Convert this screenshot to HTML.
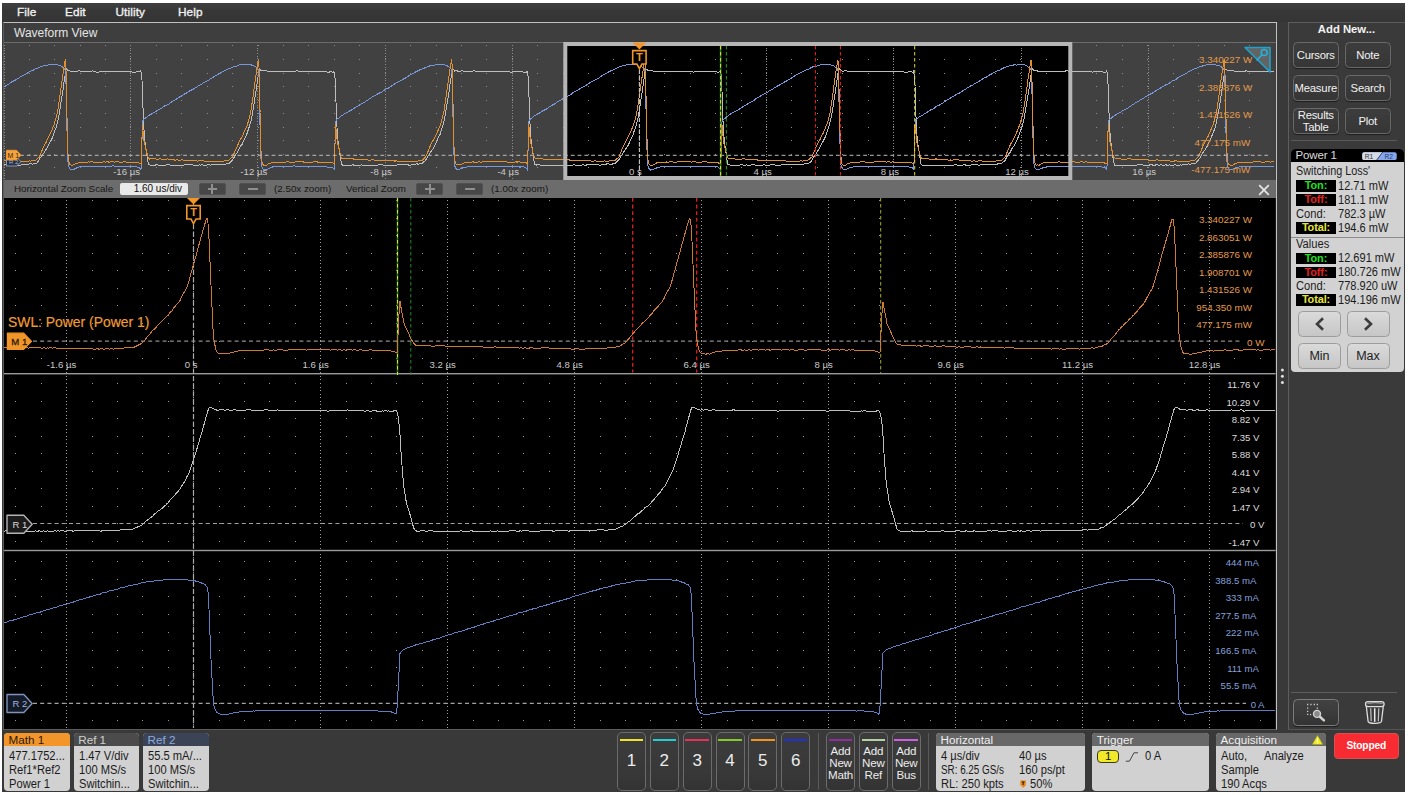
<!DOCTYPE html>
<html lang="en">
<head>
<meta charset="utf-8">
<title>Oscilloscope - Waveform View</title>
<style>
*{box-sizing:border-box;margin:0;padding:0}
html,body{width:1408px;height:795px;overflow:hidden;background:#fff}
body{font-family:"Liberation Sans",sans-serif;position:relative;color:#eee}
.abs{position:absolute}
#app{position:absolute;left:2px;top:3px;width:1403px;height:789px;background:#393939}
#menubar{position:absolute;left:2px;top:3px;width:1403px;height:19px;background:linear-gradient(#404040 0%,#373737 40%,#353535 100%)}
#menubar span{position:absolute;top:2.2px;font-size:11.8px;color:#f0f0f0;-webkit-text-stroke:0.35px #f0f0f0;letter-spacing:0.1px}
#wvframe{position:absolute;left:3px;top:22px;width:1274px;height:708px;border:1px solid #8a8a8a;border-left-color:#5c5c5c;border-top-color:#c0c0c0;border-right:1.5px solid #c2c2c2;border-bottom-color:#5c5c5c;background:#3e3e3e}
#wvtitle{position:absolute;left:14px;top:26.3px;font-size:12px;color:#e4e4e4}
#rpanel{position:absolute;left:1288px;top:22px;width:117px;height:708px;border-left:1px solid #5e5e5e;border-top:1px solid #5e5e5e;border-bottom:1px solid #555;background:#3a3a3a}
#zoombar{position:absolute;left:4px;top:180px;width:1271.5px;height:18px;background:#6c6c6c;font-size:9.8px;color:#161616}
#zoombar span{position:absolute;top:3.2px;white-space:nowrap}
.zin{position:absolute;left:116px;top:2.5px;width:67.5px;height:12.5px;background:#e9e9e9;border-radius:2px;font-size:10px;color:#111;text-align:right;padding-right:5.5px;line-height:12.5px}
.zb{position:absolute;top:2.5px;width:27px;height:12.5px;background:#474747;border-radius:2px;border:1px solid #515151}
.zb i{position:absolute;left:8px;top:4.6px;width:9.5px;height:1.8px;background:#8f8f8f}
.zb b{position:absolute;left:11.9px;top:0.8px;width:1.8px;height:9.4px;background:#8f8f8f}
svg text.tl{font-size:9.6px;fill:#c9c9c9;font-family:"Liberation Sans",sans-serif}
svg text.ml{font-size:9.85px;fill:#e39a4a;font-family:"Liberation Sans",sans-serif}
svg text.rl{font-size:9.6px;fill:#dcdcdc;font-family:"Liberation Sans",sans-serif}
svg text.bl{font-size:9.6px;fill:#86a0dc;font-family:"Liberation Sans",sans-serif}
/* right panel */
.rbtn{position:absolute;width:45.5px;height:26px;border:1px solid #696969;border-radius:4.5px;background:linear-gradient(#3d3d3d,#363636);color:#f2f2f2;font-size:11.3px;letter-spacing:-0.25px;text-align:center;line-height:24px;box-shadow:0 1px 1px rgba(0,0,0,.5)}
.rbtn.two{line-height:11.5px;padding-top:1px}
#addnew{position:absolute;left:1290px;top:22px;width:113px;text-align:center;font-size:11.3px;font-weight:bold;color:#f4f4f4;line-height:15px}
/* power badge */
#pbadge{position:absolute;left:1291px;top:149px;width:112.5px;height:222.5px;background:#d2d2d2;border-radius:4px;overflow:hidden;color:#1c1c1c;font-size:12px}
#pbadge .hd{position:absolute;left:0;top:0;width:100%;height:13px;background:#000}
#pbadge .hd span{position:absolute;left:4.5px;top:-0.4px;font-size:11.5px;letter-spacing:-0.15px;color:#dcdcdc}
#pbadge .ln{position:absolute;left:5px;white-space:nowrap;line-height:14px;transform:scaleX(.93);transform-origin:0 0}
#pbadge .bk{position:absolute;left:5px;width:40px;height:11.6px;background:#000;text-align:center;line-height:11.9px;font-size:10.9px;font-weight:bold;overflow:hidden;letter-spacing:-0.1px}
#pbadge .v{position:absolute;left:46.5px;white-space:nowrap;line-height:14px;transform:scaleX(.92);transform-origin:0 0}
.pbtn{position:absolute;width:43px;height:26.2px;border:1px solid #9d9d9d;border-radius:4.5px;background:linear-gradient(#dadada,#c6c6c6);color:#1c1c1c;font-size:12.5px;text-align:center;line-height:24px}
/* bottom bar */
.badge{position:absolute;top:732.5px;height:58px;background:#d1d1d1;border-radius:4px;overflow:hidden;color:#1b1b1b;font-size:12px}
.badge .hd{position:absolute;left:0;top:0;width:100%;height:13.5px;font-size:11.7px;line-height:14px;padding-left:4.5px;white-space:nowrap}
.badge .ln{position:absolute;left:5px;white-space:nowrap;line-height:14px;transform:scaleX(.93);transform-origin:0 0}
.chb{position:absolute;top:732px;width:29px;height:59px;border:1px solid #6b6b6b;border-radius:5px;background:linear-gradient(#3c3c3c,#383838 70%,#333);color:#ececec;text-align:center}
.chb u{position:absolute;left:1.8px;right:1.8px;top:5.6px;height:2.2px;text-decoration:none}
.chb span{position:absolute;left:0;width:100%;top:17.5px;font-size:17px;line-height:20px}
.chb.add span{top:11.7px;font-size:11.6px;line-height:12px;letter-spacing:-0.2px}
.vsep{position:absolute;top:733px;width:1.3px;height:57px;background:#595959}
</style>
</head>
<body>
<div id="app"></div>
<div id="menubar"><span style="left:15px">File</span><span style="left:63px">Edit</span><span style="left:113.5px">Utility</span><span style="left:176px">Help</span></div>
<div id="wvframe"></div>
<div id="wvtitle">Waveform View</div>
<div id="rpanel"></div>

<svg class="abs" style="left:0;top:0" width="1408" height="795" viewBox="0 0 1408 795">
<rect x="4" y="42" width="1271.6" height="138" fill="#414141"/>
<rect x="565" y="44" width="505" height="134" fill="#000"/>
<rect x="4" y="42" width="1271.6" height="1" fill="#6c6c6c"/>
<path d="M29 45.5h1M54 45.5h1M80 45.5h1M105 45.5h1M130 45.5h1M156 45.5h1M181 45.5h1M207 45.5h1M232 45.5h1M258 45.5h1M283 45.5h1M308 45.5h1M334 45.5h1M359 45.5h1M385 45.5h1M410 45.5h1M436 45.5h1M461 45.5h1M486 45.5h1M512 45.5h1M537 45.5h1M1096 45.5h1M1122 45.5h1M1147 45.5h1M1173 45.5h1M1198 45.5h1M1224 45.5h1M1249 45.5h1M29 59.5h1M54 59.5h1M80 59.5h1M105 59.5h1M130 59.5h1M156 59.5h1M181 59.5h1M207 59.5h1M232 59.5h1M258 59.5h1M283 59.5h1M308 59.5h1M334 59.5h1M359 59.5h1M385 59.5h1M410 59.5h1M436 59.5h1M461 59.5h1M486 59.5h1M512 59.5h1M537 59.5h1M563 59.5h1M588 59.5h1M613 59.5h1M639 59.5h1M664 59.5h1M690 59.5h1M715 59.5h1M741 59.5h1M766 59.5h1M791 59.5h1M817 59.5h1M842 59.5h1M868 59.5h1M893 59.5h1M919 59.5h1M944 59.5h1M969 59.5h1M995 59.5h1M1020 59.5h1M1046 59.5h1M1071 59.5h1M1096 59.5h1M1122 59.5h1M1147 59.5h1M1173 59.5h1M1198 59.5h1M1224 59.5h1M1249 59.5h1M29 73.5h1M54 73.5h1M80 73.5h1M105 73.5h1M130 73.5h1M156 73.5h1M181 73.5h1M207 73.5h1M232 73.5h1M258 73.5h1M283 73.5h1M308 73.5h1M334 73.5h1M359 73.5h1M385 73.5h1M410 73.5h1M436 73.5h1M461 73.5h1M486 73.5h1M512 73.5h1M537 73.5h1M563 73.5h1M588 73.5h1M613 73.5h1M639 73.5h1M664 73.5h1M690 73.5h1M715 73.5h1M741 73.5h1M766 73.5h1M791 73.5h1M817 73.5h1M842 73.5h1M868 73.5h1M893 73.5h1M919 73.5h1M944 73.5h1M969 73.5h1M995 73.5h1M1020 73.5h1M1046 73.5h1M1071 73.5h1M1096 73.5h1M1122 73.5h1M1147 73.5h1M1173 73.5h1M1198 73.5h1M1224 73.5h1M1249 73.5h1M29 86.5h1M54 86.5h1M80 86.5h1M105 86.5h1M130 86.5h1M156 86.5h1M181 86.5h1M207 86.5h1M232 86.5h1M258 86.5h1M283 86.5h1M308 86.5h1M334 86.5h1M359 86.5h1M385 86.5h1M410 86.5h1M436 86.5h1M461 86.5h1M486 86.5h1M512 86.5h1M537 86.5h1M563 86.5h1M588 86.5h1M613 86.5h1M639 86.5h1M664 86.5h1M690 86.5h1M715 86.5h1M741 86.5h1M766 86.5h1M791 86.5h1M817 86.5h1M842 86.5h1M868 86.5h1M893 86.5h1M919 86.5h1M944 86.5h1M969 86.5h1M995 86.5h1M1020 86.5h1M1046 86.5h1M1071 86.5h1M1096 86.5h1M1122 86.5h1M1147 86.5h1M1173 86.5h1M1198 86.5h1M1224 86.5h1M1249 86.5h1M29 100.5h1M54 100.5h1M80 100.5h1M105 100.5h1M130 100.5h1M156 100.5h1M181 100.5h1M207 100.5h1M232 100.5h1M258 100.5h1M283 100.5h1M308 100.5h1M334 100.5h1M359 100.5h1M385 100.5h1M410 100.5h1M436 100.5h1M461 100.5h1M486 100.5h1M512 100.5h1M537 100.5h1M563 100.5h1M588 100.5h1M613 100.5h1M639 100.5h1M664 100.5h1M690 100.5h1M715 100.5h1M741 100.5h1M766 100.5h1M791 100.5h1M817 100.5h1M842 100.5h1M868 100.5h1M893 100.5h1M919 100.5h1M944 100.5h1M969 100.5h1M995 100.5h1M1020 100.5h1M1046 100.5h1M1071 100.5h1M1096 100.5h1M1122 100.5h1M1147 100.5h1M1173 100.5h1M1198 100.5h1M1224 100.5h1M1249 100.5h1M29 113.5h1M54 113.5h1M80 113.5h1M105 113.5h1M130 113.5h1M156 113.5h1M181 113.5h1M207 113.5h1M232 113.5h1M258 113.5h1M283 113.5h1M308 113.5h1M334 113.5h1M359 113.5h1M385 113.5h1M410 113.5h1M436 113.5h1M461 113.5h1M486 113.5h1M512 113.5h1M537 113.5h1M563 113.5h1M588 113.5h1M613 113.5h1M639 113.5h1M664 113.5h1M690 113.5h1M715 113.5h1M741 113.5h1M766 113.5h1M791 113.5h1M817 113.5h1M842 113.5h1M868 113.5h1M893 113.5h1M919 113.5h1M944 113.5h1M969 113.5h1M995 113.5h1M1020 113.5h1M1046 113.5h1M1071 113.5h1M1096 113.5h1M1122 113.5h1M1147 113.5h1M1173 113.5h1M1198 113.5h1M1224 113.5h1M1249 113.5h1M29 127.5h1M54 127.5h1M80 127.5h1M105 127.5h1M130 127.5h1M156 127.5h1M181 127.5h1M207 127.5h1M232 127.5h1M258 127.5h1M283 127.5h1M308 127.5h1M334 127.5h1M359 127.5h1M385 127.5h1M410 127.5h1M436 127.5h1M461 127.5h1M486 127.5h1M512 127.5h1M537 127.5h1M563 127.5h1M588 127.5h1M613 127.5h1M639 127.5h1M664 127.5h1M690 127.5h1M715 127.5h1M741 127.5h1M766 127.5h1M791 127.5h1M817 127.5h1M842 127.5h1M868 127.5h1M893 127.5h1M919 127.5h1M944 127.5h1M969 127.5h1M995 127.5h1M1020 127.5h1M1046 127.5h1M1071 127.5h1M1096 127.5h1M1122 127.5h1M1147 127.5h1M1173 127.5h1M1198 127.5h1M1224 127.5h1M1249 127.5h1M29 140.5h1M54 140.5h1M80 140.5h1M105 140.5h1M130 140.5h1M156 140.5h1M181 140.5h1M207 140.5h1M232 140.5h1M258 140.5h1M283 140.5h1M308 140.5h1M334 140.5h1M359 140.5h1M385 140.5h1M410 140.5h1M436 140.5h1M461 140.5h1M486 140.5h1M512 140.5h1M537 140.5h1M563 140.5h1M588 140.5h1M613 140.5h1M639 140.5h1M664 140.5h1M690 140.5h1M715 140.5h1M741 140.5h1M766 140.5h1M791 140.5h1M817 140.5h1M842 140.5h1M868 140.5h1M893 140.5h1M919 140.5h1M944 140.5h1M969 140.5h1M995 140.5h1M1020 140.5h1M1046 140.5h1M1071 140.5h1M1096 140.5h1M1122 140.5h1M1147 140.5h1M1173 140.5h1M1198 140.5h1M1224 140.5h1M1249 140.5h1M29 154.5h1M54 154.5h1M80 154.5h1M105 154.5h1M130 154.5h1M156 154.5h1M181 154.5h1M207 154.5h1M232 154.5h1M258 154.5h1M283 154.5h1M308 154.5h1M334 154.5h1M359 154.5h1M385 154.5h1M410 154.5h1M436 154.5h1M461 154.5h1M486 154.5h1M512 154.5h1M537 154.5h1M563 154.5h1M588 154.5h1M613 154.5h1M639 154.5h1M664 154.5h1M690 154.5h1M715 154.5h1M741 154.5h1M766 154.5h1M791 154.5h1M817 154.5h1M842 154.5h1M868 154.5h1M893 154.5h1M919 154.5h1M944 154.5h1M969 154.5h1M995 154.5h1M1020 154.5h1M1046 154.5h1M1071 154.5h1M1096 154.5h1M1122 154.5h1M1147 154.5h1M1173 154.5h1M1198 154.5h1M1224 154.5h1M1249 154.5h1M29 167.5h1M54 167.5h1M80 167.5h1M105 167.5h1M130 167.5h1M156 167.5h1M181 167.5h1M207 167.5h1M232 167.5h1M258 167.5h1M283 167.5h1M308 167.5h1M334 167.5h1M359 167.5h1M385 167.5h1M410 167.5h1M436 167.5h1M461 167.5h1M486 167.5h1M512 167.5h1M537 167.5h1M563 167.5h1M588 167.5h1M613 167.5h1M639 167.5h1M664 167.5h1M690 167.5h1M715 167.5h1M741 167.5h1M766 167.5h1M791 167.5h1M817 167.5h1M842 167.5h1M868 167.5h1M893 167.5h1M919 167.5h1M944 167.5h1M969 167.5h1M995 167.5h1M1020 167.5h1M1046 167.5h1M1071 167.5h1M1096 167.5h1M1122 167.5h1M1147 167.5h1M1173 167.5h1M1198 167.5h1M1224 167.5h1M1249 167.5h1" stroke="#8e8e8e" stroke-width="1" fill="none" opacity="1" shape-rendering="crispEdges"/>
<path d="M4 45.5h1M4 48.5h1M4 50.5h1M4 53.5h1M4 56.5h1M4 58.5h1M4 61.5h1M4 64.5h1M4 67.5h1M4 69.5h1M4 72.5h1M4 75.5h1M4 78.5h1M4 80.5h1M4 83.5h1M4 86.5h1M4 88.5h1M4 91.5h1M4 94.5h1M4 97.5h1M4 99.5h1M4 102.5h1M4 105.5h1M4 107.5h1M4 110.5h1M4 113.5h1M4 116.5h1M4 118.5h1M4 121.5h1M4 124.5h1M4 126.5h1M4 129.5h1M4 132.5h1M4 135.5h1M4 137.5h1M4 140.5h1M4 143.5h1M4 146.5h1M4 148.5h1M4 151.5h1M4 154.5h1M4 156.5h1M4 159.5h1M4 162.5h1M4 165.5h1M4 167.5h1M4 170.5h1M4 173.5h1M4 175.5h1M4 178.5h1M130 45.5h1M130 48.5h1M130 50.5h1M130 53.5h1M130 56.5h1M130 58.5h1M130 61.5h1M130 64.5h1M130 67.5h1M130 69.5h1M130 72.5h1M130 75.5h1M130 78.5h1M130 80.5h1M130 83.5h1M130 86.5h1M130 88.5h1M130 91.5h1M130 94.5h1M130 97.5h1M130 99.5h1M130 102.5h1M130 105.5h1M130 107.5h1M130 110.5h1M130 113.5h1M130 116.5h1M130 118.5h1M130 121.5h1M130 124.5h1M130 126.5h1M130 129.5h1M130 132.5h1M130 135.5h1M130 137.5h1M130 140.5h1M130 143.5h1M130 146.5h1M130 148.5h1M130 151.5h1M130 154.5h1M130 156.5h1M130 159.5h1M130 162.5h1M130 165.5h1M130 167.5h1M130 170.5h1M130 173.5h1M130 175.5h1M130 178.5h1M257 45.5h1M257 48.5h1M257 50.5h1M257 53.5h1M257 56.5h1M257 58.5h1M257 61.5h1M257 64.5h1M257 67.5h1M257 69.5h1M257 72.5h1M257 75.5h1M257 78.5h1M257 80.5h1M257 83.5h1M257 86.5h1M257 88.5h1M257 91.5h1M257 94.5h1M257 97.5h1M257 99.5h1M257 102.5h1M257 105.5h1M257 107.5h1M257 110.5h1M257 113.5h1M257 116.5h1M257 118.5h1M257 121.5h1M257 124.5h1M257 126.5h1M257 129.5h1M257 132.5h1M257 135.5h1M257 137.5h1M257 140.5h1M257 143.5h1M257 146.5h1M257 148.5h1M257 151.5h1M257 154.5h1M257 156.5h1M257 159.5h1M257 162.5h1M257 165.5h1M257 167.5h1M257 170.5h1M257 173.5h1M257 175.5h1M257 178.5h1M385 45.5h1M385 48.5h1M385 50.5h1M385 53.5h1M385 56.5h1M385 58.5h1M385 61.5h1M385 64.5h1M385 67.5h1M385 69.5h1M385 72.5h1M385 75.5h1M385 78.5h1M385 80.5h1M385 83.5h1M385 86.5h1M385 88.5h1M385 91.5h1M385 94.5h1M385 97.5h1M385 99.5h1M385 102.5h1M385 105.5h1M385 107.5h1M385 110.5h1M385 113.5h1M385 116.5h1M385 118.5h1M385 121.5h1M385 124.5h1M385 126.5h1M385 129.5h1M385 132.5h1M385 135.5h1M385 137.5h1M385 140.5h1M385 143.5h1M385 146.5h1M385 148.5h1M385 151.5h1M385 154.5h1M385 156.5h1M385 159.5h1M385 162.5h1M385 165.5h1M385 167.5h1M385 170.5h1M385 173.5h1M385 175.5h1M385 178.5h1M512 45.5h1M512 48.5h1M512 50.5h1M512 53.5h1M512 56.5h1M512 58.5h1M512 61.5h1M512 64.5h1M512 67.5h1M512 69.5h1M512 72.5h1M512 75.5h1M512 78.5h1M512 80.5h1M512 83.5h1M512 86.5h1M512 88.5h1M512 91.5h1M512 94.5h1M512 97.5h1M512 99.5h1M512 102.5h1M512 105.5h1M512 107.5h1M512 110.5h1M512 113.5h1M512 116.5h1M512 118.5h1M512 121.5h1M512 124.5h1M512 126.5h1M512 129.5h1M512 132.5h1M512 135.5h1M512 137.5h1M512 140.5h1M512 143.5h1M512 146.5h1M512 148.5h1M512 151.5h1M512 154.5h1M512 156.5h1M512 159.5h1M512 162.5h1M512 165.5h1M512 167.5h1M512 170.5h1M512 173.5h1M512 175.5h1M512 178.5h1M639 45.5h1M639 48.5h1M639 50.5h1M639 53.5h1M639 56.5h1M639 58.5h1M639 61.5h1M639 64.5h1M639 67.5h1M639 69.5h1M639 72.5h1M639 75.5h1M639 78.5h1M639 80.5h1M639 83.5h1M639 86.5h1M639 88.5h1M639 91.5h1M639 94.5h1M639 97.5h1M639 99.5h1M639 102.5h1M639 105.5h1M639 107.5h1M639 110.5h1M639 113.5h1M639 116.5h1M639 118.5h1M639 121.5h1M639 124.5h1M639 126.5h1M639 129.5h1M639 132.5h1M639 135.5h1M639 137.5h1M639 140.5h1M639 143.5h1M639 146.5h1M639 148.5h1M639 151.5h1M639 154.5h1M639 156.5h1M639 159.5h1M639 162.5h1M639 165.5h1M639 167.5h1M639 170.5h1M639 173.5h1M639 175.5h1M639 178.5h1M766 45.5h1M766 48.5h1M766 50.5h1M766 53.5h1M766 56.5h1M766 58.5h1M766 61.5h1M766 64.5h1M766 67.5h1M766 69.5h1M766 72.5h1M766 75.5h1M766 78.5h1M766 80.5h1M766 83.5h1M766 86.5h1M766 88.5h1M766 91.5h1M766 94.5h1M766 97.5h1M766 99.5h1M766 102.5h1M766 105.5h1M766 107.5h1M766 110.5h1M766 113.5h1M766 116.5h1M766 118.5h1M766 121.5h1M766 124.5h1M766 126.5h1M766 129.5h1M766 132.5h1M766 135.5h1M766 137.5h1M766 140.5h1M766 143.5h1M766 146.5h1M766 148.5h1M766 151.5h1M766 154.5h1M766 156.5h1M766 159.5h1M766 162.5h1M766 165.5h1M766 167.5h1M766 170.5h1M766 173.5h1M766 175.5h1M766 178.5h1M893 45.5h1M893 48.5h1M893 50.5h1M893 53.5h1M893 56.5h1M893 58.5h1M893 61.5h1M893 64.5h1M893 67.5h1M893 69.5h1M893 72.5h1M893 75.5h1M893 78.5h1M893 80.5h1M893 83.5h1M893 86.5h1M893 88.5h1M893 91.5h1M893 94.5h1M893 97.5h1M893 99.5h1M893 102.5h1M893 105.5h1M893 107.5h1M893 110.5h1M893 113.5h1M893 116.5h1M893 118.5h1M893 121.5h1M893 124.5h1M893 126.5h1M893 129.5h1M893 132.5h1M893 135.5h1M893 137.5h1M893 140.5h1M893 143.5h1M893 146.5h1M893 148.5h1M893 151.5h1M893 154.5h1M893 156.5h1M893 159.5h1M893 162.5h1M893 165.5h1M893 167.5h1M893 170.5h1M893 173.5h1M893 175.5h1M893 178.5h1M1021 45.5h1M1021 48.5h1M1021 50.5h1M1021 53.5h1M1021 56.5h1M1021 58.5h1M1021 61.5h1M1021 64.5h1M1021 67.5h1M1021 69.5h1M1021 72.5h1M1021 75.5h1M1021 78.5h1M1021 80.5h1M1021 83.5h1M1021 86.5h1M1021 88.5h1M1021 91.5h1M1021 94.5h1M1021 97.5h1M1021 99.5h1M1021 102.5h1M1021 105.5h1M1021 107.5h1M1021 110.5h1M1021 113.5h1M1021 116.5h1M1021 118.5h1M1021 121.5h1M1021 124.5h1M1021 126.5h1M1021 129.5h1M1021 132.5h1M1021 135.5h1M1021 137.5h1M1021 140.5h1M1021 143.5h1M1021 146.5h1M1021 148.5h1M1021 151.5h1M1021 154.5h1M1021 156.5h1M1021 159.5h1M1021 162.5h1M1021 165.5h1M1021 167.5h1M1021 170.5h1M1021 173.5h1M1021 175.5h1M1021 178.5h1M1148 45.5h1M1148 48.5h1M1148 50.5h1M1148 53.5h1M1148 56.5h1M1148 58.5h1M1148 61.5h1M1148 64.5h1M1148 67.5h1M1148 69.5h1M1148 72.5h1M1148 75.5h1M1148 78.5h1M1148 80.5h1M1148 83.5h1M1148 86.5h1M1148 88.5h1M1148 91.5h1M1148 94.5h1M1148 97.5h1M1148 99.5h1M1148 102.5h1M1148 105.5h1M1148 107.5h1M1148 110.5h1M1148 113.5h1M1148 116.5h1M1148 118.5h1M1148 121.5h1M1148 124.5h1M1148 126.5h1M1148 129.5h1M1148 132.5h1M1148 135.5h1M1148 137.5h1M1148 140.5h1M1148 143.5h1M1148 146.5h1M1148 148.5h1M1148 151.5h1M1148 154.5h1M1148 156.5h1M1148 159.5h1M1148 162.5h1M1148 165.5h1M1148 167.5h1M1148 170.5h1M1148 173.5h1M1148 175.5h1M1148 178.5h1" stroke="#8e8e8e" stroke-width="1" fill="none" opacity="1" shape-rendering="crispEdges"/>
<polyline points="4.0,164.6 5.0,164.6 5.3,164.8 6.0,165.0 7.0,165.1 8.0,164.9 9.0,164.9 10.0,164.8 11.0,165.2 12.0,165.3 13.0,165.2 14.0,164.8 15.0,164.8 16.0,164.9 17.0,165.1 18.0,165.1 19.0,165.3 20.0,165.2 21.0,165.0 22.0,164.5 22.5,164.1 23.0,164.1 24.0,164.5 25.0,164.9 26.0,164.8 27.0,164.5 28.0,164.2 29.0,164.1 30.0,163.7 31.0,163.8 32.0,163.8 32.5,164.1 33.0,163.9 34.0,163.9 35.0,163.5 35.7,163.4 36.0,163.4 37.0,162.8 38.0,161.6 38.8,160.6 39.0,159.8 40.0,158.3 41.0,157.0 42.0,155.6 43.0,154.3 43.6,153.5 44.0,153.0 45.0,151.3 46.0,149.5 47.0,147.7 48.0,146.2 48.9,144.7 49.0,144.3 50.0,142.4 51.0,140.6 52.0,138.5 53.0,136.0 53.3,135.1 54.0,132.9 55.0,130.3 56.0,127.7 56.4,126.9 57.0,124.3 58.0,119.9 58.6,117.4 59.0,115.1 60.0,109.4 60.3,107.2 61.0,102.3 62.0,95.8 63.0,89.6 63.0,89.4 64.0,82.3 65.0,75.6 65.2,74.7 65.8,70.7 66.0,69.6 66.0,69.3 66.8,68.7 67.0,69.0 67.5,69.7 68.0,70.4 68.2,70.5 69.0,70.5 70.0,71.0 71.0,71.6 72.0,71.7 73.0,71.8 74.0,71.6 75.0,71.8 75.3,71.9 76.0,71.9 77.0,71.6 78.0,71.1 79.0,70.9 80.0,71.0 81.0,71.1 82.0,71.2 83.0,71.2 84.0,71.5 85.0,71.6 86.0,71.9 87.0,71.9 88.0,71.9 89.0,71.8 90.0,71.8 91.0,71.4 92.0,70.9 93.0,70.9 94.0,71.3 95.0,71.8 96.0,72.0 97.0,72.2 98.0,72.2 99.0,71.9 100.0,71.5 101.0,71.4 102.0,71.5 102.5,71.7 103.0,71.6 104.0,71.4 105.0,71.5 106.0,71.4 107.0,71.3 108.0,71.2 109.0,71.6 110.0,71.8 111.0,71.8 112.0,71.5 113.0,71.2 114.0,71.4 115.0,71.7 116.0,71.9 117.0,71.6 118.0,71.3 119.0,71.4 120.0,71.6 121.0,71.8 122.0,71.9 123.0,71.8 124.0,71.4 125.0,71.2 126.0,71.6 126.5,71.6 127.0,71.4 128.0,71.3 129.0,71.4 130.0,71.5 131.0,71.8 132.0,72.1 133.0,72.2 134.0,72.4 135.0,72.2 136.0,72.1 137.0,71.7 138.0,71.5 139.0,71.3 139.7,71.7 140.0,71.8 140.4,71.4 140.8,70.8 141.0,71.8 141.2,72.6 141.6,75.6 142.0,80.4 142.3,84.7 143.0,107.6 143.0,109.1 143.9,129.5 144.0,130.1 145.0,142.0 145.0,142.1 146.0,148.6 146.3,150.4 147.0,155.5 147.6,159.6 148.0,162.2 148.1,162.8 148.5,164.1 149.0,164.5 149.3,164.8 150.0,164.9 150.2,165.1 151.0,165.4 152.0,165.4 153.0,165.5 154.0,165.4 155.0,165.2 156.0,164.7 157.0,164.8 158.0,165.0 159.0,165.2 160.0,165.4 161.0,165.6 162.0,165.8 163.0,165.3 164.0,165.1 165.0,165.1 166.0,165.0 167.0,164.8 168.0,164.8 169.0,164.9 170.0,164.9 171.0,165.3 172.0,165.8 173.0,165.5 174.0,165.1 174.5,165.2 175.0,165.2 176.0,165.2 177.0,165.1 178.0,165.2 179.0,165.4 180.0,165.3 181.0,165.2 182.0,165.2 183.0,165.3 184.0,164.9 185.0,164.8 186.0,164.8 187.0,164.6 188.0,164.2 189.0,164.2 190.0,164.4 191.0,164.6 192.0,164.6 193.0,165.0 194.0,165.4 195.0,165.4 196.0,165.3 197.0,165.6 198.0,165.7 198.5,165.2 199.0,164.8 200.0,165.0 201.0,165.1 202.0,164.9 203.0,164.9 204.0,165.2 205.0,165.4 206.0,165.2 207.0,165.0 208.0,164.7 209.0,164.8 210.0,165.0 211.0,165.0 212.0,164.7 213.0,164.7 214.0,165.0 215.0,164.9 215.6,164.4 216.0,164.2 217.0,164.5 218.0,164.8 219.0,164.9 220.0,164.5 221.0,164.2 222.0,164.0 223.0,164.1 224.0,164.4 225.0,164.6 225.6,164.5 226.0,164.0 227.0,163.9 228.0,163.9 228.8,163.7 229.0,163.4 230.0,162.3 231.0,161.4 231.9,160.5 232.0,160.6 233.0,159.2 234.0,157.6 235.0,155.6 236.0,154.0 236.8,153.0 237.0,153.1 238.0,151.4 239.0,149.4 240.0,147.3 241.0,145.6 242.0,144.3 242.0,144.5 243.0,142.4 244.0,140.1 245.0,138.1 246.0,136.3 246.4,135.3 247.0,133.6 248.0,130.5 249.0,127.6 249.5,126.1 250.0,124.5 251.0,120.7 251.7,117.7 252.0,115.9 253.0,110.0 253.5,107.4 254.0,103.9 255.0,97.3 256.0,90.9 256.1,90.0 257.0,83.7 258.0,76.7 258.3,74.7 259.0,70.6 259.0,70.5 259.2,69.9 259.9,69.5 260.0,69.5 260.6,70.4 261.0,70.6 261.4,70.9 262.0,70.7 263.0,70.7 264.0,70.6 265.0,70.3 266.0,70.7 267.0,71.0 268.0,71.0 268.4,71.1 269.0,71.5 270.0,71.6 271.0,71.2 272.0,71.1 273.0,71.1 274.0,71.3 275.0,71.3 276.0,71.3 277.0,71.3 278.0,71.2 279.0,71.1 280.0,71.0 281.0,71.2 282.0,71.4 283.0,71.7 284.0,71.4 285.0,71.4 286.0,71.4 287.0,71.6 288.0,71.4 289.0,71.4 290.0,71.6 291.0,71.7 292.0,71.7 293.0,71.7 294.0,71.9 295.0,71.8 295.6,71.3 296.0,70.8 297.0,70.7 298.0,70.9 299.0,71.3 300.0,71.6 301.0,71.6 302.0,71.6 303.0,71.8 304.0,72.1 305.0,71.9 306.0,71.9 307.0,71.9 308.0,71.9 309.0,71.6 310.0,71.4 311.0,71.2 312.0,71.1 313.0,71.1 314.0,71.2 315.0,71.2 316.0,71.3 317.0,71.4 318.0,71.7 319.0,71.6 319.6,71.4 320.0,71.6 321.0,71.9 322.0,71.8 323.0,71.8 324.0,71.8 325.0,71.8 326.0,71.8 327.0,72.1 328.0,72.3 329.0,72.2 330.0,71.8 331.0,71.7 332.0,72.0 332.8,72.3 333.0,72.3 333.6,71.9 333.9,71.5 334.0,71.7 334.4,72.6 334.8,75.4 335.0,78.0 335.5,84.7 336.0,102.3 336.2,108.9 337.0,127.3 337.1,129.3 338.0,141.0 338.1,142.5 339.0,148.2 339.4,151.1 340.0,154.6 340.8,159.7 341.0,161.2 341.2,163.0 341.6,164.2 342.0,164.5 342.4,165.0 343.0,165.6 343.4,165.8 344.0,165.8 345.0,165.6 346.0,165.4 347.0,165.1 348.0,165.2 349.0,165.5 350.0,165.8 351.0,165.5 352.0,164.9 353.0,164.7 354.0,165.2 355.0,165.5 356.0,165.4 357.0,165.0 358.0,165.1 359.0,165.2 360.0,165.2 361.0,165.0 362.0,164.9 363.0,165.3 364.0,165.4 365.0,165.4 366.0,165.3 367.0,165.5 367.6,165.3 368.0,165.1 369.0,165.1 370.0,165.2 371.0,165.1 372.0,165.0 373.0,165.1 374.0,165.4 375.0,165.5 376.0,165.5 377.0,165.2 378.0,165.1 379.0,164.7 380.0,164.8 381.0,164.8 382.0,165.0 383.0,164.9 384.0,165.3 385.0,165.2 386.0,165.3 387.0,165.3 388.0,165.6 389.0,165.3 390.0,165.1 391.0,165.0 391.6,165.1 392.0,165.1 393.0,165.1 394.0,165.1 395.0,165.1 396.0,165.2 397.0,165.0 398.0,164.8 399.0,164.8 400.0,164.4 401.0,164.2 402.0,164.4 403.0,164.5 404.0,164.2 405.0,164.3 406.0,164.5 407.0,164.8 408.0,164.8 408.8,165.1 409.0,165.1 410.0,165.1 411.0,165.0 412.0,164.9 413.0,164.8 414.0,164.8 415.0,164.5 416.0,164.0 417.0,163.8 418.0,164.3 418.8,164.5 419.0,164.1 420.0,163.3 421.0,163.2 422.0,163.3 423.0,162.6 424.0,161.7 425.0,160.9 425.1,161.0 426.0,159.4 427.0,157.7 428.0,156.1 429.0,154.7 429.9,153.1 430.0,152.8 431.0,151.5 432.0,150.2 433.0,148.8 434.0,146.8 435.0,145.0 435.2,144.6 436.0,143.1 437.0,140.9 438.0,138.3 439.0,136.1 439.6,135.1 440.0,134.5 441.0,131.3 442.0,128.1 442.7,126.1 443.0,124.9 444.0,120.9 444.9,117.2 445.0,116.5 446.0,110.4 446.6,106.6 447.0,104.4 448.0,98.2 449.0,91.9 449.3,89.9 450.0,84.6 451.0,77.8 451.5,74.5 452.0,71.0 452.1,69.8 452.4,69.1 453.0,68.9 453.1,69.1 453.8,70.0 454.0,70.2 454.6,70.9 455.0,70.7 456.0,70.7 457.0,70.8 458.0,71.2 459.0,71.1 460.0,71.0 461.0,71.0 461.6,70.8 462.0,70.7 463.0,71.0 464.0,71.6 465.0,71.6 466.0,71.3 467.0,71.0 468.0,71.1 469.0,71.2 470.0,71.4 471.0,71.6 472.0,71.4 473.0,71.0 474.0,70.8 475.0,71.1 476.0,71.4 477.0,71.7 478.0,71.7 479.0,71.6 480.0,71.4 481.0,71.5 482.0,71.5 483.0,71.7 484.0,71.7 485.0,71.5 486.0,71.4 487.0,71.5 488.0,71.5 488.8,71.4 489.0,71.4 490.0,71.6 491.0,71.5 492.0,71.8 493.0,71.6 494.0,71.5 495.0,71.0 496.0,71.2 497.0,71.4 498.0,71.4 499.0,71.5 500.0,71.6 501.0,71.8 502.0,71.6 503.0,71.5 504.0,71.5 505.0,71.5 506.0,71.7 507.0,71.9 508.0,71.7 509.0,71.7 510.0,71.9 511.0,72.3 512.0,72.2 512.8,71.6 513.0,71.2 514.0,71.3 515.0,71.5 516.0,71.4 517.0,71.5 518.0,71.8 519.0,71.9 520.0,71.6 521.0,71.4 522.0,71.7 523.0,72.0 524.0,72.0 525.0,72.1 526.0,72.3 526.7,71.8 527.0,71.2 527.1,71.3 527.5,72.9 528.0,75.9 528.0,76.1 528.6,84.9 529.0,96.8 529.4,108.8 530.0,123.8 530.2,129.5 531.0,138.7 531.3,142.1 532.0,147.0 532.6,151.2 533.0,153.9 533.9,160.5 534.0,161.1 534.4,163.4 534.8,164.7 535.0,164.4 535.6,164.8 536.0,164.7 536.6,165.1 537.0,165.0 538.0,164.8 539.0,164.8 540.0,164.9 541.0,165.3 542.0,165.6 543.0,165.8 544.0,165.6 545.0,165.4 546.0,165.1 547.0,165.0 548.0,165.2 549.0,165.6 550.0,165.4 551.0,165.4 552.0,165.5 553.0,165.4 554.0,165.2 555.0,165.1 556.0,165.1 557.0,165.0 558.0,165.5 559.0,166.0 560.0,165.8 560.8,165.3 561.0,165.0 562.0,165.3 563.0,165.4 564.0,165.3 565.0,165.2 566.0,165.1 567.0,165.0 568.0,165.0 569.0,165.2 570.0,165.2 571.0,165.1 572.0,165.1 573.0,165.0 574.0,164.9 575.0,165.0 576.0,165.1 577.0,165.3 578.0,165.2 579.0,165.3 580.0,165.2 581.0,165.2 582.0,165.0 583.0,164.8 584.0,165.0 584.8,165.3 585.0,165.5 586.0,165.2 587.0,164.8 588.0,164.6 589.0,164.6 590.0,164.8 591.0,164.9 592.0,164.8 593.0,164.8 594.0,164.7 595.0,164.8 596.0,164.6 597.0,164.8 598.0,164.9 599.0,165.0 600.0,165.0 601.0,165.1 602.0,164.8 602.0,164.6 603.0,164.3 604.0,164.3 605.0,164.2 606.0,164.1 607.0,163.9 608.0,163.9 609.0,164.1 610.0,164.4 611.0,164.3 612.0,164.1 612.0,164.0 613.0,163.7 614.0,163.5 615.0,163.3 615.2,163.2 616.0,162.4 617.0,161.3 618.0,160.6 618.2,160.5 619.0,159.5 620.0,157.9 621.0,156.3 622.0,154.7 623.0,153.2 623.1,153.2 624.0,151.4 625.0,149.8 626.0,148.4 627.0,147.2 628.0,145.6 628.4,144.9 629.0,143.6 630.0,141.3 631.0,139.4 632.0,137.2 632.8,135.5 633.0,134.6 634.0,131.6 635.0,129.0 635.8,126.5 636.0,126.1 637.0,121.9 638.0,117.8 638.0,117.2 639.0,111.7 639.8,107.1 640.0,106.0 641.0,99.2 642.0,92.8 642.4,89.7 643.0,85.9 644.0,78.8 644.6,74.3 645.0,72.1 645.3,70.6 645.5,69.7 646.0,69.0 646.2,68.9 647.0,69.6 647.0,69.6 647.7,70.3 648.0,70.5 649.0,70.6 650.0,70.8 651.0,70.7 652.0,70.8 653.0,71.0 654.0,71.2 654.8,71.4 655.0,71.4 656.0,71.4 657.0,71.5 658.0,71.6 659.0,71.5 660.0,71.0 661.0,71.0 662.0,71.0 663.0,71.3 664.0,71.2 665.0,71.3 666.0,71.5 667.0,71.8 668.0,71.6 669.0,71.2 670.0,71.0 671.0,71.2 672.0,71.4 673.0,71.6 674.0,71.7 675.0,71.8 676.0,71.6 677.0,71.6 678.0,71.7 679.0,71.7 680.0,71.7 681.0,71.6 682.0,71.3 682.0,71.3 683.0,71.5 684.0,71.8 685.0,71.6 686.0,71.3 687.0,70.9 688.0,71.2 689.0,71.7 690.0,71.9 691.0,71.6 692.0,71.8 693.0,72.0 694.0,72.1 695.0,71.7 696.0,71.7 697.0,71.6 698.0,71.5 699.0,71.5 700.0,71.7 701.0,71.9 702.0,71.5 703.0,71.3 704.0,71.1 705.0,71.3 706.0,71.4 706.0,71.5 707.0,71.4 708.0,71.7 709.0,71.6 710.0,71.7 711.0,71.6 712.0,72.0 713.0,71.8 714.0,71.9 715.0,71.8 716.0,71.9 717.0,71.9 718.0,72.3 719.0,72.3 719.2,72.0 719.9,70.9 720.0,70.7 720.2,70.4 720.7,71.9 721.0,74.3 721.1,75.1 721.8,84.5 722.0,91.3 722.5,109.0 723.0,120.3 723.4,129.5 724.0,136.6 724.4,142.1 725.0,146.0 725.8,150.9 726.0,152.6 727.0,159.7 727.1,159.9 727.6,162.7 728.0,164.5 728.0,164.6 728.8,164.6 729.0,164.5 729.7,164.8 730.0,165.1 731.0,165.1 732.0,165.3 733.0,165.2 734.0,165.3 735.0,165.2 736.0,165.3 737.0,165.3 738.0,165.3 739.0,165.3 740.0,165.1 741.0,164.8 742.0,164.5 743.0,164.9 744.0,165.3 745.0,165.2 746.0,164.9 747.0,165.0 748.0,165.4 749.0,165.4 750.0,165.2 751.0,165.0 752.0,164.9 753.0,164.7 754.0,164.4 754.0,164.6 755.0,165.0 756.0,165.4 757.0,165.6 758.0,165.7 759.0,165.3 760.0,165.2 761.0,164.9 762.0,165.2 763.0,165.0 764.0,164.9 765.0,164.9 766.0,165.3 767.0,165.5 768.0,165.2 769.0,165.2 770.0,165.0 771.0,164.9 772.0,164.6 773.0,164.8 774.0,164.9 775.0,165.0 776.0,165.2 777.0,165.1 778.0,165.4 778.0,165.4 779.0,165.5 780.0,165.2 781.0,165.0 782.0,164.7 783.0,164.7 784.0,164.9 785.0,164.9 786.0,164.8 787.0,164.7 788.0,164.7 789.0,164.5 790.0,164.5 791.0,164.7 792.0,165.0 793.0,164.6 794.0,164.5 795.0,164.5 795.1,164.9 796.0,164.9 797.0,165.0 798.0,164.7 799.0,164.5 800.0,164.3 801.0,164.2 802.0,164.3 803.0,164.2 804.0,163.9 805.0,163.9 805.1,164.0 806.0,163.8 807.0,163.6 808.0,163.6 808.3,163.6 809.0,163.1 810.0,162.4 811.0,161.5 811.4,161.0 812.0,160.0 813.0,158.3 814.0,156.5 815.0,155.0 816.0,153.7 816.2,153.4 817.0,152.1 818.0,150.4 819.0,148.8 820.0,147.0 821.0,145.0 821.5,144.0 822.0,143.4 823.0,141.6 824.0,139.6 825.0,137.5 825.9,135.2 826.0,134.9 827.0,132.2 828.0,129.4 829.0,126.3 830.0,121.9 831.0,117.9 831.2,117.4 832.0,112.9 833.0,107.2 833.0,106.8 834.0,100.1 835.0,93.7 835.6,90.0 836.0,87.4 837.0,80.4 837.8,74.6 838.0,73.0 838.4,70.1 838.7,69.4 839.0,69.3 839.4,68.9 840.0,69.5 840.1,69.5 840.9,70.4 841.0,70.5 842.0,70.9 843.0,71.2 844.0,71.2 845.0,70.7 846.0,70.8 847.0,70.9 847.9,71.4 848.0,71.5 849.0,71.7 850.0,71.5 851.0,71.4 852.0,71.4 853.0,71.5 854.0,71.5 855.0,71.3 856.0,71.3 857.0,71.1 858.0,71.4 859.0,71.2 860.0,71.2 861.0,71.5 862.0,71.7 863.0,71.6 864.0,71.3 865.0,71.5 866.0,71.7 867.0,71.6 868.0,71.7 869.0,71.6 870.0,71.7 871.0,71.6 872.0,71.8 873.0,71.8 874.0,71.8 875.0,71.8 875.1,71.6 876.0,71.5 877.0,71.5 878.0,71.7 879.0,71.7 880.0,71.6 881.0,71.3 882.0,71.2 883.0,71.5 884.0,71.7 885.0,71.6 886.0,71.8 887.0,71.9 888.0,71.8 889.0,71.4 890.0,71.6 891.0,71.5 892.0,71.5 893.0,71.2 894.0,71.2 895.0,71.3 896.0,71.8 897.0,72.0 898.0,71.9 899.0,71.7 899.1,71.5 900.0,71.6 901.0,71.5 902.0,71.5 903.0,71.6 904.0,72.1 905.0,72.2 906.0,72.3 907.0,72.3 908.0,72.1 909.0,71.8 910.0,71.6 911.0,71.6 912.0,71.9 912.3,72.3 913.0,72.2 913.0,72.1 913.4,71.3 913.8,72.5 914.0,73.7 914.3,75.8 915.0,85.1 915.0,86.1 915.7,108.7 916.0,116.7 916.6,130.0 917.0,135.4 917.6,142.6 918.0,145.1 918.9,150.5 919.0,150.6 920.0,157.7 920.2,160.0 920.7,163.0 921.0,164.1 921.1,164.2 921.9,164.9 922.0,165.0 922.9,165.2 923.0,165.4 924.0,165.4 925.0,165.2 926.0,165.0 927.0,165.2 928.0,165.3 929.0,165.2 930.0,165.1 931.0,165.4 932.0,165.7 933.0,165.8 934.0,165.3 935.0,165.2 936.0,165.3 937.0,165.4 938.0,165.2 939.0,165.4 940.0,165.5 941.0,165.5 942.0,165.5 943.0,165.4 944.0,165.2 945.0,165.2 946.0,165.4 947.0,165.1 947.1,165.0 948.0,165.4 949.0,165.7 950.0,165.6 951.0,165.2 952.0,165.0 953.0,165.1 954.0,165.0 955.0,164.8 956.0,164.8 957.0,165.0 958.0,165.1 959.0,165.1 960.0,165.3 961.0,165.3 962.0,165.2 963.0,164.9 964.0,164.8 965.0,164.7 966.0,165.2 967.0,165.6 968.0,165.4 969.0,165.1 970.0,165.1 971.0,165.0 971.1,164.8 972.0,164.7 973.0,164.7 974.0,164.5 975.0,164.6 976.0,164.4 977.0,164.6 978.0,165.0 979.0,165.3 980.0,165.0 981.0,164.8 982.0,164.8 983.0,164.7 984.0,164.8 985.0,165.0 986.0,164.9 987.0,164.9 988.0,164.8 988.3,164.7 989.0,164.5 990.0,164.2 991.0,164.0 992.0,164.0 993.0,164.4 994.0,164.7 995.0,164.8 996.0,164.5 997.0,164.2 998.0,163.8 998.3,163.8 999.0,163.6 1000.0,163.7 1001.0,163.5 1001.5,163.5 1002.0,162.9 1003.0,162.0 1004.0,161.4 1004.6,161.2 1005.0,160.5 1006.0,158.5 1007.0,156.4 1008.0,154.8 1009.0,153.6 1009.4,153.3 1010.0,152.4 1011.0,150.6 1012.0,148.6 1013.0,147.0 1014.0,145.7 1014.7,145.0 1015.0,144.0 1016.0,141.8 1017.0,139.7 1018.0,137.6 1019.0,135.2 1019.1,134.8 1020.0,132.2 1021.0,129.6 1022.0,127.0 1022.2,126.8 1023.0,123.4 1024.0,119.0 1024.4,117.3 1025.0,113.4 1026.0,107.3 1026.1,106.6 1027.0,101.0 1028.0,95.0 1028.8,90.1 1029.0,88.7 1030.0,81.7 1031.0,74.8 1031.0,74.4 1031.6,70.5 1031.8,69.7 1032.0,69.2 1032.6,68.7 1033.0,69.6 1033.3,70.2 1034.0,70.5 1034.0,70.3 1035.0,70.6 1036.0,71.0 1037.0,70.9 1038.0,71.1 1039.0,71.1 1040.0,71.3 1041.0,71.5 1041.1,71.7 1042.0,71.6 1043.0,71.4 1044.0,71.3 1045.0,71.2 1046.0,71.0 1047.0,71.1 1048.0,71.3 1049.0,71.5 1050.0,71.4 1051.0,71.4 1052.0,71.4 1053.0,71.4 1054.0,71.3 1055.0,71.1 1056.0,71.4 1057.0,71.8 1058.0,71.6 1059.0,71.2 1060.0,71.0 1061.0,71.0 1062.0,71.2 1063.0,71.4 1064.0,71.6 1065.0,71.3 1066.0,70.8 1067.0,70.6 1068.0,70.8 1068.3,71.2 1069.0,71.3 1070.0,71.3 1071.0,71.4 1072.0,72.0 1073.0,71.9 1074.0,71.6 1075.0,71.5 1076.0,71.7 1077.0,71.8 1078.0,71.8 1079.0,71.8 1080.0,71.7 1081.0,71.6 1082.0,71.2 1083.0,71.5 1084.0,71.5 1085.0,71.6 1086.0,71.4 1087.0,71.4 1088.0,71.1 1089.0,71.1 1090.0,71.1 1091.0,71.4 1092.0,71.9 1092.3,72.4 1093.0,71.8 1094.0,71.4 1095.0,71.4 1096.0,71.7 1097.0,71.8 1098.0,71.8 1099.0,71.9 1100.0,71.8 1101.0,71.7 1102.0,71.7 1103.0,72.1 1104.0,72.2 1105.0,72.3 1105.5,72.3 1106.0,71.8 1106.2,71.2 1106.6,70.6 1107.0,72.1 1107.4,75.7 1108.0,83.5 1108.1,85.2 1108.8,109.0 1109.0,112.7 1109.7,129.3 1110.0,132.6 1110.8,141.8 1111.0,143.4 1112.0,150.4 1112.1,150.9 1113.0,157.6 1113.4,160.4 1113.9,163.0 1114.0,163.3 1114.3,164.5 1115.0,165.4 1115.1,165.2 1116.0,165.5 1116.0,165.5 1117.0,165.6 1118.0,165.5 1119.0,165.5 1120.0,165.2 1121.0,165.1 1122.0,165.2 1123.0,165.1 1124.0,165.1 1125.0,165.2 1126.0,165.4 1127.0,165.1 1128.0,165.0 1129.0,165.1 1130.0,165.4 1131.0,165.3 1132.0,165.2 1133.0,165.0 1134.0,165.1 1135.0,165.5 1136.0,165.5 1137.0,165.1 1138.0,164.8 1139.0,165.0 1140.0,164.9 1140.3,164.6 1141.0,164.5 1142.0,164.7 1143.0,164.9 1144.0,165.2 1145.0,165.3 1146.0,165.1 1147.0,165.0 1148.0,165.0 1149.0,165.2 1150.0,164.8 1151.0,164.6 1152.0,164.7 1153.0,165.3 1154.0,165.3 1155.0,165.2 1156.0,164.8 1157.0,164.8 1158.0,165.1 1159.0,165.2 1160.0,165.0 1161.0,164.8 1162.0,165.1 1163.0,165.1 1164.0,165.1 1164.3,165.0 1165.0,165.0 1166.0,164.9 1167.0,165.1 1168.0,165.2 1169.0,165.0 1170.0,164.9 1171.0,165.2 1172.0,165.5 1173.0,165.3 1174.0,164.9 1175.0,164.9 1176.0,165.0 1177.0,165.5 1178.0,165.8 1179.0,165.5 1180.0,165.0 1181.0,164.9 1181.4,165.2 1182.0,165.0 1183.0,164.6 1184.0,164.5 1185.0,164.6 1186.0,164.7 1187.0,164.4 1188.0,163.9 1189.0,164.0 1190.0,164.1 1191.0,164.2 1191.4,163.7 1192.0,163.8 1193.0,163.7 1194.0,163.6 1194.6,163.7 1195.0,163.8 1196.0,162.9 1197.0,161.4 1197.7,160.7 1198.0,160.5 1199.0,159.3 1200.0,157.7 1201.0,155.7 1202.0,153.8 1202.6,153.0 1203.0,152.7 1204.0,151.3 1205.0,149.8 1206.0,148.3 1207.0,146.6 1207.8,144.9 1208.0,144.2 1209.0,141.8 1210.0,139.8 1211.0,137.8 1212.0,135.6 1212.2,135.2 1213.0,133.4 1214.0,130.6 1215.0,127.6 1215.3,126.9 1216.0,124.0 1217.0,119.4 1217.5,116.9 1218.0,114.2 1219.0,108.9 1219.3,107.5 1220.0,102.8 1221.0,96.2 1221.9,90.2 1222.0,89.4 1223.0,82.3 1224.0,75.7 1224.1,75.1 1224.8,70.8 1225.0,70.0 1225.7,69.4 1226.0,69.0 1226.4,69.1 1227.0,70.0 1227.2,70.9 1228.0,70.9 1229.0,70.9 1230.0,70.7 1231.0,70.5 1232.0,70.6 1233.0,70.7 1234.0,71.0 1234.2,71.3 1235.0,71.4 1236.0,71.4 1237.0,71.3 1238.0,71.3 1239.0,71.2 1240.0,71.4 1241.0,71.4 1242.0,71.4 1243.0,71.7 1244.0,71.6 1245.0,71.3 1246.0,70.8 1247.0,70.9 1248.0,71.4 1249.0,71.9 1250.0,71.8 1251.0,71.4 1252.0,71.3 1253.0,71.3 1254.0,71.3 1255.0,71.3 1256.0,71.4 1257.0,71.5 1258.0,71.6 1259.0,71.4 1260.0,71.4 1261.0,71.5 1261.4,71.7 1262.0,71.8 1263.0,71.8 1264.0,71.8 1265.0,71.6 1266.0,71.7 1267.0,71.6 1268.0,71.4 1269.0,71.3 1270.0,71.3 1271.0,71.4 1272.0,71.6 1273.0,71.7 1274.0,71.7" fill="none" stroke="#bdbdbd" stroke-width="1" shape-rendering="crispEdges"/>
<polyline points="4.0,86.6 5.0,86.2 6.0,85.7 7.0,85.2 8.0,84.6 9.0,83.9 10.0,83.1 11.0,82.5 12.0,81.7 13.0,81.2 13.3,81.1 14.0,80.7 15.0,80.2 16.0,79.8 17.0,79.2 18.0,78.6 19.0,77.9 20.0,77.1 21.0,76.5 22.0,75.9 22.5,75.7 23.0,75.4 24.0,74.9 25.0,74.4 26.0,73.8 27.0,73.3 28.0,72.7 29.0,72.2 30.0,71.5 31.0,71.1 31.3,70.9 32.0,70.7 33.0,70.3 34.0,69.7 35.0,69.1 36.0,68.6 37.0,68.4 38.0,68.1 39.0,67.7 40.0,67.2 40.1,67.0 41.0,66.7 42.0,66.4 43.0,66.1 44.0,65.8 44.5,65.7 45.0,65.7 46.0,65.6 47.0,65.4 48.0,65.0 48.9,64.8 49.0,64.8 50.0,64.6 51.0,64.3 52.0,64.3 52.5,64.5 53.0,64.5 54.0,64.5 55.0,64.5 55.9,64.6 56.0,64.7 57.0,64.9 58.0,65.1 59.0,65.3 60.0,65.4 60.3,65.4 61.0,65.8 62.0,66.5 62.9,67.2 63.0,67.4 64.0,68.3 64.7,69.0 65.0,69.9 65.3,70.9 65.6,72.5 65.8,77.5 66.0,84.3 66.0,86.2 66.9,128.8 67.0,131.4 67.8,159.4 68.0,161.7 68.2,164.0 68.7,166.5 69.0,167.4 69.5,168.4 70.0,168.9 70.5,169.4 71.0,169.6 72.0,169.4 73.0,169.5 73.5,169.5 74.0,169.4 75.0,168.7 76.0,168.2 76.5,168.0 77.0,167.7 78.0,167.3 79.0,166.9 79.7,166.8 80.0,166.7 81.0,166.7 82.0,166.7 83.0,166.8 84.0,166.9 85.0,166.7 86.0,166.5 86.5,166.6 87.0,166.7 88.0,166.7 89.0,166.5 90.0,166.5 91.0,166.6 92.0,166.7 93.0,166.7 94.0,166.6 95.0,166.6 96.0,166.5 97.0,166.4 98.0,166.4 99.0,166.4 100.0,166.4 101.0,166.4 102.0,166.4 102.5,166.4 103.0,166.1 104.0,166.0 105.0,166.0 106.0,166.1 107.0,166.3 108.0,166.5 109.0,166.7 110.0,166.7 111.0,166.3 112.0,166.0 113.0,165.9 114.0,166.0 115.0,166.1 116.0,166.4 117.0,166.3 118.0,166.3 119.0,166.2 120.0,166.3 121.0,166.3 122.0,166.5 123.0,166.5 124.0,166.5 125.0,166.4 126.0,166.5 126.5,166.6 127.0,166.5 128.0,166.4 129.0,166.4 130.0,166.5 131.0,166.6 132.0,166.7 133.0,166.6 134.0,166.6 135.0,166.6 136.0,166.9 137.0,167.0 138.0,167.3 138.4,167.3 139.0,167.7 139.7,168.0 140.0,168.4 141.0,169.5 141.3,164.6 141.6,154.4 142.0,139.6 142.5,121.8 143.0,120.4 143.1,120.3 144.0,119.2 144.1,119.0 145.0,118.3 146.0,117.7 147.0,116.8 147.6,116.4 148.0,116.0 149.0,115.3 150.0,114.8 151.0,114.3 152.0,113.6 153.0,112.8 154.0,112.3 155.0,111.9 156.0,111.3 157.0,110.6 158.0,109.9 159.0,109.5 160.0,109.0 161.0,108.5 161.7,108.2 162.0,107.8 163.0,107.0 164.0,106.3 165.0,105.8 166.0,105.3 167.0,104.9 168.0,104.5 169.0,103.9 170.0,103.2 171.0,102.5 172.0,101.7 173.0,101.0 174.0,100.4 175.0,99.9 176.0,99.3 177.0,98.6 178.0,97.8 179.0,97.0 179.3,97.1 180.0,96.8 181.0,96.3 182.0,95.6 183.0,95.0 184.0,94.3 185.0,93.7 186.0,93.2 187.0,92.7 188.0,92.0 189.0,91.4 190.0,90.7 191.0,90.2 192.0,89.7 193.0,89.3 194.0,88.6 195.0,87.9 196.0,87.3 197.0,87.0 198.0,86.2 199.0,85.5 200.0,84.9 201.0,84.4 202.0,83.8 203.0,83.2 204.0,82.6 205.0,82.1 206.0,81.6 206.5,81.1 207.0,80.9 208.0,80.4 209.0,79.9 210.0,79.1 211.0,78.6 212.0,77.9 213.0,77.3 214.0,76.7 215.0,76.1 215.6,75.7 216.0,75.5 217.0,75.1 218.0,74.3 219.0,73.7 220.0,73.2 221.0,72.8 222.0,72.2 223.0,71.7 224.0,71.1 224.4,70.9 225.0,70.7 226.0,70.2 227.0,69.6 228.0,69.0 229.0,68.7 230.0,68.4 231.0,68.0 232.0,67.4 233.0,67.0 233.2,66.9 234.0,66.6 235.0,66.3 236.0,66.2 237.0,66.0 237.6,65.6 238.0,65.5 239.0,65.1 240.0,64.9 241.0,64.7 242.0,64.7 242.0,64.8 243.0,64.8 244.0,64.7 245.0,64.6 245.6,64.7 246.0,64.7 247.0,64.6 248.0,64.5 249.0,64.4 249.1,64.3 250.0,64.5 251.0,64.9 252.0,65.1 253.0,65.3 253.5,65.4 254.0,65.8 255.0,66.4 256.0,67.1 256.0,67.0 257.0,67.9 257.9,68.7 258.0,69.2 258.4,70.4 258.8,72.1 259.0,77.2 259.2,86.0 260.0,124.9 260.1,128.7 261.0,159.4 261.0,160.0 261.4,164.1 261.8,166.3 262.0,166.8 262.6,168.5 263.0,168.9 263.6,169.3 264.0,169.2 265.0,169.1 266.0,169.1 266.7,169.1 267.0,169.3 268.0,169.1 269.0,168.7 269.6,168.1 270.0,167.9 271.0,167.6 272.0,167.3 272.8,166.9 273.0,166.8 274.0,166.8 275.0,166.5 276.0,166.6 277.0,166.6 278.0,166.7 279.0,166.4 279.6,166.3 280.0,166.3 281.0,166.5 282.0,166.7 283.0,166.6 284.0,166.5 285.0,166.5 286.0,166.5 287.0,166.4 288.0,166.4 289.0,166.4 290.0,166.4 291.0,166.4 292.0,166.3 293.0,166.1 294.0,165.9 295.0,166.0 295.6,166.2 296.0,166.3 297.0,166.2 298.0,166.2 299.0,166.3 300.0,166.2 301.0,166.2 302.0,166.3 303.0,166.6 304.0,166.7 305.0,166.5 306.0,166.3 307.0,166.2 308.0,166.3 309.0,166.4 310.0,166.6 311.0,166.5 312.0,166.4 313.0,166.4 314.0,166.4 315.0,166.4 316.0,166.4 317.0,166.4 318.0,166.3 319.0,166.2 319.6,166.2 320.0,166.2 321.0,166.3 322.0,166.5 323.0,166.6 324.0,166.6 325.0,166.7 326.0,166.9 327.0,167.0 328.0,167.1 329.0,167.0 330.0,167.0 331.0,167.0 331.5,167.2 332.0,167.5 332.8,168.1 333.0,168.2 334.0,169.2 334.2,169.3 334.4,164.5 334.8,154.3 335.0,145.4 335.6,121.8 336.0,120.8 336.2,120.1 337.0,119.2 337.2,118.9 338.0,118.5 339.0,117.8 340.0,117.1 340.8,116.3 341.0,116.2 342.0,115.5 343.0,114.8 344.0,114.1 345.0,113.7 346.0,113.2 347.0,112.5 348.0,111.9 349.0,111.3 350.0,110.8 351.0,110.2 352.0,109.8 353.0,109.1 354.0,108.4 354.8,107.8 355.0,107.8 356.0,107.2 357.0,106.5 358.0,106.0 359.0,105.3 360.0,104.6 361.0,104.1 362.0,103.5 363.0,103.1 364.0,102.5 365.0,101.9 366.0,101.1 367.0,100.5 368.0,99.9 369.0,99.2 370.0,98.5 371.0,97.9 372.0,97.3 372.4,96.8 373.0,96.4 374.0,95.9 375.0,95.6 376.0,95.0 377.0,94.4 378.0,93.7 379.0,93.2 380.0,92.8 381.0,92.4 382.0,91.9 383.0,91.1 384.0,90.3 385.0,89.6 386.0,89.1 387.0,88.6 388.0,88.3 389.0,87.7 390.0,87.0 391.0,86.3 392.0,85.8 393.0,85.1 394.0,84.4 395.0,83.7 396.0,83.1 397.0,82.5 398.0,81.9 399.0,81.5 399.6,81.1 400.0,80.9 401.0,80.4 402.0,79.9 403.0,79.3 404.0,78.6 405.0,78.2 406.0,77.7 407.0,77.1 408.0,76.3 408.8,75.8 409.0,75.7 410.0,75.1 411.0,74.6 412.0,74.1 413.0,73.6 414.0,73.0 415.0,72.3 416.0,71.7 417.0,71.2 417.6,71.0 418.0,70.8 419.0,70.3 420.0,69.8 421.0,69.4 422.0,69.1 423.0,68.7 424.0,68.2 425.0,67.8 426.0,67.2 426.4,67.0 427.0,67.0 428.0,66.7 429.0,66.3 430.0,65.8 430.8,65.5 431.0,65.4 432.0,65.3 433.0,65.3 434.0,65.2 435.0,65.0 435.2,64.9 436.0,64.8 437.0,64.7 438.0,64.6 438.8,64.5 439.0,64.4 440.0,64.4 441.0,64.3 442.0,64.5 442.2,64.5 443.0,64.7 444.0,64.8 445.0,65.0 446.0,65.3 446.6,65.6 447.0,65.7 448.0,66.3 449.0,67.0 449.2,67.2 450.0,67.9 451.0,68.7 451.0,68.6 451.6,70.2 451.9,72.1 452.0,73.9 452.2,77.5 452.4,86.1 453.0,117.1 453.2,128.7 454.0,155.3 454.1,159.4 454.5,164.0 455.0,166.4 455.8,168.5 456.0,168.6 456.8,169.3 457.0,169.4 458.0,169.5 459.0,169.4 459.8,169.0 460.0,169.0 461.0,168.8 462.0,168.6 462.8,167.9 463.0,167.7 464.0,167.4 465.0,167.3 466.0,167.2 467.0,167.0 468.0,166.8 469.0,166.7 470.0,166.8 471.0,166.6 472.0,166.4 472.8,166.2 473.0,166.3 474.0,166.5 475.0,166.7 476.0,166.8 477.0,166.8 478.0,166.6 479.0,166.6 480.0,166.5 481.0,166.6 482.0,166.5 483.0,166.5 484.0,166.4 485.0,166.5 486.0,166.5 487.0,166.6 488.0,166.6 488.8,166.5 489.0,166.5 490.0,166.5 491.0,166.5 492.0,166.4 493.0,166.4 494.0,166.5 495.0,166.5 496.0,166.4 497.0,166.3 498.0,166.2 499.0,166.2 500.0,166.4 501.0,166.5 502.0,166.3 503.0,166.2 504.0,166.3 505.0,166.5 506.0,166.4 507.0,166.4 508.0,166.5 509.0,166.4 510.0,166.3 511.0,166.4 512.0,166.4 512.8,166.4 513.0,166.2 514.0,166.3 515.0,166.5 516.0,166.8 517.0,166.7 518.0,166.8 519.0,166.9 520.0,167.1 521.0,166.9 522.0,166.8 523.0,166.8 524.0,166.9 524.7,167.1 525.0,167.3 526.0,167.9 527.0,169.0 527.3,169.5 527.6,164.6 527.9,154.4 528.0,151.5 528.8,122.1 529.0,121.5 529.4,120.2 530.0,119.4 530.4,119.0 531.0,118.5 532.0,117.8 533.0,117.0 533.9,116.3 534.0,116.1 535.0,115.5 536.0,115.0 537.0,114.6 538.0,113.9 539.0,113.3 540.0,112.8 541.0,112.2 542.0,111.5 543.0,110.7 544.0,110.3 545.0,109.7 546.0,109.3 547.0,108.6 548.0,107.9 549.0,107.1 550.0,106.5 551.0,105.9 552.0,105.3 553.0,104.7 554.0,104.2 555.0,103.7 556.0,103.0 557.0,102.2 558.0,101.5 559.0,100.9 560.0,100.5 561.0,99.9 562.0,99.3 563.0,98.5 564.0,97.9 565.0,97.4 565.6,97.1 566.0,97.1 567.0,96.5 568.0,95.8 569.0,95.2 570.0,94.9 571.0,94.4 572.0,93.5 573.0,92.7 574.0,92.1 575.0,91.7 576.0,91.1 577.0,90.6 578.0,90.0 579.0,89.3 580.0,88.6 581.0,88.1 582.0,87.6 583.0,87.1 584.0,86.5 585.0,85.9 586.0,85.3 587.0,84.6 588.0,83.9 589.0,83.3 590.0,82.8 591.0,82.1 592.0,81.5 592.8,81.2 593.0,81.1 594.0,80.7 595.0,79.9 596.0,79.4 597.0,78.8 598.0,78.4 599.0,77.8 600.0,77.0 601.0,76.3 602.0,75.7 602.0,75.6 603.0,75.1 604.0,74.6 605.0,74.1 606.0,73.4 607.0,73.0 608.0,72.3 609.0,71.8 610.0,71.2 610.8,70.9 611.0,70.7 612.0,70.5 613.0,70.0 614.0,69.5 615.0,68.8 616.0,68.4 617.0,68.1 618.0,67.5 619.0,67.0 619.6,66.8 620.0,66.7 621.0,66.4 622.0,66.1 623.0,65.8 624.0,65.6 624.0,65.5 625.0,65.4 626.0,65.1 627.0,64.8 628.0,64.5 628.4,64.6 629.0,64.7 630.0,64.6 631.0,64.5 632.0,64.6 632.0,64.7 633.0,64.6 634.0,64.6 635.0,64.6 635.4,64.7 636.0,64.9 637.0,64.9 638.0,64.9 639.0,65.0 639.8,65.3 640.0,65.5 641.0,66.2 642.0,67.0 642.4,67.3 643.0,67.9 644.0,68.7 644.2,68.9 644.8,70.6 645.0,72.3 645.1,72.7 645.3,77.7 645.5,86.0 646.0,109.3 646.4,128.7 647.0,149.7 647.3,159.4 647.7,164.0 648.0,165.7 648.2,166.6 649.0,168.6 649.0,168.5 650.0,169.4 650.0,169.3 651.0,169.3 652.0,169.3 653.0,169.3 654.0,169.0 655.0,168.7 656.0,168.2 656.0,168.2 657.0,167.7 658.0,167.4 659.0,167.1 659.2,167.1 660.0,167.0 661.0,166.9 662.0,166.9 663.0,166.8 664.0,166.6 665.0,166.3 666.0,166.3 666.0,166.5 667.0,166.7 668.0,166.7 669.0,166.6 670.0,166.5 671.0,166.4 672.0,166.5 673.0,166.6 674.0,166.8 675.0,166.6 676.0,166.6 677.0,166.6 678.0,166.5 679.0,166.3 680.0,166.5 681.0,166.5 682.0,166.3 682.0,166.3 683.0,166.3 684.0,166.4 685.0,166.3 686.0,166.2 687.0,166.3 688.0,166.5 689.0,166.5 690.0,166.5 691.0,166.4 692.0,166.3 693.0,166.3 694.0,166.5 695.0,166.6 696.0,166.3 697.0,166.2 698.0,166.2 699.0,166.1 700.0,166.1 701.0,166.3 702.0,166.5 703.0,166.6 704.0,166.4 705.0,166.3 706.0,166.3 706.0,166.5 707.0,166.7 708.0,166.8 709.0,166.6 710.0,166.6 711.0,166.7 712.0,166.5 713.0,166.5 714.0,166.7 715.0,166.9 716.0,166.8 717.0,166.8 717.8,166.8 718.0,166.9 719.0,167.8 719.2,168.1 720.0,169.0 720.5,169.5 720.8,164.7 721.0,156.9 721.1,154.2 722.0,121.8 722.0,121.6 722.6,120.2 723.0,119.8 723.6,119.4 724.0,119.0 725.0,118.3 726.0,117.4 727.0,116.6 727.1,116.4 728.0,115.8 729.0,115.0 730.0,114.4 731.0,113.7 732.0,113.1 733.0,112.4 734.0,111.9 735.0,111.5 736.0,111.1 737.0,110.5 738.0,109.9 739.0,109.3 740.0,108.8 741.0,108.1 741.2,107.9 742.0,107.3 743.0,106.5 744.0,105.9 745.0,105.4 746.0,105.1 747.0,104.5 748.0,103.7 749.0,103.1 750.0,102.6 751.0,102.2 752.0,101.6 753.0,101.0 754.0,100.3 755.0,99.5 756.0,98.7 757.0,98.0 758.0,97.5 758.8,97.0 759.0,96.8 760.0,96.3 761.0,95.7 762.0,95.2 763.0,94.4 764.0,93.9 765.0,93.5 766.0,93.2 767.0,92.5 768.0,91.9 769.0,91.2 770.0,90.7 771.0,90.1 772.0,89.5 773.0,88.8 774.0,88.1 775.0,87.4 776.0,86.8 777.0,86.3 778.0,85.8 779.0,85.3 780.0,84.8 781.0,84.2 782.0,83.6 783.0,82.9 784.0,82.3 785.0,81.7 786.0,81.2 786.0,81.1 787.0,80.5 788.0,79.9 789.0,79.3 790.0,78.9 791.0,78.3 792.0,77.7 793.0,76.9 794.0,76.3 795.0,75.7 795.1,75.6 796.0,75.2 797.0,74.6 798.0,74.1 799.0,73.6 800.0,73.1 801.0,72.5 802.0,71.9 803.0,71.5 803.9,70.9 804.0,70.7 805.0,70.3 806.0,70.0 807.0,69.8 808.0,69.4 809.0,68.8 810.0,68.2 811.0,67.8 812.0,67.5 812.7,66.9 813.0,66.7 814.0,66.4 815.0,66.4 816.0,66.2 817.0,65.9 817.1,65.8 818.0,65.4 819.0,65.1 820.0,65.0 821.0,64.9 821.5,64.8 822.0,64.8 823.0,64.6 824.0,64.6 825.0,64.7 825.1,64.7 826.0,64.8 827.0,64.8 828.0,64.6 828.6,64.3 829.0,64.3 830.0,64.7 831.0,64.9 832.0,65.2 833.0,65.4 833.0,65.6 834.0,66.2 835.0,67.0 835.5,67.1 836.0,67.6 837.0,68.4 837.4,68.8 837.9,70.3 838.0,71.0 838.2,72.4 838.5,77.5 838.7,86.0 839.0,101.7 839.6,128.9 840.0,144.3 840.4,159.7 840.8,164.3 841.0,164.9 841.3,166.4 842.0,168.2 842.1,168.5 843.0,169.2 843.1,169.2 844.0,169.3 845.0,169.4 846.0,169.3 846.2,169.3 847.0,168.9 848.0,168.6 849.0,168.1 849.1,168.0 850.0,167.7 851.0,167.5 852.0,167.3 852.3,167.1 853.0,166.9 854.0,166.8 855.0,166.8 856.0,166.8 857.0,166.7 858.0,166.6 859.0,166.5 859.1,166.6 860.0,166.7 861.0,166.7 862.0,166.6 863.0,166.5 864.0,166.6 865.0,166.7 866.0,166.7 867.0,166.3 868.0,166.0 869.0,166.2 870.0,166.4 871.0,166.6 872.0,166.4 873.0,166.2 874.0,166.2 875.0,166.0 875.1,166.0 876.0,166.0 877.0,166.2 878.0,166.3 879.0,166.3 880.0,166.3 881.0,166.3 882.0,166.3 883.0,166.3 884.0,166.3 885.0,166.3 886.0,166.2 887.0,166.2 888.0,166.1 889.0,166.2 890.0,166.2 891.0,166.4 892.0,166.5 893.0,166.7 894.0,166.5 895.0,166.4 896.0,166.4 897.0,166.5 898.0,166.4 899.0,166.4 899.1,166.3 900.0,166.2 901.0,166.3 902.0,166.4 903.0,166.4 904.0,166.3 905.0,166.4 906.0,166.6 907.0,166.6 908.0,166.7 909.0,167.0 910.0,167.3 911.0,167.3 912.0,167.8 912.3,167.9 913.0,168.7 913.6,169.4 913.9,164.6 914.0,161.8 914.2,154.1 915.0,126.0 915.1,121.6 915.7,119.9 916.0,119.5 916.7,119.0 917.0,119.0 918.0,118.1 919.0,117.1 920.0,116.2 920.2,116.4 921.0,116.1 922.0,115.6 923.0,114.8 924.0,113.9 925.0,113.4 926.0,112.9 927.0,112.4 928.0,111.7 929.0,110.9 930.0,110.2 931.0,109.7 932.0,109.3 933.0,109.0 934.0,108.4 934.3,108.0 935.0,107.3 936.0,106.6 937.0,106.1 938.0,105.8 939.0,105.3 940.0,104.5 941.0,104.0 942.0,103.4 943.0,102.8 944.0,102.0 945.0,101.3 946.0,100.5 947.0,100.0 948.0,99.5 949.0,98.9 950.0,98.5 951.0,97.7 951.9,97.1 952.0,96.9 953.0,96.5 954.0,95.9 955.0,95.3 956.0,94.6 957.0,94.0 958.0,93.6 959.0,93.3 960.0,92.8 961.0,92.1 962.0,91.3 963.0,90.7 964.0,90.1 965.0,89.5 966.0,88.8 967.0,88.2 968.0,87.4 969.0,86.8 970.0,86.3 971.0,85.8 972.0,85.4 973.0,84.9 974.0,84.2 975.0,83.6 976.0,83.1 977.0,82.7 978.0,82.1 979.0,81.5 979.1,81.2 980.0,80.6 981.0,80.0 982.0,79.5 983.0,78.7 984.0,78.0 985.0,77.6 986.0,77.2 987.0,76.7 988.0,76.0 988.3,75.6 989.0,75.3 990.0,74.7 991.0,74.4 992.0,73.7 993.0,73.0 994.0,72.5 995.0,72.0 996.0,71.5 997.0,70.9 997.1,71.0 998.0,70.8 999.0,70.4 1000.0,69.9 1001.0,69.3 1002.0,68.7 1003.0,68.3 1004.0,67.7 1005.0,67.4 1005.9,66.9 1006.0,66.8 1007.0,66.6 1008.0,66.4 1009.0,66.2 1010.0,65.6 1010.3,65.4 1011.0,65.3 1012.0,65.2 1013.0,65.1 1014.0,64.9 1014.7,64.8 1015.0,64.9 1016.0,65.0 1017.0,65.1 1018.0,64.8 1018.3,64.6 1019.0,64.5 1020.0,64.5 1021.0,64.4 1021.7,64.3 1022.0,64.4 1023.0,64.6 1024.0,64.8 1025.0,65.1 1026.0,65.5 1026.1,65.7 1027.0,66.2 1028.0,67.0 1028.7,67.5 1029.0,67.7 1030.0,68.5 1030.5,69.0 1031.0,70.3 1031.1,70.4 1031.4,72.3 1031.6,77.4 1031.8,86.0 1032.0,93.8 1032.7,128.6 1033.0,138.2 1033.6,159.1 1034.0,164.0 1034.5,166.4 1035.0,167.8 1035.3,168.6 1036.0,169.2 1036.3,169.5 1037.0,169.4 1038.0,169.3 1039.0,169.3 1039.3,169.5 1040.0,169.2 1041.0,168.7 1042.0,168.3 1042.3,168.2 1043.0,167.8 1044.0,167.6 1045.0,167.4 1045.5,167.2 1046.0,166.9 1047.0,166.7 1048.0,166.7 1049.0,166.9 1050.0,166.8 1051.0,166.8 1052.0,166.7 1052.3,166.6 1053.0,166.5 1054.0,166.5 1055.0,166.5 1056.0,166.5 1057.0,166.7 1058.0,166.7 1059.0,166.6 1060.0,166.5 1061.0,166.5 1062.0,166.4 1063.0,166.3 1064.0,166.2 1065.0,166.3 1066.0,166.4 1067.0,166.5 1068.0,166.4 1068.3,166.4 1069.0,166.5 1070.0,166.4 1071.0,166.4 1072.0,166.4 1073.0,166.4 1074.0,166.3 1075.0,166.4 1076.0,166.4 1077.0,166.4 1078.0,166.4 1079.0,166.3 1080.0,166.2 1081.0,166.2 1082.0,166.3 1083.0,166.3 1084.0,166.4 1085.0,166.5 1086.0,166.4 1087.0,166.4 1088.0,166.5 1089.0,166.4 1090.0,166.3 1091.0,166.3 1092.0,166.2 1092.3,166.1 1093.0,166.3 1094.0,166.6 1095.0,166.7 1096.0,166.6 1097.0,166.5 1098.0,166.7 1099.0,166.8 1100.0,166.9 1101.0,166.8 1102.0,167.0 1103.0,167.0 1104.0,167.0 1104.2,166.8 1105.0,167.5 1105.5,168.0 1106.0,168.8 1106.8,169.5 1107.0,165.8 1107.1,164.3 1107.4,154.2 1108.0,132.1 1108.3,121.7 1108.9,120.0 1109.0,120.0 1109.9,119.1 1110.0,119.2 1111.0,118.3 1112.0,117.5 1113.0,116.6 1113.4,116.3 1114.0,116.0 1115.0,115.4 1116.0,114.7 1117.0,114.2 1118.0,113.6 1119.0,113.0 1120.0,112.4 1121.0,111.9 1122.0,111.2 1123.0,110.5 1124.0,109.9 1125.0,109.5 1126.0,108.8 1127.0,108.2 1127.5,108.1 1128.0,107.9 1129.0,107.2 1130.0,106.5 1131.0,105.8 1132.0,105.2 1133.0,104.5 1134.0,103.8 1135.0,103.0 1136.0,102.5 1137.0,102.1 1138.0,101.5 1139.0,100.8 1140.0,100.1 1141.0,99.6 1142.0,99.1 1143.0,98.5 1144.0,97.9 1145.0,97.1 1145.1,97.0 1146.0,96.4 1147.0,95.9 1148.0,95.3 1149.0,94.7 1150.0,94.2 1151.0,93.8 1152.0,93.4 1153.0,92.6 1154.0,92.0 1155.0,91.3 1156.0,90.7 1157.0,90.0 1158.0,89.5 1159.0,89.0 1160.0,88.5 1161.0,87.7 1162.0,87.0 1163.0,86.5 1164.0,86.1 1165.0,85.4 1166.0,84.7 1167.0,84.3 1168.0,83.9 1169.0,83.3 1170.0,82.7 1171.0,82.0 1172.0,81.2 1172.3,80.9 1173.0,80.7 1174.0,80.3 1175.0,79.9 1176.0,79.3 1177.0,78.5 1178.0,77.6 1179.0,77.0 1180.0,76.6 1181.0,76.1 1181.4,75.9 1182.0,75.6 1183.0,75.0 1184.0,74.4 1185.0,73.9 1186.0,73.4 1187.0,72.8 1188.0,71.9 1189.0,71.4 1190.0,70.9 1190.2,71.0 1191.0,70.6 1192.0,70.1 1193.0,69.6 1194.0,69.1 1195.0,68.8 1196.0,68.5 1197.0,67.8 1198.0,67.3 1199.0,66.9 1199.0,67.0 1200.0,66.8 1201.0,66.4 1202.0,66.2 1203.0,65.8 1203.4,65.6 1204.0,65.4 1205.0,65.4 1206.0,65.0 1207.0,64.7 1207.8,64.6 1208.0,64.8 1209.0,64.8 1210.0,64.9 1211.0,64.7 1211.4,64.6 1212.0,64.8 1213.0,64.9 1214.0,64.9 1214.9,64.9 1215.0,64.9 1216.0,65.0 1217.0,65.2 1218.0,65.4 1219.0,65.5 1219.3,65.6 1220.0,66.1 1221.0,66.8 1221.8,67.1 1222.0,67.3 1223.0,68.3 1223.7,68.8 1224.0,69.7 1224.2,70.4 1224.6,72.4 1224.8,77.6 1225.0,86.2 1225.9,128.9 1226.0,133.1 1226.8,159.6 1227.0,162.2 1227.2,163.9 1227.6,166.3 1228.0,167.3 1228.4,168.3 1229.0,168.8 1229.4,169.3 1230.0,169.4 1231.0,169.2 1232.0,169.2 1232.5,169.2 1233.0,169.0 1234.0,168.7 1235.0,168.3 1235.4,168.1 1236.0,167.8 1237.0,167.6 1238.0,167.3 1238.6,167.2 1239.0,167.0 1240.0,166.9 1241.0,166.7 1242.0,166.5 1243.0,166.4 1244.0,166.5 1245.0,166.5 1245.4,166.4 1246.0,166.5 1247.0,166.5 1248.0,166.5 1249.0,166.6 1250.0,166.7 1251.0,166.6 1252.0,166.3 1253.0,166.4 1254.0,166.3 1255.0,166.3 1256.0,166.3 1257.0,166.4 1258.0,166.3 1259.0,166.4 1260.0,166.5 1261.0,166.5 1261.4,166.2 1262.0,166.2 1263.0,166.3 1264.0,166.3 1265.0,166.3 1266.0,166.3 1267.0,166.2 1268.0,166.1 1269.0,166.2 1270.0,166.4 1271.0,166.5 1272.0,166.4 1273.0,166.4 1274.0,166.4" fill="none" stroke="#7896da" stroke-width="1" shape-rendering="crispEdges"/>
<polyline points="4.0,160.7 5.0,160.5 5.3,160.1 6.0,160.1 7.0,160.6 8.0,161.0 9.0,161.1 10.0,161.1 11.0,161.0 12.0,161.2 13.0,161.2 14.0,161.2 15.0,161.3 16.0,161.5 17.0,161.4 18.0,161.1 19.0,161.2 20.0,161.0 21.0,161.0 22.0,161.2 22.5,161.5 23.0,161.5 24.0,161.3 25.0,161.3 26.0,161.3 27.0,161.3 28.0,161.1 29.0,161.0 30.0,160.9 30.5,161.1 31.0,161.0 32.0,160.7 33.0,160.4 34.0,160.1 35.0,160.1 36.0,160.0 36.1,160.1 37.0,159.1 38.0,158.3 39.0,157.3 39.2,157.3 40.0,155.5 41.0,153.1 42.0,150.6 43.0,148.2 44.0,146.1 44.2,145.7 45.0,144.4 46.0,142.5 47.0,140.3 48.0,138.2 49.0,136.3 49.7,135.2 50.0,134.4 51.0,132.0 52.0,129.7 53.0,127.3 54.0,124.7 54.2,124.3 55.0,121.5 56.0,117.7 57.0,114.2 57.4,113.1 58.0,108.9 59.0,102.0 60.0,95.2 60.1,94.6 61.0,88.0 62.0,80.9 62.8,75.5 63.0,74.2 64.0,67.4 64.7,62.4 65.0,60.8 65.2,59.4 65.6,62.1 66.0,70.7 66.0,72.5 66.9,112.2 67.0,117.4 67.8,151.0 68.0,153.5 68.7,161.2 69.0,162.2 69.5,163.9 70.0,164.4 70.5,164.9 71.0,165.2 72.0,165.4 73.0,165.3 73.2,165.0 74.0,164.4 75.0,163.8 75.7,163.6 76.0,163.6 77.0,163.3 78.0,162.9 78.6,162.7 79.0,162.8 80.0,162.8 81.0,162.7 82.0,162.5 83.0,162.5 84.0,162.6 85.0,162.6 86.0,162.6 86.5,162.4 87.0,162.2 88.0,161.9 89.0,162.0 90.0,162.0 91.0,161.9 92.0,161.9 93.0,162.0 94.0,162.0 95.0,162.0 96.0,162.0 97.0,162.2 98.0,162.0 99.0,162.1 100.0,162.1 101.0,162.2 102.0,162.2 102.2,162.1 103.0,162.0 104.0,161.8 105.0,162.0 106.0,162.0 107.0,161.9 108.0,161.9 109.0,162.1 110.0,162.1 111.0,161.9 112.0,161.7 113.0,161.9 114.0,162.0 115.0,162.0 116.0,161.7 117.0,161.7 118.0,161.8 119.0,162.1 120.0,162.1 121.0,162.2 122.0,162.1 123.0,162.0 124.0,161.8 125.0,161.8 126.0,161.9 126.5,162.2 127.0,162.1 128.0,162.0 129.0,162.0 130.0,162.1 131.0,162.1 132.0,162.3 133.0,162.5 134.0,162.4 135.0,162.3 136.0,162.2 137.0,162.3 138.0,162.4 138.5,162.7 139.0,163.1 140.0,163.3 140.1,163.2 141.0,164.2 141.3,164.5 141.5,158.3 141.9,138.8 142.0,136.8 142.5,124.2 143.0,130.6 143.0,130.7 144.0,140.5 144.2,141.8 145.0,145.2 145.6,147.6 146.0,149.5 146.8,153.0 147.0,153.5 147.5,155.6 148.0,157.1 148.3,158.0 149.0,158.6 149.0,158.4 150.0,158.2 151.0,158.1 152.0,158.1 153.0,158.3 154.0,158.6 154.5,158.8 155.0,158.7 156.0,158.9 157.0,159.2 158.0,159.2 159.0,158.9 160.0,158.8 161.0,159.0 162.0,159.3 163.0,159.4 164.0,159.5 165.0,159.5 166.0,159.4 167.0,158.9 168.0,159.0 169.0,159.2 170.0,159.5 171.0,159.5 172.0,159.7 173.0,159.8 174.0,159.9 174.5,160.0 175.0,160.1 176.0,160.0 177.0,159.8 178.0,159.9 179.0,160.3 180.0,160.3 181.0,160.0 182.0,159.8 183.0,160.0 184.0,160.2 185.0,160.2 186.0,160.3 187.0,160.5 188.0,160.4 189.0,160.3 190.0,160.2 191.0,160.3 192.0,160.5 193.0,160.7 194.0,160.8 195.0,160.8 196.0,160.9 197.0,161.0 198.0,161.0 198.5,160.9 199.0,160.8 200.0,160.7 201.0,160.7 202.0,160.7 203.0,160.8 204.0,161.0 205.0,161.0 206.0,161.1 207.0,161.2 208.0,161.2 209.0,161.2 210.0,161.5 211.0,161.3 212.0,161.2 213.0,161.1 214.0,161.4 215.0,161.5 215.6,161.6 216.0,161.5 217.0,161.6 218.0,161.7 219.0,161.6 220.0,161.3 221.0,161.2 222.0,161.0 223.0,161.1 223.6,161.1 224.0,161.0 225.0,160.6 226.0,160.3 227.0,160.3 228.0,160.2 229.0,159.9 229.2,159.8 230.0,159.1 231.0,158.2 232.0,157.3 232.4,157.2 233.0,155.9 234.0,153.5 235.0,151.2 236.0,149.1 237.0,146.8 237.4,145.8 238.0,144.5 239.0,142.4 240.0,140.3 241.0,138.6 242.0,136.8 242.8,135.3 243.0,134.7 244.0,132.3 245.0,130.0 246.0,127.8 247.0,125.8 247.4,124.8 248.0,122.5 249.0,118.8 250.0,115.1 250.5,113.0 251.0,110.0 252.0,103.6 253.0,96.7 253.2,94.9 254.0,89.2 255.0,82.0 256.0,75.2 256.0,75.1 257.0,68.4 257.9,62.4 258.0,62.1 258.4,59.8 258.8,62.2 259.0,67.4 259.1,70.3 260.0,110.2 260.0,112.2 261.0,150.8 261.0,151.3 261.8,161.5 262.0,162.2 262.6,164.5 263.0,164.6 263.6,165.0 264.0,164.9 265.0,165.2 266.0,165.2 266.4,165.2 267.0,164.8 268.0,164.1 268.8,163.6 269.0,163.7 270.0,163.4 271.0,163.0 271.8,162.7 272.0,162.7 273.0,162.6 274.0,162.5 275.0,162.5 276.0,162.5 277.0,162.3 278.0,162.2 279.0,161.9 279.6,162.1 280.0,162.5 281.0,162.6 282.0,162.4 283.0,162.4 284.0,162.5 285.0,162.3 286.0,162.0 287.0,161.7 288.0,161.7 289.0,162.0 290.0,162.3 291.0,162.3 292.0,162.1 293.0,162.0 294.0,162.3 295.0,162.2 295.4,162.0 296.0,161.9 297.0,161.9 298.0,161.8 299.0,161.8 300.0,161.8 301.0,161.7 302.0,161.7 303.0,161.9 304.0,162.1 305.0,162.2 306.0,162.2 307.0,162.1 308.0,162.3 309.0,162.3 310.0,162.2 311.0,162.1 312.0,162.2 313.0,162.0 314.0,161.8 315.0,161.8 316.0,161.9 317.0,161.9 318.0,162.1 319.0,162.2 319.6,162.3 320.0,162.2 321.0,162.2 322.0,162.4 323.0,162.7 324.0,162.6 325.0,162.4 326.0,162.4 327.0,162.5 328.0,162.5 329.0,162.4 330.0,162.6 331.0,162.5 331.6,162.5 332.0,162.5 333.0,163.0 333.2,163.2 334.0,164.1 334.4,164.5 334.7,158.3 335.0,142.8 335.1,139.0 335.6,124.1 336.0,128.6 336.1,130.0 337.0,138.7 337.3,141.8 338.0,144.4 338.8,147.3 339.0,148.5 340.0,153.1 340.0,153.5 340.7,156.1 341.0,156.7 341.4,157.8 342.0,158.6 342.1,158.6 343.0,158.5 344.0,158.2 345.0,158.5 346.0,158.6 347.0,158.8 347.6,158.8 348.0,158.9 349.0,158.6 350.0,158.4 351.0,158.4 352.0,158.7 353.0,158.9 354.0,159.1 355.0,159.2 356.0,159.0 357.0,159.1 358.0,159.5 359.0,159.7 360.0,159.8 361.0,159.5 362.0,159.4 363.0,159.4 364.0,159.5 365.0,159.6 366.0,159.6 367.0,159.7 367.6,159.9 368.0,160.0 369.0,160.2 370.0,160.0 371.0,160.0 372.0,159.7 373.0,159.7 374.0,159.9 375.0,160.2 376.0,160.0 377.0,160.0 378.0,160.1 379.0,160.2 380.0,160.1 381.0,160.0 382.0,160.2 383.0,160.5 384.0,160.7 385.0,160.6 386.0,160.5 387.0,160.5 388.0,160.4 389.0,160.4 390.0,160.4 391.0,160.4 391.6,160.8 392.0,160.8 393.0,160.9 394.0,160.9 395.0,161.1 396.0,160.9 397.0,161.0 398.0,161.3 399.0,161.4 400.0,161.2 401.0,161.1 402.0,161.3 403.0,161.3 404.0,161.2 405.0,161.2 406.0,161.3 407.0,161.2 408.0,161.3 408.8,161.4 409.0,161.4 410.0,161.1 411.0,161.1 412.0,161.0 413.0,161.0 414.0,161.0 415.0,161.1 416.0,161.1 416.8,161.2 417.0,161.2 418.0,161.1 419.0,160.8 420.0,160.3 421.0,160.0 422.0,160.0 422.4,160.1 423.0,159.3 424.0,158.4 425.0,157.6 425.6,157.0 426.0,155.8 427.0,153.8 428.0,151.6 429.0,149.0 430.0,146.4 430.6,145.1 431.0,144.3 432.0,142.4 433.0,140.6 434.0,138.9 435.0,136.9 436.0,135.1 437.0,132.9 438.0,130.6 439.0,128.2 440.0,126.0 440.5,124.9 441.0,122.9 442.0,119.0 443.0,115.4 443.7,113.2 444.0,111.0 445.0,104.3 446.0,97.5 446.4,94.8 447.0,90.3 448.0,83.2 449.0,76.1 449.1,75.3 450.0,69.4 451.0,62.6 451.0,62.2 451.6,59.4 451.9,62.1 452.0,64.0 452.3,70.7 453.0,103.4 453.2,112.3 454.0,145.9 454.1,150.6 455.0,161.0 455.8,163.8 456.0,164.2 456.8,165.0 457.0,165.0 458.0,164.9 459.0,164.8 459.5,164.8 460.0,164.7 461.0,164.4 462.0,163.9 463.0,163.4 464.0,163.1 465.0,162.6 465.0,162.5 466.0,162.5 467.0,162.9 468.0,162.9 469.0,162.9 470.0,162.7 471.0,162.6 472.0,162.1 472.8,161.8 473.0,161.8 474.0,162.2 475.0,162.2 476.0,162.1 477.0,162.0 478.0,162.0 479.0,161.9 480.0,162.0 481.0,162.0 482.0,162.0 483.0,161.7 484.0,161.5 485.0,161.5 486.0,161.8 487.0,161.9 488.0,161.8 488.5,161.5 489.0,161.7 490.0,161.7 491.0,161.7 492.0,161.7 493.0,161.8 494.0,161.7 495.0,161.8 496.0,161.9 497.0,162.0 498.0,161.9 499.0,161.5 500.0,161.5 501.0,161.6 502.0,161.9 503.0,161.9 504.0,161.9 505.0,161.8 506.0,161.6 507.0,161.9 508.0,162.2 509.0,162.4 510.0,162.3 511.0,162.4 512.0,162.4 512.8,162.4 513.0,162.5 514.0,162.3 515.0,162.1 516.0,161.9 517.0,162.1 518.0,161.9 519.0,161.8 520.0,162.0 521.0,162.2 522.0,162.4 523.0,162.3 524.0,162.4 524.8,162.3 525.0,162.3 526.0,162.6 526.4,162.9 527.0,163.6 527.6,164.3 527.8,158.0 528.0,150.4 528.2,138.9 528.8,124.2 529.0,126.6 529.3,130.0 530.0,137.3 530.5,142.2 531.0,144.3 531.9,147.9 532.0,148.2 533.0,152.6 533.1,153.1 533.8,156.0 534.0,156.5 534.6,157.9 535.0,158.1 535.3,158.2 536.0,158.1 537.0,158.3 538.0,158.5 539.0,158.8 540.0,158.8 540.8,158.7 541.0,158.9 542.0,158.9 543.0,159.0 544.0,159.1 545.0,159.1 546.0,159.2 547.0,159.0 548.0,159.0 549.0,159.0 550.0,159.1 551.0,159.4 552.0,159.6 553.0,159.7 554.0,159.8 555.0,159.8 556.0,159.8 557.0,159.6 558.0,159.6 559.0,159.8 560.0,159.8 560.8,159.7 561.0,159.7 562.0,159.8 563.0,159.9 564.0,159.7 565.0,159.7 566.0,159.8 567.0,159.8 568.0,159.7 569.0,159.8 570.0,160.2 571.0,160.5 572.0,160.7 573.0,160.6 574.0,160.6 575.0,160.7 576.0,160.5 577.0,160.2 578.0,160.1 579.0,160.2 580.0,160.3 581.0,160.4 582.0,160.5 583.0,160.6 584.0,160.9 584.8,161.0 585.0,161.0 586.0,160.9 587.0,160.9 588.0,160.8 589.0,160.7 590.0,160.8 591.0,161.0 592.0,161.2 593.0,161.2 594.0,160.9 595.0,160.9 596.0,161.0 597.0,161.2 598.0,161.2 599.0,161.1 600.0,161.0 601.0,161.0 602.0,161.3 602.0,161.5 603.0,161.3 604.0,160.9 605.0,161.0 606.0,161.2 607.0,161.4 608.0,161.3 609.0,161.0 610.0,160.8 610.0,160.9 611.0,160.7 612.0,160.6 613.0,160.4 614.0,160.3 615.0,160.0 615.6,160.0 616.0,159.6 617.0,158.7 618.0,157.8 618.7,157.2 619.0,156.7 620.0,154.2 621.0,151.7 622.0,149.2 623.0,146.9 623.7,145.2 624.0,145.0 625.0,143.3 626.0,141.4 627.0,139.1 628.0,137.1 629.0,135.0 629.2,134.9 630.0,133.0 631.0,130.8 632.0,128.6 633.0,126.1 633.7,124.5 634.0,123.2 635.0,119.6 636.0,116.0 636.8,112.8 637.0,111.6 638.0,104.9 639.0,98.5 639.6,94.6 640.0,91.4 641.0,84.2 642.0,77.6 642.3,75.8 643.0,70.9 644.0,64.1 644.2,62.7 644.7,59.7 645.0,61.5 645.1,62.0 645.4,70.7 646.0,95.9 646.4,111.9 647.0,138.7 647.3,150.8 648.0,159.6 648.2,161.4 649.0,164.4 649.0,164.3 650.0,165.1 650.0,165.0 651.0,165.1 652.0,165.1 652.7,165.1 653.0,165.1 654.0,164.6 655.0,164.0 655.2,163.6 656.0,163.2 657.0,162.8 658.0,162.4 658.1,162.2 659.0,162.3 660.0,162.3 661.0,162.0 662.0,162.1 663.0,162.2 664.0,162.4 665.0,162.1 666.0,162.0 666.0,162.1 667.0,162.3 668.0,162.3 669.0,162.1 670.0,161.7 671.0,161.7 672.0,161.9 673.0,162.0 674.0,162.0 675.0,162.1 676.0,162.1 677.0,162.1 678.0,161.8 679.0,161.5 680.0,161.4 681.0,161.7 681.7,161.9 682.0,161.9 683.0,161.7 684.0,161.7 685.0,161.7 686.0,161.9 687.0,161.9 688.0,161.8 689.0,161.8 690.0,161.9 691.0,162.1 692.0,162.0 693.0,161.7 694.0,161.7 695.0,161.9 696.0,162.0 697.0,162.0 698.0,162.1 699.0,162.2 700.0,162.1 701.0,162.1 702.0,162.0 703.0,161.9 704.0,161.9 705.0,161.8 706.0,161.7 706.0,161.8 707.0,162.0 708.0,162.0 709.0,162.1 710.0,162.3 711.0,162.4 712.0,162.5 713.0,162.4 714.0,162.2 715.0,162.0 716.0,162.4 717.0,162.5 718.0,162.8 718.0,162.8 719.0,163.3 719.6,163.3 720.0,163.8 720.8,164.4 721.0,157.9 721.4,138.6 722.0,123.8 722.0,124.4 722.4,129.9 723.0,135.5 723.6,141.9 724.0,143.6 725.0,147.8 725.1,148.3 726.0,152.4 726.3,153.3 727.0,156.0 727.8,157.9 728.0,158.3 728.4,158.5 729.0,158.4 730.0,158.4 731.0,158.6 732.0,158.8 733.0,158.9 734.0,158.8 734.0,158.9 735.0,159.0 736.0,159.1 737.0,159.1 738.0,159.2 739.0,159.3 740.0,159.2 741.0,159.1 742.0,159.1 743.0,158.9 744.0,158.8 745.0,158.9 746.0,159.3 747.0,159.5 748.0,159.5 749.0,159.4 750.0,159.3 751.0,159.4 752.0,159.6 753.0,159.7 754.0,159.7 754.0,159.7 755.0,159.7 756.0,159.8 757.0,159.9 758.0,160.1 759.0,160.2 760.0,160.3 761.0,160.2 762.0,160.1 763.0,160.0 764.0,160.0 765.0,160.1 766.0,160.2 767.0,160.4 768.0,160.4 769.0,160.5 770.0,160.6 771.0,160.6 772.0,160.4 773.0,160.2 774.0,160.4 775.0,160.8 776.0,161.0 777.0,160.9 778.0,160.7 778.0,160.8 779.0,160.8 780.0,160.8 781.0,160.4 782.0,160.6 783.0,160.9 784.0,161.0 785.0,160.8 786.0,161.0 787.0,161.1 788.0,161.0 789.0,161.1 790.0,161.3 791.0,161.4 792.0,161.5 793.0,161.6 794.0,161.6 795.0,161.5 795.1,161.4 796.0,161.3 797.0,161.3 798.0,161.2 799.0,161.2 800.0,161.0 801.0,160.8 802.0,161.0 803.0,161.0 803.1,161.0 804.0,160.8 805.0,160.7 806.0,160.3 807.0,160.2 808.0,159.9 808.7,159.9 809.0,159.6 810.0,158.7 811.0,157.7 811.9,156.9 812.0,156.8 813.0,154.4 814.0,152.1 815.0,149.8 816.0,147.4 816.9,145.3 817.0,145.0 818.0,143.1 819.0,141.3 820.0,139.5 821.0,137.4 822.0,135.3 822.3,134.9 823.0,133.6 824.0,131.4 825.0,128.8 826.0,126.4 826.8,124.6 827.0,124.2 828.0,120.6 829.0,116.9 830.0,113.1 831.0,106.3 832.0,99.7 832.7,94.9 833.0,92.8 834.0,85.4 835.0,78.2 835.4,74.8 836.0,71.1 837.0,64.8 837.4,62.8 837.9,60.0 838.0,60.7 838.2,62.3 838.6,70.7 839.0,88.5 839.5,111.7 840.0,132.0 840.4,150.4 841.0,157.1 841.3,161.2 842.0,163.9 842.1,164.3 843.0,164.9 843.1,165.1 844.0,165.3 845.0,165.3 845.8,165.2 846.0,164.8 847.0,164.0 848.0,163.5 848.3,163.5 849.0,163.3 850.0,163.0 851.0,162.9 851.3,163.0 852.0,162.8 853.0,162.6 854.0,162.5 855.0,162.5 856.0,162.3 857.0,162.3 858.0,162.4 859.0,162.4 859.1,162.2 860.0,162.0 861.0,161.9 862.0,161.8 863.0,161.8 864.0,161.9 865.0,162.0 866.0,162.3 867.0,162.2 868.0,162.1 869.0,162.0 870.0,162.2 871.0,162.3 872.0,162.2 873.0,162.0 874.0,162.0 874.8,161.9 875.0,161.7 876.0,161.6 877.0,161.6 878.0,161.8 879.0,161.8 880.0,161.7 881.0,161.7 882.0,161.8 883.0,161.9 884.0,161.8 885.0,161.9 886.0,162.0 887.0,162.1 888.0,161.8 889.0,161.8 890.0,162.0 891.0,162.1 892.0,162.0 893.0,161.9 894.0,162.1 895.0,162.3 896.0,162.2 897.0,162.0 898.0,162.1 899.0,162.2 899.1,162.2 900.0,162.1 901.0,162.1 902.0,162.2 903.0,162.4 904.0,162.6 905.0,162.5 906.0,162.2 907.0,162.2 908.0,162.2 909.0,162.3 910.0,162.4 911.0,162.6 911.1,162.8 912.0,163.1 912.7,163.3 913.0,163.6 913.9,164.6 914.0,162.7 914.2,158.3 914.6,138.8 915.0,127.1 915.1,124.2 915.6,130.4 916.0,134.2 916.8,141.9 917.0,142.7 918.0,146.6 918.2,147.4 919.0,150.9 919.4,153.1 920.0,155.3 920.2,156.1 920.9,157.8 921.0,157.7 921.6,158.3 922.0,158.5 923.0,158.6 924.0,158.4 925.0,158.3 926.0,158.5 927.0,158.7 927.1,158.8 928.0,158.8 929.0,159.0 930.0,159.1 931.0,159.0 932.0,159.0 933.0,159.1 934.0,159.2 935.0,159.1 936.0,158.9 937.0,159.1 938.0,159.2 939.0,159.4 940.0,159.5 941.0,159.7 942.0,159.7 943.0,159.6 944.0,159.6 945.0,159.5 946.0,159.6 947.0,159.5 947.1,159.8 948.0,160.0 949.0,160.2 950.0,159.9 951.0,160.1 952.0,160.1 953.0,160.1 954.0,159.9 955.0,159.8 956.0,159.6 957.0,159.7 958.0,159.9 959.0,160.1 960.0,160.3 961.0,160.5 962.0,160.7 963.0,160.7 964.0,160.6 965.0,160.4 966.0,160.6 967.0,160.9 968.0,160.7 969.0,160.5 970.0,160.5 971.0,160.9 971.1,161.3 972.0,161.2 973.0,160.9 974.0,160.8 975.0,161.0 976.0,161.1 977.0,161.2 978.0,161.1 979.0,160.8 980.0,160.6 981.0,160.7 982.0,160.9 983.0,161.2 984.0,161.2 985.0,161.4 986.0,161.4 987.0,161.6 988.0,161.5 988.3,161.3 989.0,161.3 990.0,161.5 991.0,161.5 992.0,161.1 993.0,161.0 994.0,161.0 995.0,161.2 996.0,160.9 996.3,160.7 997.0,160.6 998.0,160.6 999.0,160.3 1000.0,160.2 1001.0,160.3 1001.9,160.2 1002.0,160.1 1003.0,159.0 1004.0,158.0 1005.0,157.1 1005.0,157.3 1006.0,155.1 1007.0,152.6 1008.0,150.3 1009.0,147.9 1010.0,145.5 1010.0,145.4 1011.0,143.6 1012.0,141.8 1013.0,139.8 1014.0,137.8 1015.0,136.0 1015.5,135.1 1016.0,134.0 1017.0,131.6 1018.0,129.2 1019.0,126.6 1020.0,124.2 1021.0,120.5 1022.0,116.8 1023.0,113.3 1023.2,112.8 1024.0,107.4 1025.0,100.7 1025.9,94.8 1026.0,93.7 1027.0,86.6 1028.0,79.6 1028.6,75.4 1029.0,72.8 1030.0,66.3 1030.5,62.7 1031.0,59.9 1031.0,59.6 1031.4,62.3 1031.8,70.7 1032.0,81.5 1032.7,112.3 1033.0,125.8 1033.6,150.8 1034.0,155.6 1034.5,161.3 1035.0,163.0 1035.3,164.1 1036.0,164.9 1036.3,165.1 1037.0,164.9 1038.0,165.0 1039.0,165.3 1040.0,164.8 1041.0,164.1 1041.5,163.6 1042.0,163.3 1043.0,163.0 1044.0,162.7 1044.4,162.7 1045.0,162.6 1046.0,162.7 1047.0,162.6 1048.0,162.6 1049.0,162.4 1050.0,162.3 1051.0,162.4 1052.0,162.4 1052.3,162.2 1053.0,162.0 1054.0,162.2 1055.0,162.1 1056.0,162.2 1057.0,162.1 1058.0,162.1 1059.0,161.9 1060.0,162.0 1061.0,162.0 1062.0,162.0 1063.0,162.2 1064.0,162.3 1065.0,162.2 1066.0,162.1 1067.0,162.4 1068.0,162.4 1069.0,162.3 1070.0,162.0 1071.0,162.0 1072.0,161.9 1073.0,161.9 1074.0,161.8 1075.0,162.0 1076.0,162.0 1077.0,162.1 1078.0,162.0 1079.0,162.2 1080.0,162.0 1081.0,161.8 1082.0,161.8 1083.0,162.1 1084.0,162.2 1085.0,161.9 1086.0,161.8 1087.0,162.0 1088.0,162.1 1089.0,162.1 1090.0,162.3 1091.0,162.3 1092.0,162.1 1092.3,162.0 1093.0,162.2 1094.0,162.4 1095.0,162.5 1096.0,162.6 1097.0,162.6 1098.0,162.4 1099.0,162.1 1100.0,162.1 1101.0,162.3 1102.0,162.3 1103.0,162.5 1104.0,162.7 1104.3,163.0 1105.0,163.2 1105.9,163.2 1106.0,163.1 1107.0,164.2 1107.1,164.4 1107.3,158.2 1107.7,138.9 1108.0,131.6 1108.3,124.1 1108.8,130.1 1109.0,132.4 1110.0,141.8 1110.0,141.8 1111.0,146.0 1111.4,147.8 1112.0,150.4 1112.6,153.0 1113.0,154.6 1113.3,156.1 1114.0,157.6 1114.1,157.5 1114.8,158.0 1115.0,158.0 1116.0,158.4 1117.0,158.6 1118.0,158.7 1119.0,158.5 1120.0,158.5 1120.3,158.5 1121.0,158.9 1122.0,159.2 1123.0,159.0 1124.0,159.1 1125.0,159.2 1126.0,159.2 1127.0,158.9 1128.0,158.8 1129.0,158.8 1130.0,158.9 1131.0,159.0 1132.0,159.0 1133.0,159.1 1134.0,159.3 1135.0,159.4 1136.0,159.3 1137.0,159.3 1138.0,159.5 1139.0,159.7 1140.0,159.6 1140.3,159.6 1141.0,159.5 1142.0,159.4 1143.0,159.4 1144.0,159.6 1145.0,159.8 1146.0,159.8 1147.0,159.8 1148.0,160.0 1149.0,160.2 1150.0,160.1 1151.0,160.0 1152.0,160.1 1153.0,160.1 1154.0,160.3 1155.0,160.1 1156.0,160.0 1157.0,159.9 1158.0,160.1 1159.0,160.4 1160.0,160.4 1161.0,160.5 1162.0,160.5 1163.0,160.7 1164.0,160.9 1164.3,160.8 1165.0,160.7 1166.0,160.7 1167.0,160.7 1168.0,160.7 1169.0,160.5 1170.0,161.0 1171.0,161.4 1172.0,161.5 1173.0,161.2 1174.0,161.1 1175.0,160.9 1176.0,160.9 1177.0,161.0 1178.0,161.3 1179.0,161.2 1180.0,161.1 1181.0,161.2 1181.4,161.4 1182.0,161.6 1183.0,161.5 1184.0,161.6 1185.0,161.5 1186.0,161.4 1187.0,161.3 1188.0,161.3 1189.0,161.0 1189.4,161.0 1190.0,161.1 1191.0,160.8 1192.0,160.5 1193.0,160.3 1194.0,160.2 1195.0,159.9 1195.0,159.9 1196.0,159.2 1197.0,158.2 1198.0,157.2 1198.2,157.1 1199.0,155.3 1200.0,153.1 1201.0,150.9 1202.0,148.6 1203.0,146.3 1203.2,145.6 1204.0,144.0 1205.0,142.0 1206.0,140.2 1207.0,138.4 1208.0,136.6 1208.6,135.2 1209.0,134.2 1210.0,131.8 1211.0,129.6 1212.0,127.2 1213.0,124.7 1213.2,124.3 1214.0,121.5 1215.0,118.0 1216.0,114.5 1216.3,113.2 1217.0,108.8 1218.0,102.0 1219.0,95.2 1219.0,94.9 1220.0,87.9 1221.0,80.6 1221.8,75.1 1222.0,73.5 1223.0,66.8 1223.7,62.3 1224.0,60.5 1224.2,59.5 1224.6,62.2 1224.9,70.8 1225.0,74.2 1225.8,112.1 1226.0,118.5 1226.8,150.3 1227.0,153.1 1227.6,161.3 1228.0,163.0 1228.4,164.5 1229.0,164.6 1229.4,164.8 1230.0,165.2 1231.0,165.4 1232.0,165.4 1232.2,165.3 1233.0,164.9 1234.0,164.3 1234.6,163.9 1235.0,163.8 1236.0,163.5 1237.0,162.9 1237.6,162.5 1238.0,162.2 1239.0,162.3 1240.0,162.3 1241.0,162.5 1242.0,162.7 1243.0,162.5 1244.0,162.3 1245.0,162.2 1245.4,162.4 1246.0,162.3 1247.0,162.2 1248.0,162.1 1249.0,162.0 1250.0,162.1 1251.0,162.2 1252.0,162.1 1253.0,162.0 1254.0,161.9 1255.0,162.0 1256.0,161.9 1257.0,161.9 1258.0,161.8 1259.0,161.7 1260.0,161.7 1261.0,161.9 1261.2,162.0 1262.0,162.0 1263.0,162.2 1264.0,162.2 1265.0,161.9 1266.0,161.6 1267.0,161.7 1268.0,161.7 1269.0,161.8 1270.0,162.0 1271.0,162.1 1272.0,161.9 1273.0,161.8 1274.0,161.9" fill="none" stroke="#e2902f" stroke-width="1" shape-rendering="crispEdges"/>
<line x1="20" y1="155.3" x2="1268" y2="155.3" stroke="#bcbcbc" stroke-width="1" stroke-dasharray="3.8 3"/>
<line x1="720.6" y1="46" x2="720.6" y2="176" stroke="#1f7a1f" stroke-width="1.6"/>
<line x1="720.6" y1="46.0" x2="720.6" y2="176.0" stroke="#e8e030" stroke-width="1" stroke-dasharray="3.5 2.5"/>
<line x1="726.4" y1="46.0" x2="726.4" y2="176.0" stroke="#1f9a2a" stroke-width="1" stroke-dasharray="3.5 2.5"/>
<line x1="815.4" y1="46.0" x2="815.4" y2="176.0" stroke="#e82020" stroke-width="1" stroke-dasharray="3.5 2.5"/>
<line x1="840.4" y1="46.0" x2="840.4" y2="176.0" stroke="#e82020" stroke-width="1" stroke-dasharray="3.5 2.5"/>
<line x1="914.7" y1="46.0" x2="914.7" y2="176.0" stroke="#d8d838" stroke-width="1" stroke-dasharray="3.5 2.5"/>
<line x1="639.4" y1="70.0" x2="639.4" y2="176.0" stroke="#c8c8c8" stroke-width="1.1" stroke-dasharray="4 2"/>
<rect x="565.3" y="44" width="505" height="134" fill="none" stroke="#b6b6b6" stroke-width="4"/>
<text x="126.6" y="175" class="tl" text-anchor="middle">-16 µs</text>
<text x="253.8" y="175" class="tl" text-anchor="middle">-12 µs</text>
<text x="381.0" y="175" class="tl" text-anchor="middle">-8 µs</text>
<text x="508.2" y="175" class="tl" text-anchor="middle">-4 µs</text>
<text x="635.4" y="175" class="tl" text-anchor="middle">0 s</text>
<text x="762.6" y="175" class="tl" text-anchor="middle">4 µs</text>
<text x="889.8" y="175" class="tl" text-anchor="middle">8 µs</text>
<text x="1017.0" y="175" class="tl" text-anchor="middle">12 µs</text>
<text x="1144.2" y="175" class="tl" text-anchor="middle">16 µs</text>
<text x="1252.2" y="63.4" class="ml" text-anchor="end">3.340227 W</text>
<text x="1252.2" y="90.8" class="ml" text-anchor="end">2.385876 W</text>
<text x="1252.2" y="118.3" class="ml" text-anchor="end">1.431526 W</text>
<text x="1250.3" y="145.8" class="ml" text-anchor="end">477.175 mW</text>
<text x="1250.3" y="173.4" class="ml" text-anchor="end">-477.175 mW</text>
<path d="M6.5 157.2 h10 l4.5 4.4 l-4.5 4.4 h-10 z" fill="#2a3040" stroke="#8ea2c8" stroke-width="0.9" stroke-linejoin="round"/>
<text x="9" y="164.2" font-size="6" fill="#9fb4dc" font-family="Liberation Sans, sans-serif">R 2</text>
<path d="M6.5 150.3 h10 l4.5 4.8 l-4.5 4.8 h-10 z" fill="#f2a440" stroke="#f0962a" stroke-width="1" stroke-linejoin="round"/>
<text x="7.5" y="158.3" font-size="7" fill="#3a2408" font-family="Liberation Sans, sans-serif">M 1</text>
<path d="M1245 47.5 H1270 V72 Z" fill="#636363" stroke="#1fa3cc" stroke-width="1.6" stroke-linejoin="round"/>
<circle cx="1264.2" cy="52.5" r="3" fill="none" stroke="#25b2dc" stroke-width="1.5"/>
<line x1="1262" y1="54.8" x2="1256.5" y2="60.5" stroke="#25b2dc" stroke-width="1.6"/>
<path d="M632.4 42.6 h14 l-7 7 z" fill="#f0962a"/><path d="M632.7 50.6 h13.4 v13.4 h-4.2 l-2.5 4.6 l-2.5 -4.6 h-4.2 z" fill="#000" stroke="#f0962a" stroke-width="1.6" stroke-linejoin="miter"/><text x="639.4" y="61.4" font-size="11" font-weight="bold" fill="#f0962a" text-anchor="middle" font-family="Liberation Sans, sans-serif">T</text>
<rect x="4" y="198" width="1271.6" height="531" fill="#000"/>
<path d="M15 200.5h1M41 200.5h1M66 200.5h1M92 200.5h1M117 200.5h1M142 200.5h1M168 200.5h1M193 200.5h1M219 200.5h1M244 200.5h1M269 200.5h1M295 200.5h1M320 200.5h1M346 200.5h1M371 200.5h1M396 200.5h1M422 200.5h1M447 200.5h1M473 200.5h1M498 200.5h1M523 200.5h1M549 200.5h1M574 200.5h1M600 200.5h1M625 200.5h1M650 200.5h1M676 200.5h1M701 200.5h1M727 200.5h1M752 200.5h1M777 200.5h1M803 200.5h1M828 200.5h1M854 200.5h1M879 200.5h1M904 200.5h1M930 200.5h1M955 200.5h1M981 200.5h1M1006 200.5h1M1031 200.5h1M1057 200.5h1M1082 200.5h1M1108 200.5h1M1133 200.5h1M1158 200.5h1M1184 200.5h1M1209 200.5h1M1234 200.5h1M1260 200.5h1M15 218.5h1M41 218.5h1M66 218.5h1M92 218.5h1M117 218.5h1M142 218.5h1M168 218.5h1M193 218.5h1M219 218.5h1M244 218.5h1M269 218.5h1M295 218.5h1M320 218.5h1M346 218.5h1M371 218.5h1M396 218.5h1M422 218.5h1M447 218.5h1M473 218.5h1M498 218.5h1M523 218.5h1M549 218.5h1M574 218.5h1M600 218.5h1M625 218.5h1M650 218.5h1M676 218.5h1M701 218.5h1M727 218.5h1M752 218.5h1M777 218.5h1M803 218.5h1M828 218.5h1M854 218.5h1M879 218.5h1M904 218.5h1M930 218.5h1M955 218.5h1M981 218.5h1M1006 218.5h1M1031 218.5h1M1057 218.5h1M1082 218.5h1M1108 218.5h1M1133 218.5h1M1158 218.5h1M1184 218.5h1M1209 218.5h1M15 235.5h1M41 235.5h1M66 235.5h1M92 235.5h1M117 235.5h1M142 235.5h1M168 235.5h1M193 235.5h1M219 235.5h1M244 235.5h1M269 235.5h1M295 235.5h1M320 235.5h1M346 235.5h1M371 235.5h1M396 235.5h1M422 235.5h1M447 235.5h1M473 235.5h1M498 235.5h1M523 235.5h1M549 235.5h1M574 235.5h1M600 235.5h1M625 235.5h1M650 235.5h1M676 235.5h1M701 235.5h1M727 235.5h1M752 235.5h1M777 235.5h1M803 235.5h1M828 235.5h1M854 235.5h1M879 235.5h1M904 235.5h1M930 235.5h1M955 235.5h1M981 235.5h1M1006 235.5h1M1031 235.5h1M1057 235.5h1M1082 235.5h1M1108 235.5h1M1133 235.5h1M1158 235.5h1M1184 235.5h1M1209 235.5h1M15 253.5h1M41 253.5h1M66 253.5h1M92 253.5h1M117 253.5h1M142 253.5h1M168 253.5h1M193 253.5h1M219 253.5h1M244 253.5h1M269 253.5h1M295 253.5h1M320 253.5h1M346 253.5h1M371 253.5h1M396 253.5h1M422 253.5h1M447 253.5h1M473 253.5h1M498 253.5h1M523 253.5h1M549 253.5h1M574 253.5h1M600 253.5h1M625 253.5h1M650 253.5h1M676 253.5h1M701 253.5h1M727 253.5h1M752 253.5h1M777 253.5h1M803 253.5h1M828 253.5h1M854 253.5h1M879 253.5h1M904 253.5h1M930 253.5h1M955 253.5h1M981 253.5h1M1006 253.5h1M1031 253.5h1M1057 253.5h1M1082 253.5h1M1108 253.5h1M1133 253.5h1M1158 253.5h1M1184 253.5h1M1209 253.5h1M15 270.5h1M41 270.5h1M66 270.5h1M92 270.5h1M117 270.5h1M142 270.5h1M168 270.5h1M193 270.5h1M219 270.5h1M244 270.5h1M269 270.5h1M295 270.5h1M320 270.5h1M346 270.5h1M371 270.5h1M396 270.5h1M422 270.5h1M447 270.5h1M473 270.5h1M498 270.5h1M523 270.5h1M549 270.5h1M574 270.5h1M600 270.5h1M625 270.5h1M650 270.5h1M676 270.5h1M701 270.5h1M727 270.5h1M752 270.5h1M777 270.5h1M803 270.5h1M828 270.5h1M854 270.5h1M879 270.5h1M904 270.5h1M930 270.5h1M955 270.5h1M981 270.5h1M1006 270.5h1M1031 270.5h1M1057 270.5h1M1082 270.5h1M1108 270.5h1M1133 270.5h1M1158 270.5h1M1184 270.5h1M1209 270.5h1M15 288.5h1M41 288.5h1M66 288.5h1M92 288.5h1M117 288.5h1M142 288.5h1M168 288.5h1M193 288.5h1M219 288.5h1M244 288.5h1M269 288.5h1M295 288.5h1M320 288.5h1M346 288.5h1M371 288.5h1M396 288.5h1M422 288.5h1M447 288.5h1M473 288.5h1M498 288.5h1M523 288.5h1M549 288.5h1M574 288.5h1M600 288.5h1M625 288.5h1M650 288.5h1M676 288.5h1M701 288.5h1M727 288.5h1M752 288.5h1M777 288.5h1M803 288.5h1M828 288.5h1M854 288.5h1M879 288.5h1M904 288.5h1M930 288.5h1M955 288.5h1M981 288.5h1M1006 288.5h1M1031 288.5h1M1057 288.5h1M1082 288.5h1M1108 288.5h1M1133 288.5h1M1158 288.5h1M1184 288.5h1M1209 288.5h1M15 305.5h1M41 305.5h1M66 305.5h1M92 305.5h1M117 305.5h1M142 305.5h1M168 305.5h1M193 305.5h1M219 305.5h1M244 305.5h1M269 305.5h1M295 305.5h1M320 305.5h1M346 305.5h1M371 305.5h1M396 305.5h1M422 305.5h1M447 305.5h1M473 305.5h1M498 305.5h1M523 305.5h1M549 305.5h1M574 305.5h1M600 305.5h1M625 305.5h1M650 305.5h1M676 305.5h1M701 305.5h1M727 305.5h1M752 305.5h1M777 305.5h1M803 305.5h1M828 305.5h1M854 305.5h1M879 305.5h1M904 305.5h1M930 305.5h1M955 305.5h1M981 305.5h1M1006 305.5h1M1031 305.5h1M1057 305.5h1M1082 305.5h1M1108 305.5h1M1133 305.5h1M1158 305.5h1M1184 305.5h1M1209 305.5h1M15 323.5h1M41 323.5h1M66 323.5h1M92 323.5h1M117 323.5h1M142 323.5h1M168 323.5h1M193 323.5h1M219 323.5h1M244 323.5h1M269 323.5h1M295 323.5h1M320 323.5h1M346 323.5h1M371 323.5h1M396 323.5h1M422 323.5h1M447 323.5h1M473 323.5h1M498 323.5h1M523 323.5h1M549 323.5h1M574 323.5h1M600 323.5h1M625 323.5h1M650 323.5h1M676 323.5h1M701 323.5h1M727 323.5h1M752 323.5h1M777 323.5h1M803 323.5h1M828 323.5h1M854 323.5h1M879 323.5h1M904 323.5h1M930 323.5h1M955 323.5h1M981 323.5h1M1006 323.5h1M1031 323.5h1M1057 323.5h1M1082 323.5h1M1108 323.5h1M1133 323.5h1M1158 323.5h1M1184 323.5h1M1209 323.5h1M15 341.5h1M41 341.5h1M66 341.5h1M92 341.5h1M117 341.5h1M142 341.5h1M168 341.5h1M193 341.5h1M219 341.5h1M244 341.5h1M269 341.5h1M295 341.5h1M320 341.5h1M346 341.5h1M371 341.5h1M396 341.5h1M422 341.5h1M447 341.5h1M473 341.5h1M498 341.5h1M523 341.5h1M549 341.5h1M574 341.5h1M600 341.5h1M625 341.5h1M650 341.5h1M676 341.5h1M701 341.5h1M727 341.5h1M752 341.5h1M777 341.5h1M803 341.5h1M828 341.5h1M854 341.5h1M879 341.5h1M904 341.5h1M930 341.5h1M955 341.5h1M981 341.5h1M1006 341.5h1M1031 341.5h1M1057 341.5h1M1082 341.5h1M1108 341.5h1M1133 341.5h1M1158 341.5h1M1184 341.5h1M1209 341.5h1M15 358.5h1M41 358.5h1M66 358.5h1M92 358.5h1M117 358.5h1M142 358.5h1M168 358.5h1M193 358.5h1M219 358.5h1M244 358.5h1M269 358.5h1M295 358.5h1M320 358.5h1M346 358.5h1M371 358.5h1M396 358.5h1M422 358.5h1M447 358.5h1M473 358.5h1M498 358.5h1M523 358.5h1M549 358.5h1M574 358.5h1M600 358.5h1M625 358.5h1M650 358.5h1M676 358.5h1M701 358.5h1M727 358.5h1M752 358.5h1M777 358.5h1M803 358.5h1M828 358.5h1M854 358.5h1M879 358.5h1M904 358.5h1M930 358.5h1M955 358.5h1M981 358.5h1M1006 358.5h1M1031 358.5h1M1057 358.5h1M1082 358.5h1M1108 358.5h1M1133 358.5h1M1158 358.5h1M1184 358.5h1M1209 358.5h1M1234 358.5h1M1260 358.5h1M15 383.5h1M41 383.5h1M66 383.5h1M92 383.5h1M117 383.5h1M142 383.5h1M168 383.5h1M193 383.5h1M219 383.5h1M244 383.5h1M269 383.5h1M295 383.5h1M320 383.5h1M346 383.5h1M371 383.5h1M396 383.5h1M422 383.5h1M447 383.5h1M473 383.5h1M498 383.5h1M523 383.5h1M549 383.5h1M574 383.5h1M600 383.5h1M625 383.5h1M650 383.5h1M676 383.5h1M701 383.5h1M727 383.5h1M752 383.5h1M777 383.5h1M803 383.5h1M828 383.5h1M854 383.5h1M879 383.5h1M904 383.5h1M930 383.5h1M955 383.5h1M981 383.5h1M1006 383.5h1M1031 383.5h1M1057 383.5h1M1082 383.5h1M1108 383.5h1M1133 383.5h1M1158 383.5h1M1184 383.5h1M1209 383.5h1M15 401.5h1M41 401.5h1M66 401.5h1M92 401.5h1M117 401.5h1M142 401.5h1M168 401.5h1M193 401.5h1M219 401.5h1M244 401.5h1M269 401.5h1M295 401.5h1M320 401.5h1M346 401.5h1M371 401.5h1M396 401.5h1M422 401.5h1M447 401.5h1M473 401.5h1M498 401.5h1M523 401.5h1M549 401.5h1M574 401.5h1M600 401.5h1M625 401.5h1M650 401.5h1M676 401.5h1M701 401.5h1M727 401.5h1M752 401.5h1M777 401.5h1M803 401.5h1M828 401.5h1M854 401.5h1M879 401.5h1M904 401.5h1M930 401.5h1M955 401.5h1M981 401.5h1M1006 401.5h1M1031 401.5h1M1057 401.5h1M1082 401.5h1M1108 401.5h1M1133 401.5h1M1158 401.5h1M1184 401.5h1M1209 401.5h1M15 418.5h1M41 418.5h1M66 418.5h1M92 418.5h1M117 418.5h1M142 418.5h1M168 418.5h1M193 418.5h1M219 418.5h1M244 418.5h1M269 418.5h1M295 418.5h1M320 418.5h1M346 418.5h1M371 418.5h1M396 418.5h1M422 418.5h1M447 418.5h1M473 418.5h1M498 418.5h1M523 418.5h1M549 418.5h1M574 418.5h1M600 418.5h1M625 418.5h1M650 418.5h1M676 418.5h1M701 418.5h1M727 418.5h1M752 418.5h1M777 418.5h1M803 418.5h1M828 418.5h1M854 418.5h1M879 418.5h1M904 418.5h1M930 418.5h1M955 418.5h1M981 418.5h1M1006 418.5h1M1031 418.5h1M1057 418.5h1M1082 418.5h1M1108 418.5h1M1133 418.5h1M1158 418.5h1M1184 418.5h1M1209 418.5h1M15 436.5h1M41 436.5h1M66 436.5h1M92 436.5h1M117 436.5h1M142 436.5h1M168 436.5h1M193 436.5h1M219 436.5h1M244 436.5h1M269 436.5h1M295 436.5h1M320 436.5h1M346 436.5h1M371 436.5h1M396 436.5h1M422 436.5h1M447 436.5h1M473 436.5h1M498 436.5h1M523 436.5h1M549 436.5h1M574 436.5h1M600 436.5h1M625 436.5h1M650 436.5h1M676 436.5h1M701 436.5h1M727 436.5h1M752 436.5h1M777 436.5h1M803 436.5h1M828 436.5h1M854 436.5h1M879 436.5h1M904 436.5h1M930 436.5h1M955 436.5h1M981 436.5h1M1006 436.5h1M1031 436.5h1M1057 436.5h1M1082 436.5h1M1108 436.5h1M1133 436.5h1M1158 436.5h1M1184 436.5h1M1209 436.5h1M15 453.5h1M41 453.5h1M66 453.5h1M92 453.5h1M117 453.5h1M142 453.5h1M168 453.5h1M193 453.5h1M219 453.5h1M244 453.5h1M269 453.5h1M295 453.5h1M320 453.5h1M346 453.5h1M371 453.5h1M396 453.5h1M422 453.5h1M447 453.5h1M473 453.5h1M498 453.5h1M523 453.5h1M549 453.5h1M574 453.5h1M600 453.5h1M625 453.5h1M650 453.5h1M676 453.5h1M701 453.5h1M727 453.5h1M752 453.5h1M777 453.5h1M803 453.5h1M828 453.5h1M854 453.5h1M879 453.5h1M904 453.5h1M930 453.5h1M955 453.5h1M981 453.5h1M1006 453.5h1M1031 453.5h1M1057 453.5h1M1082 453.5h1M1108 453.5h1M1133 453.5h1M1158 453.5h1M1184 453.5h1M1209 453.5h1M15 471.5h1M41 471.5h1M66 471.5h1M92 471.5h1M117 471.5h1M142 471.5h1M168 471.5h1M193 471.5h1M219 471.5h1M244 471.5h1M269 471.5h1M295 471.5h1M320 471.5h1M346 471.5h1M371 471.5h1M396 471.5h1M422 471.5h1M447 471.5h1M473 471.5h1M498 471.5h1M523 471.5h1M549 471.5h1M574 471.5h1M600 471.5h1M625 471.5h1M650 471.5h1M676 471.5h1M701 471.5h1M727 471.5h1M752 471.5h1M777 471.5h1M803 471.5h1M828 471.5h1M854 471.5h1M879 471.5h1M904 471.5h1M930 471.5h1M955 471.5h1M981 471.5h1M1006 471.5h1M1031 471.5h1M1057 471.5h1M1082 471.5h1M1108 471.5h1M1133 471.5h1M1158 471.5h1M1184 471.5h1M1209 471.5h1M15 488.5h1M41 488.5h1M66 488.5h1M92 488.5h1M117 488.5h1M142 488.5h1M168 488.5h1M193 488.5h1M219 488.5h1M244 488.5h1M269 488.5h1M295 488.5h1M320 488.5h1M346 488.5h1M371 488.5h1M396 488.5h1M422 488.5h1M447 488.5h1M473 488.5h1M498 488.5h1M523 488.5h1M549 488.5h1M574 488.5h1M600 488.5h1M625 488.5h1M650 488.5h1M676 488.5h1M701 488.5h1M727 488.5h1M752 488.5h1M777 488.5h1M803 488.5h1M828 488.5h1M854 488.5h1M879 488.5h1M904 488.5h1M930 488.5h1M955 488.5h1M981 488.5h1M1006 488.5h1M1031 488.5h1M1057 488.5h1M1082 488.5h1M1108 488.5h1M1133 488.5h1M1158 488.5h1M1184 488.5h1M1209 488.5h1M15 506.5h1M41 506.5h1M66 506.5h1M92 506.5h1M117 506.5h1M142 506.5h1M168 506.5h1M193 506.5h1M219 506.5h1M244 506.5h1M269 506.5h1M295 506.5h1M320 506.5h1M346 506.5h1M371 506.5h1M396 506.5h1M422 506.5h1M447 506.5h1M473 506.5h1M498 506.5h1M523 506.5h1M549 506.5h1M574 506.5h1M600 506.5h1M625 506.5h1M650 506.5h1M676 506.5h1M701 506.5h1M727 506.5h1M752 506.5h1M777 506.5h1M803 506.5h1M828 506.5h1M854 506.5h1M879 506.5h1M904 506.5h1M930 506.5h1M955 506.5h1M981 506.5h1M1006 506.5h1M1031 506.5h1M1057 506.5h1M1082 506.5h1M1108 506.5h1M1133 506.5h1M1158 506.5h1M1184 506.5h1M1209 506.5h1M15 523.5h1M41 523.5h1M66 523.5h1M92 523.5h1M117 523.5h1M142 523.5h1M168 523.5h1M193 523.5h1M219 523.5h1M244 523.5h1M269 523.5h1M295 523.5h1M320 523.5h1M346 523.5h1M371 523.5h1M396 523.5h1M422 523.5h1M447 523.5h1M473 523.5h1M498 523.5h1M523 523.5h1M549 523.5h1M574 523.5h1M600 523.5h1M625 523.5h1M650 523.5h1M676 523.5h1M701 523.5h1M727 523.5h1M752 523.5h1M777 523.5h1M803 523.5h1M828 523.5h1M854 523.5h1M879 523.5h1M904 523.5h1M930 523.5h1M955 523.5h1M981 523.5h1M1006 523.5h1M1031 523.5h1M1057 523.5h1M1082 523.5h1M1108 523.5h1M1133 523.5h1M1158 523.5h1M1184 523.5h1M1209 523.5h1M15 541.5h1M41 541.5h1M66 541.5h1M92 541.5h1M117 541.5h1M142 541.5h1M168 541.5h1M193 541.5h1M219 541.5h1M244 541.5h1M269 541.5h1M295 541.5h1M320 541.5h1M346 541.5h1M371 541.5h1M396 541.5h1M422 541.5h1M447 541.5h1M473 541.5h1M498 541.5h1M523 541.5h1M549 541.5h1M574 541.5h1M600 541.5h1M625 541.5h1M650 541.5h1M676 541.5h1M701 541.5h1M727 541.5h1M752 541.5h1M777 541.5h1M803 541.5h1M828 541.5h1M854 541.5h1M879 541.5h1M904 541.5h1M930 541.5h1M955 541.5h1M981 541.5h1M1006 541.5h1M1031 541.5h1M1057 541.5h1M1082 541.5h1M1108 541.5h1M1133 541.5h1M1158 541.5h1M1184 541.5h1M1209 541.5h1M15 561.5h1M41 561.5h1M66 561.5h1M92 561.5h1M117 561.5h1M142 561.5h1M168 561.5h1M193 561.5h1M219 561.5h1M244 561.5h1M269 561.5h1M295 561.5h1M320 561.5h1M346 561.5h1M371 561.5h1M396 561.5h1M422 561.5h1M447 561.5h1M473 561.5h1M498 561.5h1M523 561.5h1M549 561.5h1M574 561.5h1M600 561.5h1M625 561.5h1M650 561.5h1M676 561.5h1M701 561.5h1M727 561.5h1M752 561.5h1M777 561.5h1M803 561.5h1M828 561.5h1M854 561.5h1M879 561.5h1M904 561.5h1M930 561.5h1M955 561.5h1M981 561.5h1M1006 561.5h1M1031 561.5h1M1057 561.5h1M1082 561.5h1M1108 561.5h1M1133 561.5h1M1158 561.5h1M1184 561.5h1M1209 561.5h1M15 579.5h1M41 579.5h1M66 579.5h1M92 579.5h1M117 579.5h1M142 579.5h1M168 579.5h1M193 579.5h1M219 579.5h1M244 579.5h1M269 579.5h1M295 579.5h1M320 579.5h1M346 579.5h1M371 579.5h1M396 579.5h1M422 579.5h1M447 579.5h1M473 579.5h1M498 579.5h1M523 579.5h1M549 579.5h1M574 579.5h1M600 579.5h1M625 579.5h1M650 579.5h1M676 579.5h1M701 579.5h1M727 579.5h1M752 579.5h1M777 579.5h1M803 579.5h1M828 579.5h1M854 579.5h1M879 579.5h1M904 579.5h1M930 579.5h1M955 579.5h1M981 579.5h1M1006 579.5h1M1031 579.5h1M1057 579.5h1M1082 579.5h1M1108 579.5h1M1133 579.5h1M1158 579.5h1M1184 579.5h1M1209 579.5h1M15 596.5h1M41 596.5h1M66 596.5h1M92 596.5h1M117 596.5h1M142 596.5h1M168 596.5h1M193 596.5h1M219 596.5h1M244 596.5h1M269 596.5h1M295 596.5h1M320 596.5h1M346 596.5h1M371 596.5h1M396 596.5h1M422 596.5h1M447 596.5h1M473 596.5h1M498 596.5h1M523 596.5h1M549 596.5h1M574 596.5h1M600 596.5h1M625 596.5h1M650 596.5h1M676 596.5h1M701 596.5h1M727 596.5h1M752 596.5h1M777 596.5h1M803 596.5h1M828 596.5h1M854 596.5h1M879 596.5h1M904 596.5h1M930 596.5h1M955 596.5h1M981 596.5h1M1006 596.5h1M1031 596.5h1M1057 596.5h1M1082 596.5h1M1108 596.5h1M1133 596.5h1M1158 596.5h1M1184 596.5h1M1209 596.5h1M15 614.5h1M41 614.5h1M66 614.5h1M92 614.5h1M117 614.5h1M142 614.5h1M168 614.5h1M193 614.5h1M219 614.5h1M244 614.5h1M269 614.5h1M295 614.5h1M320 614.5h1M346 614.5h1M371 614.5h1M396 614.5h1M422 614.5h1M447 614.5h1M473 614.5h1M498 614.5h1M523 614.5h1M549 614.5h1M574 614.5h1M600 614.5h1M625 614.5h1M650 614.5h1M676 614.5h1M701 614.5h1M727 614.5h1M752 614.5h1M777 614.5h1M803 614.5h1M828 614.5h1M854 614.5h1M879 614.5h1M904 614.5h1M930 614.5h1M955 614.5h1M981 614.5h1M1006 614.5h1M1031 614.5h1M1057 614.5h1M1082 614.5h1M1108 614.5h1M1133 614.5h1M1158 614.5h1M1184 614.5h1M1209 614.5h1M15 632.5h1M41 632.5h1M66 632.5h1M92 632.5h1M117 632.5h1M142 632.5h1M168 632.5h1M193 632.5h1M219 632.5h1M244 632.5h1M269 632.5h1M295 632.5h1M320 632.5h1M346 632.5h1M371 632.5h1M396 632.5h1M422 632.5h1M447 632.5h1M473 632.5h1M498 632.5h1M523 632.5h1M549 632.5h1M574 632.5h1M600 632.5h1M625 632.5h1M650 632.5h1M676 632.5h1M701 632.5h1M727 632.5h1M752 632.5h1M777 632.5h1M803 632.5h1M828 632.5h1M854 632.5h1M879 632.5h1M904 632.5h1M930 632.5h1M955 632.5h1M981 632.5h1M1006 632.5h1M1031 632.5h1M1057 632.5h1M1082 632.5h1M1108 632.5h1M1133 632.5h1M1158 632.5h1M1184 632.5h1M1209 632.5h1M15 650.5h1M41 650.5h1M66 650.5h1M92 650.5h1M117 650.5h1M142 650.5h1M168 650.5h1M193 650.5h1M219 650.5h1M244 650.5h1M269 650.5h1M295 650.5h1M320 650.5h1M346 650.5h1M371 650.5h1M396 650.5h1M422 650.5h1M447 650.5h1M473 650.5h1M498 650.5h1M523 650.5h1M549 650.5h1M574 650.5h1M600 650.5h1M625 650.5h1M650 650.5h1M676 650.5h1M701 650.5h1M727 650.5h1M752 650.5h1M777 650.5h1M803 650.5h1M828 650.5h1M854 650.5h1M879 650.5h1M904 650.5h1M930 650.5h1M955 650.5h1M981 650.5h1M1006 650.5h1M1031 650.5h1M1057 650.5h1M1082 650.5h1M1108 650.5h1M1133 650.5h1M1158 650.5h1M1184 650.5h1M1209 650.5h1M15 667.5h1M41 667.5h1M66 667.5h1M92 667.5h1M117 667.5h1M142 667.5h1M168 667.5h1M193 667.5h1M219 667.5h1M244 667.5h1M269 667.5h1M295 667.5h1M320 667.5h1M346 667.5h1M371 667.5h1M396 667.5h1M422 667.5h1M447 667.5h1M473 667.5h1M498 667.5h1M523 667.5h1M549 667.5h1M574 667.5h1M600 667.5h1M625 667.5h1M650 667.5h1M676 667.5h1M701 667.5h1M727 667.5h1M752 667.5h1M777 667.5h1M803 667.5h1M828 667.5h1M854 667.5h1M879 667.5h1M904 667.5h1M930 667.5h1M955 667.5h1M981 667.5h1M1006 667.5h1M1031 667.5h1M1057 667.5h1M1082 667.5h1M1108 667.5h1M1133 667.5h1M1158 667.5h1M1184 667.5h1M1209 667.5h1M15 685.5h1M41 685.5h1M66 685.5h1M92 685.5h1M117 685.5h1M142 685.5h1M168 685.5h1M193 685.5h1M219 685.5h1M244 685.5h1M269 685.5h1M295 685.5h1M320 685.5h1M346 685.5h1M371 685.5h1M396 685.5h1M422 685.5h1M447 685.5h1M473 685.5h1M498 685.5h1M523 685.5h1M549 685.5h1M574 685.5h1M600 685.5h1M625 685.5h1M650 685.5h1M676 685.5h1M701 685.5h1M727 685.5h1M752 685.5h1M777 685.5h1M803 685.5h1M828 685.5h1M854 685.5h1M879 685.5h1M904 685.5h1M930 685.5h1M955 685.5h1M981 685.5h1M1006 685.5h1M1031 685.5h1M1057 685.5h1M1082 685.5h1M1108 685.5h1M1133 685.5h1M1158 685.5h1M1184 685.5h1M1209 685.5h1M15 703.5h1M41 703.5h1M66 703.5h1M92 703.5h1M117 703.5h1M142 703.5h1M168 703.5h1M193 703.5h1M219 703.5h1M244 703.5h1M269 703.5h1M295 703.5h1M320 703.5h1M346 703.5h1M371 703.5h1M396 703.5h1M422 703.5h1M447 703.5h1M473 703.5h1M498 703.5h1M523 703.5h1M549 703.5h1M574 703.5h1M600 703.5h1M625 703.5h1M650 703.5h1M676 703.5h1M701 703.5h1M727 703.5h1M752 703.5h1M777 703.5h1M803 703.5h1M828 703.5h1M854 703.5h1M879 703.5h1M904 703.5h1M930 703.5h1M955 703.5h1M981 703.5h1M1006 703.5h1M1031 703.5h1M1057 703.5h1M1082 703.5h1M1108 703.5h1M1133 703.5h1M1158 703.5h1M1184 703.5h1M1209 703.5h1M15 720.5h1M41 720.5h1M66 720.5h1M92 720.5h1M117 720.5h1M142 720.5h1M168 720.5h1M193 720.5h1M219 720.5h1M244 720.5h1M269 720.5h1M295 720.5h1M320 720.5h1M346 720.5h1M371 720.5h1M396 720.5h1M422 720.5h1M447 720.5h1M473 720.5h1M498 720.5h1M523 720.5h1M549 720.5h1M574 720.5h1M600 720.5h1M625 720.5h1M650 720.5h1M676 720.5h1M701 720.5h1M727 720.5h1M752 720.5h1M777 720.5h1M803 720.5h1M828 720.5h1M854 720.5h1M879 720.5h1M904 720.5h1M930 720.5h1M955 720.5h1M981 720.5h1M1006 720.5h1M1031 720.5h1M1057 720.5h1M1082 720.5h1M1108 720.5h1M1133 720.5h1M1158 720.5h1M1184 720.5h1M1209 720.5h1M1234 720.5h1M1260 720.5h1" stroke="#9a9a9a" stroke-width="1" fill="none" opacity="1" shape-rendering="crispEdges"/>
<path d="M66 200.5h1M66 204.5h1M66 207.5h1M66 211.5h1M66 214.5h1M66 218.5h1M66 221.5h1M66 225.5h1M66 228.5h1M66 232.5h1M66 235.5h1M66 239.5h1M66 242.5h1M66 246.5h1M66 249.5h1M66 253.5h1M66 256.5h1M66 260.5h1M66 263.5h1M66 267.5h1M66 270.5h1M66 274.5h1M66 277.5h1M66 281.5h1M66 284.5h1M66 288.5h1M66 291.5h1M66 295.5h1M66 298.5h1M66 302.5h1M66 305.5h1M66 309.5h1M66 312.5h1M66 316.5h1M66 319.5h1M66 323.5h1M66 326.5h1M66 330.5h1M66 333.5h1M66 337.5h1M66 340.5h1M66 344.5h1M66 348.5h1M66 351.5h1M66 355.5h1M66 358.5h1M66 362.5h1M66 365.5h1M66 369.5h1M66 372.5h1M66 376.5h1M66 379.5h1M66 383.5h1M66 387.5h1M66 390.5h1M66 394.5h1M66 397.5h1M66 401.5h1M66 404.5h1M66 408.5h1M66 411.5h1M66 415.5h1M66 418.5h1M66 422.5h1M66 425.5h1M66 429.5h1M66 432.5h1M66 436.5h1M66 439.5h1M66 443.5h1M66 446.5h1M66 450.5h1M66 453.5h1M66 457.5h1M66 460.5h1M66 464.5h1M66 467.5h1M66 471.5h1M66 474.5h1M66 478.5h1M66 481.5h1M66 485.5h1M66 488.5h1M66 492.5h1M66 495.5h1M66 499.5h1M66 502.5h1M66 506.5h1M66 509.5h1M66 513.5h1M66 516.5h1M66 520.5h1M66 523.5h1M66 527.5h1M66 530.5h1M66 534.5h1M66 537.5h1M66 541.5h1M66 544.5h1M66 548.5h1M66 554.5h1M66 557.5h1M66 561.5h1M66 565.5h1M66 568.5h1M66 572.5h1M66 575.5h1M66 579.5h1M66 582.5h1M66 586.5h1M66 589.5h1M66 593.5h1M66 596.5h1M66 600.5h1M66 603.5h1M66 607.5h1M66 611.5h1M66 614.5h1M66 618.5h1M66 621.5h1M66 625.5h1M66 628.5h1M66 632.5h1M66 635.5h1M66 639.5h1M66 642.5h1M66 646.5h1M66 649.5h1M66 653.5h1M66 657.5h1M66 660.5h1M66 664.5h1M66 667.5h1M66 671.5h1M66 674.5h1M66 678.5h1M66 681.5h1M66 685.5h1M66 688.5h1M66 692.5h1M66 696.5h1M66 699.5h1M66 703.5h1M66 706.5h1M66 710.5h1M66 713.5h1M66 717.5h1M66 720.5h1M66 724.5h1M66 727.5h1M193 200.5h1M193 204.5h1M193 207.5h1M193 211.5h1M193 214.5h1M193 218.5h1M193 221.5h1M193 225.5h1M193 228.5h1M193 232.5h1M193 235.5h1M193 239.5h1M193 242.5h1M193 246.5h1M193 249.5h1M193 253.5h1M193 256.5h1M193 260.5h1M193 263.5h1M193 267.5h1M193 270.5h1M193 274.5h1M193 277.5h1M193 281.5h1M193 284.5h1M193 288.5h1M193 291.5h1M193 295.5h1M193 298.5h1M193 302.5h1M193 305.5h1M193 309.5h1M193 312.5h1M193 316.5h1M193 319.5h1M193 323.5h1M193 326.5h1M193 330.5h1M193 333.5h1M193 337.5h1M193 340.5h1M193 344.5h1M193 348.5h1M193 351.5h1M193 355.5h1M193 358.5h1M193 362.5h1M193 365.5h1M193 369.5h1M193 372.5h1M193 376.5h1M193 379.5h1M193 383.5h1M193 387.5h1M193 390.5h1M193 394.5h1M193 397.5h1M193 401.5h1M193 404.5h1M193 408.5h1M193 411.5h1M193 415.5h1M193 418.5h1M193 422.5h1M193 425.5h1M193 429.5h1M193 432.5h1M193 436.5h1M193 439.5h1M193 443.5h1M193 446.5h1M193 450.5h1M193 453.5h1M193 457.5h1M193 460.5h1M193 464.5h1M193 467.5h1M193 471.5h1M193 474.5h1M193 478.5h1M193 481.5h1M193 485.5h1M193 488.5h1M193 492.5h1M193 495.5h1M193 499.5h1M193 502.5h1M193 506.5h1M193 509.5h1M193 513.5h1M193 516.5h1M193 520.5h1M193 523.5h1M193 527.5h1M193 530.5h1M193 534.5h1M193 537.5h1M193 541.5h1M193 544.5h1M193 548.5h1M193 554.5h1M193 557.5h1M193 561.5h1M193 565.5h1M193 568.5h1M193 572.5h1M193 575.5h1M193 579.5h1M193 582.5h1M193 586.5h1M193 589.5h1M193 593.5h1M193 596.5h1M193 600.5h1M193 603.5h1M193 607.5h1M193 611.5h1M193 614.5h1M193 618.5h1M193 621.5h1M193 625.5h1M193 628.5h1M193 632.5h1M193 635.5h1M193 639.5h1M193 642.5h1M193 646.5h1M193 649.5h1M193 653.5h1M193 657.5h1M193 660.5h1M193 664.5h1M193 667.5h1M193 671.5h1M193 674.5h1M193 678.5h1M193 681.5h1M193 685.5h1M193 688.5h1M193 692.5h1M193 696.5h1M193 699.5h1M193 703.5h1M193 706.5h1M193 710.5h1M193 713.5h1M193 717.5h1M193 720.5h1M193 724.5h1M193 727.5h1M320 200.5h1M320 204.5h1M320 207.5h1M320 211.5h1M320 214.5h1M320 218.5h1M320 221.5h1M320 225.5h1M320 228.5h1M320 232.5h1M320 235.5h1M320 239.5h1M320 242.5h1M320 246.5h1M320 249.5h1M320 253.5h1M320 256.5h1M320 260.5h1M320 263.5h1M320 267.5h1M320 270.5h1M320 274.5h1M320 277.5h1M320 281.5h1M320 284.5h1M320 288.5h1M320 291.5h1M320 295.5h1M320 298.5h1M320 302.5h1M320 305.5h1M320 309.5h1M320 312.5h1M320 316.5h1M320 319.5h1M320 323.5h1M320 326.5h1M320 330.5h1M320 333.5h1M320 337.5h1M320 340.5h1M320 344.5h1M320 348.5h1M320 351.5h1M320 355.5h1M320 358.5h1M320 362.5h1M320 365.5h1M320 369.5h1M320 372.5h1M320 376.5h1M320 379.5h1M320 383.5h1M320 387.5h1M320 390.5h1M320 394.5h1M320 397.5h1M320 401.5h1M320 404.5h1M320 408.5h1M320 411.5h1M320 415.5h1M320 418.5h1M320 422.5h1M320 425.5h1M320 429.5h1M320 432.5h1M320 436.5h1M320 439.5h1M320 443.5h1M320 446.5h1M320 450.5h1M320 453.5h1M320 457.5h1M320 460.5h1M320 464.5h1M320 467.5h1M320 471.5h1M320 474.5h1M320 478.5h1M320 481.5h1M320 485.5h1M320 488.5h1M320 492.5h1M320 495.5h1M320 499.5h1M320 502.5h1M320 506.5h1M320 509.5h1M320 513.5h1M320 516.5h1M320 520.5h1M320 523.5h1M320 527.5h1M320 530.5h1M320 534.5h1M320 537.5h1M320 541.5h1M320 544.5h1M320 548.5h1M320 554.5h1M320 557.5h1M320 561.5h1M320 565.5h1M320 568.5h1M320 572.5h1M320 575.5h1M320 579.5h1M320 582.5h1M320 586.5h1M320 589.5h1M320 593.5h1M320 596.5h1M320 600.5h1M320 603.5h1M320 607.5h1M320 611.5h1M320 614.5h1M320 618.5h1M320 621.5h1M320 625.5h1M320 628.5h1M320 632.5h1M320 635.5h1M320 639.5h1M320 642.5h1M320 646.5h1M320 649.5h1M320 653.5h1M320 657.5h1M320 660.5h1M320 664.5h1M320 667.5h1M320 671.5h1M320 674.5h1M320 678.5h1M320 681.5h1M320 685.5h1M320 688.5h1M320 692.5h1M320 696.5h1M320 699.5h1M320 703.5h1M320 706.5h1M320 710.5h1M320 713.5h1M320 717.5h1M320 720.5h1M320 724.5h1M320 727.5h1M447 200.5h1M447 204.5h1M447 207.5h1M447 211.5h1M447 214.5h1M447 218.5h1M447 221.5h1M447 225.5h1M447 228.5h1M447 232.5h1M447 235.5h1M447 239.5h1M447 242.5h1M447 246.5h1M447 249.5h1M447 253.5h1M447 256.5h1M447 260.5h1M447 263.5h1M447 267.5h1M447 270.5h1M447 274.5h1M447 277.5h1M447 281.5h1M447 284.5h1M447 288.5h1M447 291.5h1M447 295.5h1M447 298.5h1M447 302.5h1M447 305.5h1M447 309.5h1M447 312.5h1M447 316.5h1M447 319.5h1M447 323.5h1M447 326.5h1M447 330.5h1M447 333.5h1M447 337.5h1M447 340.5h1M447 344.5h1M447 348.5h1M447 351.5h1M447 355.5h1M447 358.5h1M447 362.5h1M447 365.5h1M447 369.5h1M447 372.5h1M447 376.5h1M447 379.5h1M447 383.5h1M447 387.5h1M447 390.5h1M447 394.5h1M447 397.5h1M447 401.5h1M447 404.5h1M447 408.5h1M447 411.5h1M447 415.5h1M447 418.5h1M447 422.5h1M447 425.5h1M447 429.5h1M447 432.5h1M447 436.5h1M447 439.5h1M447 443.5h1M447 446.5h1M447 450.5h1M447 453.5h1M447 457.5h1M447 460.5h1M447 464.5h1M447 467.5h1M447 471.5h1M447 474.5h1M447 478.5h1M447 481.5h1M447 485.5h1M447 488.5h1M447 492.5h1M447 495.5h1M447 499.5h1M447 502.5h1M447 506.5h1M447 509.5h1M447 513.5h1M447 516.5h1M447 520.5h1M447 523.5h1M447 527.5h1M447 530.5h1M447 534.5h1M447 537.5h1M447 541.5h1M447 544.5h1M447 548.5h1M447 554.5h1M447 557.5h1M447 561.5h1M447 565.5h1M447 568.5h1M447 572.5h1M447 575.5h1M447 579.5h1M447 582.5h1M447 586.5h1M447 589.5h1M447 593.5h1M447 596.5h1M447 600.5h1M447 603.5h1M447 607.5h1M447 611.5h1M447 614.5h1M447 618.5h1M447 621.5h1M447 625.5h1M447 628.5h1M447 632.5h1M447 635.5h1M447 639.5h1M447 642.5h1M447 646.5h1M447 649.5h1M447 653.5h1M447 657.5h1M447 660.5h1M447 664.5h1M447 667.5h1M447 671.5h1M447 674.5h1M447 678.5h1M447 681.5h1M447 685.5h1M447 688.5h1M447 692.5h1M447 696.5h1M447 699.5h1M447 703.5h1M447 706.5h1M447 710.5h1M447 713.5h1M447 717.5h1M447 720.5h1M447 724.5h1M447 727.5h1M574 200.5h1M574 204.5h1M574 207.5h1M574 211.5h1M574 214.5h1M574 218.5h1M574 221.5h1M574 225.5h1M574 228.5h1M574 232.5h1M574 235.5h1M574 239.5h1M574 242.5h1M574 246.5h1M574 249.5h1M574 253.5h1M574 256.5h1M574 260.5h1M574 263.5h1M574 267.5h1M574 270.5h1M574 274.5h1M574 277.5h1M574 281.5h1M574 284.5h1M574 288.5h1M574 291.5h1M574 295.5h1M574 298.5h1M574 302.5h1M574 305.5h1M574 309.5h1M574 312.5h1M574 316.5h1M574 319.5h1M574 323.5h1M574 326.5h1M574 330.5h1M574 333.5h1M574 337.5h1M574 340.5h1M574 344.5h1M574 348.5h1M574 351.5h1M574 355.5h1M574 358.5h1M574 362.5h1M574 365.5h1M574 369.5h1M574 372.5h1M574 376.5h1M574 379.5h1M574 383.5h1M574 387.5h1M574 390.5h1M574 394.5h1M574 397.5h1M574 401.5h1M574 404.5h1M574 408.5h1M574 411.5h1M574 415.5h1M574 418.5h1M574 422.5h1M574 425.5h1M574 429.5h1M574 432.5h1M574 436.5h1M574 439.5h1M574 443.5h1M574 446.5h1M574 450.5h1M574 453.5h1M574 457.5h1M574 460.5h1M574 464.5h1M574 467.5h1M574 471.5h1M574 474.5h1M574 478.5h1M574 481.5h1M574 485.5h1M574 488.5h1M574 492.5h1M574 495.5h1M574 499.5h1M574 502.5h1M574 506.5h1M574 509.5h1M574 513.5h1M574 516.5h1M574 520.5h1M574 523.5h1M574 527.5h1M574 530.5h1M574 534.5h1M574 537.5h1M574 541.5h1M574 544.5h1M574 548.5h1M574 554.5h1M574 557.5h1M574 561.5h1M574 565.5h1M574 568.5h1M574 572.5h1M574 575.5h1M574 579.5h1M574 582.5h1M574 586.5h1M574 589.5h1M574 593.5h1M574 596.5h1M574 600.5h1M574 603.5h1M574 607.5h1M574 611.5h1M574 614.5h1M574 618.5h1M574 621.5h1M574 625.5h1M574 628.5h1M574 632.5h1M574 635.5h1M574 639.5h1M574 642.5h1M574 646.5h1M574 649.5h1M574 653.5h1M574 657.5h1M574 660.5h1M574 664.5h1M574 667.5h1M574 671.5h1M574 674.5h1M574 678.5h1M574 681.5h1M574 685.5h1M574 688.5h1M574 692.5h1M574 696.5h1M574 699.5h1M574 703.5h1M574 706.5h1M574 710.5h1M574 713.5h1M574 717.5h1M574 720.5h1M574 724.5h1M574 727.5h1M701 200.5h1M701 204.5h1M701 207.5h1M701 211.5h1M701 214.5h1M701 218.5h1M701 221.5h1M701 225.5h1M701 228.5h1M701 232.5h1M701 235.5h1M701 239.5h1M701 242.5h1M701 246.5h1M701 249.5h1M701 253.5h1M701 256.5h1M701 260.5h1M701 263.5h1M701 267.5h1M701 270.5h1M701 274.5h1M701 277.5h1M701 281.5h1M701 284.5h1M701 288.5h1M701 291.5h1M701 295.5h1M701 298.5h1M701 302.5h1M701 305.5h1M701 309.5h1M701 312.5h1M701 316.5h1M701 319.5h1M701 323.5h1M701 326.5h1M701 330.5h1M701 333.5h1M701 337.5h1M701 340.5h1M701 344.5h1M701 348.5h1M701 351.5h1M701 355.5h1M701 358.5h1M701 362.5h1M701 365.5h1M701 369.5h1M701 372.5h1M701 376.5h1M701 379.5h1M701 383.5h1M701 387.5h1M701 390.5h1M701 394.5h1M701 397.5h1M701 401.5h1M701 404.5h1M701 408.5h1M701 411.5h1M701 415.5h1M701 418.5h1M701 422.5h1M701 425.5h1M701 429.5h1M701 432.5h1M701 436.5h1M701 439.5h1M701 443.5h1M701 446.5h1M701 450.5h1M701 453.5h1M701 457.5h1M701 460.5h1M701 464.5h1M701 467.5h1M701 471.5h1M701 474.5h1M701 478.5h1M701 481.5h1M701 485.5h1M701 488.5h1M701 492.5h1M701 495.5h1M701 499.5h1M701 502.5h1M701 506.5h1M701 509.5h1M701 513.5h1M701 516.5h1M701 520.5h1M701 523.5h1M701 527.5h1M701 530.5h1M701 534.5h1M701 537.5h1M701 541.5h1M701 544.5h1M701 548.5h1M701 554.5h1M701 557.5h1M701 561.5h1M701 565.5h1M701 568.5h1M701 572.5h1M701 575.5h1M701 579.5h1M701 582.5h1M701 586.5h1M701 589.5h1M701 593.5h1M701 596.5h1M701 600.5h1M701 603.5h1M701 607.5h1M701 611.5h1M701 614.5h1M701 618.5h1M701 621.5h1M701 625.5h1M701 628.5h1M701 632.5h1M701 635.5h1M701 639.5h1M701 642.5h1M701 646.5h1M701 649.5h1M701 653.5h1M701 657.5h1M701 660.5h1M701 664.5h1M701 667.5h1M701 671.5h1M701 674.5h1M701 678.5h1M701 681.5h1M701 685.5h1M701 688.5h1M701 692.5h1M701 696.5h1M701 699.5h1M701 703.5h1M701 706.5h1M701 710.5h1M701 713.5h1M701 717.5h1M701 720.5h1M701 724.5h1M701 727.5h1M828 200.5h1M828 204.5h1M828 207.5h1M828 211.5h1M828 214.5h1M828 218.5h1M828 221.5h1M828 225.5h1M828 228.5h1M828 232.5h1M828 235.5h1M828 239.5h1M828 242.5h1M828 246.5h1M828 249.5h1M828 253.5h1M828 256.5h1M828 260.5h1M828 263.5h1M828 267.5h1M828 270.5h1M828 274.5h1M828 277.5h1M828 281.5h1M828 284.5h1M828 288.5h1M828 291.5h1M828 295.5h1M828 298.5h1M828 302.5h1M828 305.5h1M828 309.5h1M828 312.5h1M828 316.5h1M828 319.5h1M828 323.5h1M828 326.5h1M828 330.5h1M828 333.5h1M828 337.5h1M828 340.5h1M828 344.5h1M828 348.5h1M828 351.5h1M828 355.5h1M828 358.5h1M828 362.5h1M828 365.5h1M828 369.5h1M828 372.5h1M828 376.5h1M828 379.5h1M828 383.5h1M828 387.5h1M828 390.5h1M828 394.5h1M828 397.5h1M828 401.5h1M828 404.5h1M828 408.5h1M828 411.5h1M828 415.5h1M828 418.5h1M828 422.5h1M828 425.5h1M828 429.5h1M828 432.5h1M828 436.5h1M828 439.5h1M828 443.5h1M828 446.5h1M828 450.5h1M828 453.5h1M828 457.5h1M828 460.5h1M828 464.5h1M828 467.5h1M828 471.5h1M828 474.5h1M828 478.5h1M828 481.5h1M828 485.5h1M828 488.5h1M828 492.5h1M828 495.5h1M828 499.5h1M828 502.5h1M828 506.5h1M828 509.5h1M828 513.5h1M828 516.5h1M828 520.5h1M828 523.5h1M828 527.5h1M828 530.5h1M828 534.5h1M828 537.5h1M828 541.5h1M828 544.5h1M828 548.5h1M828 554.5h1M828 557.5h1M828 561.5h1M828 565.5h1M828 568.5h1M828 572.5h1M828 575.5h1M828 579.5h1M828 582.5h1M828 586.5h1M828 589.5h1M828 593.5h1M828 596.5h1M828 600.5h1M828 603.5h1M828 607.5h1M828 611.5h1M828 614.5h1M828 618.5h1M828 621.5h1M828 625.5h1M828 628.5h1M828 632.5h1M828 635.5h1M828 639.5h1M828 642.5h1M828 646.5h1M828 649.5h1M828 653.5h1M828 657.5h1M828 660.5h1M828 664.5h1M828 667.5h1M828 671.5h1M828 674.5h1M828 678.5h1M828 681.5h1M828 685.5h1M828 688.5h1M828 692.5h1M828 696.5h1M828 699.5h1M828 703.5h1M828 706.5h1M828 710.5h1M828 713.5h1M828 717.5h1M828 720.5h1M828 724.5h1M828 727.5h1M955 200.5h1M955 204.5h1M955 207.5h1M955 211.5h1M955 214.5h1M955 218.5h1M955 221.5h1M955 225.5h1M955 228.5h1M955 232.5h1M955 235.5h1M955 239.5h1M955 242.5h1M955 246.5h1M955 249.5h1M955 253.5h1M955 256.5h1M955 260.5h1M955 263.5h1M955 267.5h1M955 270.5h1M955 274.5h1M955 277.5h1M955 281.5h1M955 284.5h1M955 288.5h1M955 291.5h1M955 295.5h1M955 298.5h1M955 302.5h1M955 305.5h1M955 309.5h1M955 312.5h1M955 316.5h1M955 319.5h1M955 323.5h1M955 326.5h1M955 330.5h1M955 333.5h1M955 337.5h1M955 340.5h1M955 344.5h1M955 348.5h1M955 351.5h1M955 355.5h1M955 358.5h1M955 362.5h1M955 365.5h1M955 369.5h1M955 372.5h1M955 376.5h1M955 379.5h1M955 383.5h1M955 387.5h1M955 390.5h1M955 394.5h1M955 397.5h1M955 401.5h1M955 404.5h1M955 408.5h1M955 411.5h1M955 415.5h1M955 418.5h1M955 422.5h1M955 425.5h1M955 429.5h1M955 432.5h1M955 436.5h1M955 439.5h1M955 443.5h1M955 446.5h1M955 450.5h1M955 453.5h1M955 457.5h1M955 460.5h1M955 464.5h1M955 467.5h1M955 471.5h1M955 474.5h1M955 478.5h1M955 481.5h1M955 485.5h1M955 488.5h1M955 492.5h1M955 495.5h1M955 499.5h1M955 502.5h1M955 506.5h1M955 509.5h1M955 513.5h1M955 516.5h1M955 520.5h1M955 523.5h1M955 527.5h1M955 530.5h1M955 534.5h1M955 537.5h1M955 541.5h1M955 544.5h1M955 548.5h1M955 554.5h1M955 557.5h1M955 561.5h1M955 565.5h1M955 568.5h1M955 572.5h1M955 575.5h1M955 579.5h1M955 582.5h1M955 586.5h1M955 589.5h1M955 593.5h1M955 596.5h1M955 600.5h1M955 603.5h1M955 607.5h1M955 611.5h1M955 614.5h1M955 618.5h1M955 621.5h1M955 625.5h1M955 628.5h1M955 632.5h1M955 635.5h1M955 639.5h1M955 642.5h1M955 646.5h1M955 649.5h1M955 653.5h1M955 657.5h1M955 660.5h1M955 664.5h1M955 667.5h1M955 671.5h1M955 674.5h1M955 678.5h1M955 681.5h1M955 685.5h1M955 688.5h1M955 692.5h1M955 696.5h1M955 699.5h1M955 703.5h1M955 706.5h1M955 710.5h1M955 713.5h1M955 717.5h1M955 720.5h1M955 724.5h1M955 727.5h1M1082 200.5h1M1082 204.5h1M1082 207.5h1M1082 211.5h1M1082 214.5h1M1082 218.5h1M1082 221.5h1M1082 225.5h1M1082 228.5h1M1082 232.5h1M1082 235.5h1M1082 239.5h1M1082 242.5h1M1082 246.5h1M1082 249.5h1M1082 253.5h1M1082 256.5h1M1082 260.5h1M1082 263.5h1M1082 267.5h1M1082 270.5h1M1082 274.5h1M1082 277.5h1M1082 281.5h1M1082 284.5h1M1082 288.5h1M1082 291.5h1M1082 295.5h1M1082 298.5h1M1082 302.5h1M1082 305.5h1M1082 309.5h1M1082 312.5h1M1082 316.5h1M1082 319.5h1M1082 323.5h1M1082 326.5h1M1082 330.5h1M1082 333.5h1M1082 337.5h1M1082 340.5h1M1082 344.5h1M1082 348.5h1M1082 351.5h1M1082 355.5h1M1082 358.5h1M1082 362.5h1M1082 365.5h1M1082 369.5h1M1082 372.5h1M1082 376.5h1M1082 379.5h1M1082 383.5h1M1082 387.5h1M1082 390.5h1M1082 394.5h1M1082 397.5h1M1082 401.5h1M1082 404.5h1M1082 408.5h1M1082 411.5h1M1082 415.5h1M1082 418.5h1M1082 422.5h1M1082 425.5h1M1082 429.5h1M1082 432.5h1M1082 436.5h1M1082 439.5h1M1082 443.5h1M1082 446.5h1M1082 450.5h1M1082 453.5h1M1082 457.5h1M1082 460.5h1M1082 464.5h1M1082 467.5h1M1082 471.5h1M1082 474.5h1M1082 478.5h1M1082 481.5h1M1082 485.5h1M1082 488.5h1M1082 492.5h1M1082 495.5h1M1082 499.5h1M1082 502.5h1M1082 506.5h1M1082 509.5h1M1082 513.5h1M1082 516.5h1M1082 520.5h1M1082 523.5h1M1082 527.5h1M1082 530.5h1M1082 534.5h1M1082 537.5h1M1082 541.5h1M1082 544.5h1M1082 548.5h1M1082 554.5h1M1082 557.5h1M1082 561.5h1M1082 565.5h1M1082 568.5h1M1082 572.5h1M1082 575.5h1M1082 579.5h1M1082 582.5h1M1082 586.5h1M1082 589.5h1M1082 593.5h1M1082 596.5h1M1082 600.5h1M1082 603.5h1M1082 607.5h1M1082 611.5h1M1082 614.5h1M1082 618.5h1M1082 621.5h1M1082 625.5h1M1082 628.5h1M1082 632.5h1M1082 635.5h1M1082 639.5h1M1082 642.5h1M1082 646.5h1M1082 649.5h1M1082 653.5h1M1082 657.5h1M1082 660.5h1M1082 664.5h1M1082 667.5h1M1082 671.5h1M1082 674.5h1M1082 678.5h1M1082 681.5h1M1082 685.5h1M1082 688.5h1M1082 692.5h1M1082 696.5h1M1082 699.5h1M1082 703.5h1M1082 706.5h1M1082 710.5h1M1082 713.5h1M1082 717.5h1M1082 720.5h1M1082 724.5h1M1082 727.5h1M1209 200.5h1M1209 204.5h1M1209 207.5h1M1209 211.5h1M1209 214.5h1M1209 218.5h1M1209 221.5h1M1209 225.5h1M1209 228.5h1M1209 232.5h1M1209 235.5h1M1209 239.5h1M1209 242.5h1M1209 246.5h1M1209 249.5h1M1209 253.5h1M1209 256.5h1M1209 260.5h1M1209 263.5h1M1209 267.5h1M1209 270.5h1M1209 274.5h1M1209 277.5h1M1209 281.5h1M1209 284.5h1M1209 288.5h1M1209 291.5h1M1209 295.5h1M1209 298.5h1M1209 302.5h1M1209 305.5h1M1209 309.5h1M1209 312.5h1M1209 316.5h1M1209 319.5h1M1209 323.5h1M1209 326.5h1M1209 330.5h1M1209 333.5h1M1209 337.5h1M1209 340.5h1M1209 344.5h1M1209 348.5h1M1209 351.5h1M1209 355.5h1M1209 358.5h1M1209 362.5h1M1209 365.5h1M1209 369.5h1M1209 372.5h1M1209 376.5h1M1209 379.5h1M1209 383.5h1M1209 387.5h1M1209 390.5h1M1209 394.5h1M1209 397.5h1M1209 401.5h1M1209 404.5h1M1209 408.5h1M1209 411.5h1M1209 415.5h1M1209 418.5h1M1209 422.5h1M1209 425.5h1M1209 429.5h1M1209 432.5h1M1209 436.5h1M1209 439.5h1M1209 443.5h1M1209 446.5h1M1209 450.5h1M1209 453.5h1M1209 457.5h1M1209 460.5h1M1209 464.5h1M1209 467.5h1M1209 471.5h1M1209 474.5h1M1209 478.5h1M1209 481.5h1M1209 485.5h1M1209 488.5h1M1209 492.5h1M1209 495.5h1M1209 499.5h1M1209 502.5h1M1209 506.5h1M1209 509.5h1M1209 513.5h1M1209 516.5h1M1209 520.5h1M1209 523.5h1M1209 527.5h1M1209 530.5h1M1209 534.5h1M1209 537.5h1M1209 541.5h1M1209 544.5h1M1209 548.5h1M1209 554.5h1M1209 557.5h1M1209 561.5h1M1209 565.5h1M1209 568.5h1M1209 572.5h1M1209 575.5h1M1209 579.5h1M1209 582.5h1M1209 586.5h1M1209 589.5h1M1209 593.5h1M1209 596.5h1M1209 600.5h1M1209 603.5h1M1209 607.5h1M1209 611.5h1M1209 614.5h1M1209 618.5h1M1209 621.5h1M1209 625.5h1M1209 628.5h1M1209 632.5h1M1209 635.5h1M1209 639.5h1M1209 642.5h1M1209 646.5h1M1209 649.5h1M1209 653.5h1M1209 657.5h1M1209 660.5h1M1209 664.5h1M1209 667.5h1M1209 671.5h1M1209 674.5h1M1209 678.5h1M1209 681.5h1M1209 685.5h1M1209 688.5h1M1209 692.5h1M1209 696.5h1M1209 699.5h1M1209 703.5h1M1209 706.5h1M1209 710.5h1M1209 713.5h1M1209 717.5h1M1209 720.5h1M1209 724.5h1M1209 727.5h1" stroke="#9c9c9c" stroke-width="1" fill="none" opacity="1" shape-rendering="crispEdges"/>
<rect x="4" y="373" width="1271.6" height="1.4" fill="#9a9a9a"/>
<rect x="4" y="549.8" width="1271.6" height="1.4" fill="#9a9a9a"/>
<line x1="397.5" y1="198" x2="397.5" y2="375" stroke="#1f7a1f" stroke-width="1.6"/>
<line x1="397.5" y1="198.0" x2="397.5" y2="375.0" stroke="#e8e030" stroke-width="1" stroke-dasharray="3.5 2.5"/>
<line x1="410.8" y1="198.0" x2="410.8" y2="375.0" stroke="#1f8a2a" stroke-width="1" stroke-dasharray="3.5 2.5"/>
<line x1="632.7" y1="198.0" x2="632.7" y2="372.5" stroke="#e02020" stroke-width="1.3" stroke-dasharray="3.8 2.8"/>
<line x1="696.7" y1="198.0" x2="696.7" y2="372.5" stroke="#e02020" stroke-width="1.3" stroke-dasharray="3.8 2.8"/>
<line x1="880.7" y1="198.0" x2="880.7" y2="373.0" stroke="#a8a838" stroke-width="1" stroke-dasharray="3.5 2.5"/>
<line x1="193.5" y1="224.0" x2="193.5" y2="728.0" stroke="#ababab" stroke-width="1.2" stroke-dasharray="5.3 2.3"/>
<line x1="33" y1="341.2" x2="1240" y2="341.2" stroke="#8c8c8c" stroke-width="1.3" stroke-dasharray="4 3.2"/>
<line x1="33" y1="523.5" x2="1243" y2="523.5" stroke="#a2a2a2" stroke-width="1.1" stroke-dasharray="4 3.2"/>
<line x1="33" y1="703.4" x2="1246" y2="703.4" stroke="#a2a2a2" stroke-width="1.1" stroke-dasharray="4 3.2"/>
<polyline points="4.0,347.2 5.0,347.3 6.0,347.1 7.0,347.0 7.2,347.2 8.0,347.3 9.0,347.2 10.0,347.3 11.0,347.4 12.0,347.3 13.0,347.3 13.3,347.3 14.0,347.2 14.2,347.1 15.0,347.2 15.1,347.4 16.0,347.3 17.0,347.2 17.4,347.1 18.0,347.2 19.0,347.3 19.7,347.5 20.0,347.7 21.0,347.5 21.9,346.8 22.0,346.8 23.0,347.2 23.9,347.4 24.0,347.5 25.0,347.8 26.0,347.8 26.4,347.5 27.0,347.6 28.0,348.0 29.0,348.0 30.0,347.8 31.0,347.4 32.0,347.3 33.0,347.6 33.2,347.6 34.0,347.4 35.0,347.5 36.0,347.6 37.0,347.6 38.0,347.7 39.0,347.8 39.4,347.8 40.0,347.8 41.0,348.0 42.0,348.1 43.0,348.0 44.0,347.9 45.0,348.0 46.0,348.0 46.8,348.0 47.0,347.9 48.0,348.1 49.0,348.0 50.0,347.8 51.0,347.9 52.0,348.1 53.0,348.1 54.0,347.9 55.0,347.9 56.0,348.1 57.0,348.2 58.0,348.3 59.0,348.2 60.0,348.0 61.0,348.3 62.0,348.5 63.0,348.3 64.0,348.2 65.0,348.4 66.0,348.6 66.4,348.5 67.0,348.3 68.0,348.1 69.0,348.2 70.0,348.4 71.0,348.6 72.0,348.4 73.0,348.1 74.0,348.2 75.0,348.7 76.0,348.7 77.0,348.5 78.0,348.6 79.0,348.7 80.0,348.8 81.0,348.9 82.0,348.8 83.0,348.7 84.0,348.7 85.0,348.7 86.0,348.4 87.0,348.5 88.0,348.6 89.0,348.6 90.0,348.7 91.0,348.8 92.0,348.9 93.0,349.0 94.0,349.1 95.0,349.2 96.0,349.0 97.0,348.7 98.0,348.8 99.0,349.2 100.0,349.1 101.0,348.9 102.0,348.9 103.0,349.0 104.0,349.1 105.0,349.0 105.7,348.8 106.0,348.8 107.0,348.8 108.0,348.8 109.0,349.0 110.0,349.0 111.0,348.4 112.0,348.2 113.0,348.9 114.0,349.2 115.0,348.6 116.0,348.4 117.0,348.6 118.0,348.5 119.0,348.4 120.0,348.5 121.0,348.5 122.0,348.4 123.0,348.3 124.0,348.1 125.0,347.9 126.0,347.8 127.0,347.7 128.0,347.6 129.0,347.4 130.0,347.4 131.0,347.7 132.0,347.5 133.0,347.3 134.0,347.3 135.0,346.7 136.0,346.2 137.0,345.8 138.0,345.3 139.0,344.7 140.0,344.3 141.0,343.7 142.0,342.9 143.0,341.8 144.0,340.9 145.0,339.9 146.0,338.5 147.0,337.1 148.0,335.8 149.0,334.9 150.0,334.0 151.0,332.6 152.0,331.3 153.0,330.3 154.0,329.3 155.0,328.4 156.0,327.5 157.0,326.2 158.0,324.9 159.0,323.9 160.0,323.0 161.0,322.0 162.0,321.0 163.0,319.9 164.0,318.8 165.0,317.9 166.0,316.9 166.4,316.4 167.0,316.1 168.0,315.4 169.0,314.0 170.0,312.6 171.0,311.5 172.0,310.8 173.0,309.4 174.0,307.6 175.0,306.4 176.0,305.2 177.0,304.0 178.0,302.9 179.0,301.9 180.0,300.5 181.0,298.4 182.0,296.0 183.0,294.2 184.0,292.5 185.0,290.9 186.0,289.1 187.0,287.1 188.0,283.9 189.0,280.9 190.0,277.4 191.0,273.5 192.0,269.9 193.0,266.4 194.0,262.8 195.0,259.3 196.0,255.8 196.4,254.1 197.0,251.9 198.0,248.3 199.0,244.5 200.0,240.8 200.4,239.3 201.0,237.1 202.0,233.6 203.0,230.2 203.4,228.9 204.0,226.9 205.0,223.5 206.0,220.4 206.4,219.2 207.0,218.1 207.6,220.1 208.0,223.3 209.0,238.7 210.0,262.1 210.6,276.1 211.0,285.4 212.0,307.0 213.0,328.9 214.0,339.8 214.2,340.7 215.0,345.5 216.0,349.9 217.0,351.8 217.2,352.1 218.0,353.0 219.0,353.4 220.0,353.7 220.9,353.9 221.0,354.0 222.0,353.9 222.6,353.9 223.0,354.1 224.0,353.9 225.0,353.7 226.0,353.9 227.0,354.0 228.0,353.6 229.0,353.3 230.0,353.1 231.0,352.8 232.0,352.4 233.0,352.2 234.0,351.9 235.0,351.6 236.0,351.6 236.4,351.6 237.0,351.4 238.0,351.1 239.0,350.9 240.0,350.5 241.0,350.4 242.0,350.5 243.0,350.5 244.0,350.5 245.0,350.7 246.0,350.7 247.0,350.4 248.0,350.4 249.0,350.3 250.0,350.3 251.0,350.7 252.0,350.5 253.0,350.2 254.0,350.4 255.0,350.2 256.0,350.0 257.0,350.2 258.0,350.4 259.0,350.1 260.0,350.0 261.0,350.1 262.0,350.0 263.0,350.1 264.0,350.1 265.0,349.8 266.0,349.7 267.0,349.8 268.0,349.9 269.0,350.1 270.0,350.2 271.0,350.2 272.0,350.1 273.0,350.0 274.0,349.9 275.0,350.2 276.0,350.3 277.0,350.0 278.0,349.8 279.0,349.8 280.0,349.7 281.0,349.7 282.0,349.8 283.0,350.0 284.0,350.1 285.0,350.0 286.0,350.0 286.4,350.0 287.0,350.0 288.0,350.0 289.0,349.7 290.0,349.5 291.0,349.6 292.0,349.6 293.0,349.5 294.0,349.5 295.0,349.6 296.0,349.8 297.0,349.8 298.0,349.5 299.0,349.4 300.0,349.5 301.0,349.5 302.0,349.4 303.0,349.4 304.0,349.5 305.0,349.7 306.0,350.0 307.0,350.0 308.0,349.9 309.0,349.7 310.0,349.6 311.0,349.7 312.0,349.8 313.0,350.0 314.0,349.9 315.0,349.5 316.0,349.5 317.0,349.6 318.0,349.6 319.0,349.5 320.0,349.6 321.0,349.8 322.0,349.9 323.0,349.8 324.0,349.6 325.0,349.7 326.0,349.9 327.0,349.7 328.0,349.6 329.0,349.8 330.0,350.0 331.0,350.0 332.0,349.9 333.0,349.8 334.0,349.7 335.0,349.8 336.0,349.8 337.0,350.0 338.0,350.0 339.0,349.8 340.0,349.8 341.0,350.0 342.0,350.1 343.0,350.0 344.0,349.7 345.0,349.9 346.0,350.2 346.4,350.2 347.0,349.7 348.0,349.7 349.0,349.9 350.0,349.6 351.0,349.6 352.0,350.0 353.0,350.1 354.0,349.9 355.0,349.9 356.0,350.1 357.0,350.2 358.0,350.1 359.0,350.0 360.0,349.8 361.0,349.8 362.0,350.0 363.0,350.2 364.0,350.1 365.0,350.0 366.0,350.2 367.0,350.3 368.0,350.1 369.0,350.0 370.0,349.9 371.0,349.8 372.0,350.1 373.0,350.2 374.0,350.2 375.0,350.2 376.0,350.0 377.0,350.0 378.0,350.4 379.0,350.5 380.0,350.3 381.0,350.4 382.0,350.7 383.0,350.7 384.0,350.6 385.0,350.2 386.0,350.1 387.0,350.3 388.0,350.4 389.0,350.3 389.3,350.4 390.0,350.8 391.0,351.0 392.0,351.0 393.0,351.3 394.0,351.5 395.0,352.0 396.0,352.5 397.0,353.1 398.0,335.1 399.0,314.6 400.0,301.0 401.0,307.5 402.0,312.8 403.0,318.0 404.0,323.4 405.0,326.1 406.0,328.0 407.0,330.1 408.0,332.1 409.0,334.2 409.3,334.9 410.0,336.7 411.0,338.9 412.0,340.6 413.0,342.2 414.0,343.4 415.0,344.5 416.0,345.3 417.0,345.6 418.0,345.5 419.0,345.3 420.0,345.2 421.0,345.3 422.0,345.7 423.0,345.9 423.3,345.7 424.0,345.4 425.0,345.4 426.0,345.3 427.0,345.3 428.0,345.4 429.0,345.8 430.0,346.0 431.0,345.9 431.2,346.1 432.0,346.1 433.0,346.0 434.0,346.1 435.0,346.0 436.0,345.8 437.0,345.8 438.0,345.8 439.0,345.8 440.0,345.8 441.0,345.9 442.0,345.9 443.0,345.8 443.7,345.7 444.0,345.7 445.0,346.0 446.0,346.2 447.0,346.2 448.0,346.2 449.0,346.2 450.0,346.0 451.0,346.1 452.0,346.3 453.0,346.5 454.0,346.6 455.0,346.8 456.0,346.6 457.0,346.6 457.3,346.6 458.0,346.3 459.0,346.1 460.0,346.1 461.0,346.4 462.0,346.7 463.0,346.6 464.0,346.5 465.0,346.5 466.0,346.4 467.0,346.2 468.0,346.4 468.6,346.5 469.0,346.6 470.0,346.8 471.0,346.5 472.0,346.2 473.0,346.5 474.0,346.8 475.0,346.8 476.0,346.9 476.5,347.0 477.0,346.8 478.0,346.6 479.0,346.8 480.0,347.0 481.0,346.8 482.0,346.6 483.0,346.9 483.3,347.1 484.0,347.2 485.0,347.1 486.0,347.0 487.0,347.2 488.0,347.1 489.0,347.0 490.0,347.5 490.1,347.6 491.0,347.2 492.0,347.2 493.0,347.3 494.0,346.9 494.9,346.6 495.0,346.7 496.0,347.0 496.2,347.1 497.0,347.4 497.1,347.3 498.0,347.1 499.0,347.5 500.0,347.9 500.3,347.8 501.0,347.7 502.0,347.6 502.6,347.5 503.0,347.4 504.0,347.5 504.8,347.6 505.0,347.7 506.0,347.6 506.8,347.3 507.0,347.5 508.0,347.6 509.0,347.4 509.3,347.2 510.0,347.2 511.0,347.3 512.0,347.8 513.0,348.0 514.0,347.9 515.0,347.8 516.0,347.7 516.1,347.7 517.0,347.7 518.0,347.9 519.0,348.1 520.0,348.0 521.0,347.8 522.0,347.8 522.3,348.0 523.0,348.2 524.0,347.9 525.0,347.6 526.0,348.0 527.0,348.4 528.0,348.3 529.0,348.2 529.7,347.9 530.0,347.4 531.0,347.4 532.0,347.6 533.0,347.9 534.0,348.2 535.0,348.2 536.0,348.2 537.0,348.3 538.0,348.1 539.0,348.1 540.0,348.2 541.0,347.9 542.0,347.5 543.0,347.8 544.0,347.9 545.0,347.7 546.0,347.9 547.0,348.1 548.0,347.9 549.0,347.9 549.3,348.1 550.0,348.4 551.0,348.6 552.0,348.5 553.0,348.1 554.0,348.2 555.0,348.7 556.0,349.0 557.0,348.8 558.0,348.8 559.0,348.9 560.0,348.7 561.0,348.4 562.0,348.3 563.0,348.6 564.0,348.9 565.0,348.6 566.0,348.4 567.0,348.4 568.0,348.7 569.0,348.9 570.0,348.9 571.0,349.0 572.0,349.0 573.0,349.1 574.0,349.3 575.0,349.1 576.0,348.8 577.0,348.7 578.0,348.7 579.0,348.9 580.0,349.2 581.0,349.6 582.0,349.6 583.0,349.1 584.0,349.1 585.0,349.1 586.0,348.7 587.0,348.7 588.0,348.9 588.6,348.8 589.0,348.7 590.0,348.8 591.0,348.9 592.0,348.9 593.0,348.9 594.0,348.9 595.0,348.9 596.0,348.9 597.0,348.5 598.0,348.2 599.0,348.0 600.0,348.1 601.0,348.5 602.0,348.8 603.0,348.7 604.0,348.3 605.0,348.1 606.0,348.0 607.0,348.0 608.0,347.8 609.0,347.6 610.0,347.8 611.0,347.7 612.0,347.4 613.0,347.1 614.0,347.1 615.0,347.2 616.0,347.0 617.0,346.7 618.0,346.7 619.0,346.6 620.0,346.0 621.0,345.5 622.0,344.6 623.0,343.9 624.0,343.6 625.0,343.0 626.0,341.7 627.0,340.8 628.0,339.7 629.0,338.4 630.0,337.3 631.0,336.0 632.0,334.8 633.0,333.6 634.0,332.4 635.0,331.3 636.0,330.3 637.0,329.3 638.0,328.1 639.0,326.8 640.0,325.8 641.0,324.8 642.0,323.4 643.0,322.5 644.0,322.0 645.0,321.2 646.0,320.1 647.0,319.0 648.0,317.9 649.0,316.7 649.3,316.1 650.0,315.4 651.0,314.6 652.0,313.5 653.0,312.0 654.0,310.4 655.0,309.3 656.0,308.6 657.0,307.7 658.0,306.4 659.0,304.9 660.0,303.8 661.0,303.0 662.0,301.9 663.0,300.4 664.0,298.6 665.0,296.4 666.0,294.3 667.0,292.4 668.0,290.5 669.0,288.7 670.0,287.0 671.0,283.8 672.0,280.5 673.0,277.0 674.0,273.3 675.0,269.7 676.0,266.0 677.0,262.3 678.0,258.7 679.0,255.1 679.3,254.4 680.0,252.0 681.0,248.3 682.0,244.4 683.0,240.6 683.3,239.3 684.0,236.7 685.0,233.5 686.0,230.1 686.3,228.9 686.9,226.8 687.0,226.4 687.9,223.3 688.0,223.0 689.0,219.8 689.3,219.0 690.0,218.6 690.5,220.6 691.0,225.0 692.0,241.3 693.0,264.4 693.5,276.0 694.0,287.5 695.0,309.5 696.0,331.4 697.0,340.5 697.1,340.8 698.0,346.4 699.0,350.0 700.0,351.8 700.1,352.1 701.0,353.1 701.9,353.4 702.0,353.4 703.0,353.9 703.8,353.8 704.0,353.8 705.0,354.1 705.5,354.3 706.0,354.2 707.0,353.8 708.0,353.6 709.0,354.1 710.0,354.1 711.0,353.4 712.0,353.0 713.0,352.7 714.0,352.4 715.0,352.0 716.0,351.7 717.0,351.5 718.0,351.3 719.0,351.5 719.3,351.8 720.0,351.6 721.0,351.3 722.0,350.9 723.0,350.5 724.0,350.5 725.0,350.8 726.0,350.9 727.0,350.8 728.0,350.5 729.0,350.4 730.0,350.7 731.0,351.0 732.0,350.9 733.0,350.4 734.0,350.0 735.0,350.1 736.0,350.4 737.0,350.3 738.0,350.1 739.0,349.9 740.0,349.5 741.0,349.7 742.0,350.2 743.0,350.3 744.0,350.0 745.0,349.9 746.0,350.2 747.0,350.3 748.0,350.0 749.0,349.9 750.0,350.0 751.0,350.0 752.0,350.0 753.0,349.9 754.0,349.8 755.0,349.8 756.0,349.8 757.0,349.8 758.0,350.0 759.0,350.0 760.0,349.8 761.0,349.9 762.0,350.0 763.0,349.9 764.0,349.9 765.0,350.0 766.0,350.0 767.0,349.9 768.0,349.8 769.0,349.6 769.3,349.9 770.0,350.2 771.0,349.9 772.0,349.6 773.0,349.6 774.0,349.6 775.0,349.6 776.0,349.6 777.0,349.6 778.0,349.9 779.0,349.9 780.0,349.9 781.0,350.0 782.0,350.1 783.0,349.9 784.0,349.5 785.0,349.4 786.0,349.3 787.0,349.5 788.0,349.9 789.0,350.1 790.0,350.0 791.0,349.8 792.0,349.8 793.0,349.9 794.0,350.1 795.0,350.1 796.0,350.2 797.0,350.4 798.0,350.1 799.0,349.7 800.0,349.9 801.0,350.0 802.0,349.9 803.0,349.8 804.0,350.0 805.0,350.1 806.0,350.2 807.0,350.1 808.0,349.6 809.0,349.4 810.0,349.5 811.0,349.7 812.0,349.8 813.0,349.8 814.0,349.7 815.0,349.9 816.0,350.0 817.0,349.7 818.0,349.7 819.0,349.8 820.0,349.8 821.0,349.9 822.0,350.3 823.0,350.3 824.0,350.0 825.0,350.0 826.0,350.2 827.0,350.1 828.0,349.7 829.0,349.7 829.3,349.9 830.0,350.2 831.0,350.1 832.0,349.7 833.0,349.5 834.0,349.7 835.0,349.6 836.0,349.6 837.0,349.8 838.0,349.9 839.0,350.1 840.0,350.0 841.0,349.6 842.0,349.5 843.0,349.6 844.0,349.8 845.0,350.0 846.0,350.0 847.0,350.2 848.0,350.0 849.0,349.8 850.0,350.0 851.0,350.1 852.0,349.9 853.0,349.9 854.0,350.0 855.0,350.3 856.0,350.3 857.0,350.3 858.0,350.3 859.0,350.1 860.0,350.3 861.0,350.6 862.0,350.6 863.0,350.6 864.0,350.5 865.0,350.3 866.0,350.3 867.0,350.4 868.0,350.3 869.0,350.2 870.0,350.2 871.0,350.2 872.0,350.5 872.2,350.7 873.0,350.6 874.0,350.6 875.0,351.0 876.0,351.1 877.0,351.2 878.0,352.0 879.0,352.8 880.0,352.0 881.0,332.8 882.0,313.5 883.0,301.8 884.0,307.9 885.0,312.9 886.0,318.2 887.0,323.6 888.0,326.0 889.0,328.2 890.0,330.2 891.0,332.4 892.0,334.8 892.2,335.1 893.0,337.0 894.0,339.1 895.0,341.0 896.0,342.7 897.0,343.8 898.0,344.6 899.0,344.9 900.0,344.9 901.0,345.0 902.0,345.0 903.0,345.0 904.0,345.1 905.0,345.2 906.0,345.1 906.2,345.1 907.0,345.5 908.0,345.7 909.0,345.7 910.0,345.8 911.0,345.9 912.0,345.5 913.0,345.2 914.0,345.4 914.1,345.7 915.0,345.9 916.0,346.0 917.0,346.0 918.0,345.7 919.0,345.5 920.0,345.7 921.0,346.2 922.0,346.3 923.0,346.0 924.0,345.9 925.0,345.8 926.0,345.8 926.6,345.6 927.0,345.5 928.0,345.7 929.0,346.0 930.0,346.1 931.0,346.2 932.0,346.3 933.0,346.3 934.0,346.0 935.0,345.7 936.0,345.9 937.0,346.3 938.0,346.2 939.0,346.2 940.0,346.3 940.2,346.3 941.0,346.2 942.0,346.0 943.0,345.8 944.0,345.8 945.0,346.0 946.0,346.3 947.0,346.5 948.0,346.4 949.0,346.6 950.0,346.9 951.0,346.8 951.5,346.6 952.0,346.7 953.0,346.6 954.0,346.5 955.0,346.7 956.0,347.0 957.0,347.0 958.0,347.0 959.0,346.7 959.4,346.8 960.0,347.1 961.0,347.0 962.0,347.0 963.0,347.2 964.0,347.1 965.0,346.8 966.0,346.7 966.2,346.8 967.0,346.7 968.0,346.5 969.0,346.5 970.0,346.5 971.0,346.9 972.0,347.3 973.0,347.2 974.0,347.1 975.0,347.1 976.0,347.0 977.0,346.8 977.8,346.8 978.0,347.0 979.0,347.3 979.1,347.2 980.0,346.9 980.9,347.1 981.0,347.4 982.0,347.5 983.0,347.3 983.2,347.2 984.0,347.2 985.0,347.2 985.5,347.4 986.0,347.9 987.0,348.0 987.7,347.8 988.0,347.6 989.0,347.4 989.7,347.4 990.0,347.7 991.0,347.6 992.0,347.4 992.2,347.3 993.0,347.5 994.0,347.6 995.0,347.5 996.0,347.6 997.0,347.9 998.0,347.8 999.0,347.5 1000.0,347.4 1001.0,347.5 1002.0,347.8 1003.0,347.9 1004.0,348.0 1005.0,348.0 1005.2,347.8 1006.0,347.8 1007.0,348.0 1008.0,347.8 1009.0,347.7 1010.0,347.9 1011.0,347.9 1012.0,347.7 1012.6,347.8 1013.0,347.9 1014.0,348.0 1015.0,348.1 1016.0,348.0 1017.0,348.0 1018.0,348.1 1019.0,348.2 1020.0,348.3 1021.0,348.3 1022.0,348.3 1023.0,348.3 1024.0,348.2 1025.0,348.2 1026.0,348.5 1027.0,348.8 1028.0,348.6 1029.0,348.4 1030.0,348.5 1031.0,348.4 1032.0,348.2 1032.2,348.4 1033.0,348.5 1034.0,348.5 1035.0,348.4 1036.0,348.5 1037.0,348.6 1038.0,348.6 1039.0,348.5 1040.0,348.5 1041.0,348.7 1042.0,348.7 1043.0,348.6 1044.0,348.6 1045.0,348.5 1046.0,348.4 1047.0,348.6 1048.0,348.8 1049.0,348.9 1050.0,348.9 1051.0,349.0 1052.0,349.0 1053.0,348.7 1054.0,348.5 1055.0,348.7 1056.0,348.7 1057.0,348.7 1058.0,348.9 1059.0,349.0 1060.0,349.0 1061.0,348.9 1062.0,349.0 1063.0,349.2 1064.0,349.3 1065.0,349.0 1066.0,349.0 1067.0,348.9 1068.0,348.5 1069.0,348.7 1070.0,349.0 1071.0,348.8 1071.5,348.7 1072.0,348.7 1073.0,348.4 1074.0,348.3 1075.0,348.5 1076.0,348.7 1077.0,348.6 1078.0,348.8 1079.0,349.0 1080.0,349.1 1081.0,348.9 1082.0,349.0 1083.0,348.9 1084.0,348.5 1085.0,348.4 1086.0,348.6 1087.0,348.3 1088.0,348.2 1089.0,348.5 1090.0,348.4 1091.0,348.0 1092.0,347.9 1093.0,347.9 1094.0,348.2 1095.0,348.1 1096.0,347.6 1097.0,347.2 1098.0,346.9 1099.0,346.9 1100.0,347.1 1101.0,346.9 1102.0,346.3 1103.0,345.5 1104.0,345.0 1105.0,344.6 1106.0,344.2 1107.0,343.8 1108.0,343.3 1109.0,342.3 1110.0,340.8 1111.0,339.2 1112.0,337.8 1113.0,336.9 1114.0,336.0 1115.0,334.7 1116.0,333.4 1117.0,332.2 1118.0,330.8 1119.0,329.7 1120.0,328.8 1121.0,327.7 1122.0,326.7 1123.0,325.8 1124.0,324.7 1125.0,323.6 1126.0,322.7 1127.0,321.9 1128.0,320.8 1129.0,319.5 1130.0,318.7 1131.0,318.1 1132.0,317.1 1132.2,316.6 1133.0,315.7 1134.0,314.8 1135.0,313.7 1136.0,312.7 1137.0,311.5 1138.0,310.2 1139.0,308.7 1140.0,307.5 1141.0,306.5 1142.0,305.5 1143.0,304.7 1144.0,303.2 1145.0,301.6 1146.0,299.6 1147.0,297.6 1148.0,295.7 1149.0,294.2 1150.0,292.4 1151.0,290.5 1152.0,288.7 1153.0,286.6 1154.0,283.0 1155.0,279.8 1156.0,276.3 1157.0,272.7 1158.0,269.3 1159.0,265.8 1160.0,262.2 1161.0,258.4 1162.0,254.4 1162.2,253.8 1163.0,251.2 1164.0,247.5 1165.0,244.0 1166.0,240.5 1166.2,239.5 1167.0,236.8 1168.0,233.7 1169.0,230.3 1169.2,229.6 1169.8,227.5 1170.0,226.6 1170.8,223.5 1171.0,222.6 1172.0,219.5 1172.2,219.2 1173.0,218.9 1173.4,220.4 1174.0,226.0 1175.0,243.7 1176.0,267.1 1176.4,276.4 1177.0,289.9 1178.0,311.6 1179.0,333.5 1180.0,341.3 1181.0,347.1 1182.0,350.3 1183.0,352.6 1184.0,353.4 1184.8,353.7 1185.0,353.8 1186.0,353.8 1186.7,353.7 1187.0,353.8 1188.0,353.6 1188.4,353.5 1189.0,354.0 1190.0,354.3 1191.0,354.2 1192.0,354.0 1193.0,353.8 1194.0,353.6 1195.0,353.6 1196.0,353.4 1197.0,352.8 1198.0,352.2 1199.0,352.3 1200.0,352.4 1201.0,352.2 1202.0,351.9 1202.2,351.6 1203.0,351.4 1204.0,351.3 1205.0,351.2 1206.0,350.9 1207.0,350.9 1208.0,350.9 1209.0,350.6 1210.0,350.5 1211.0,350.6 1212.0,350.9 1213.0,351.0 1214.0,351.0 1215.0,350.6 1216.0,350.5 1217.0,350.7 1218.0,350.7 1219.0,350.4 1220.0,350.3 1221.0,350.2 1222.0,350.3 1223.0,350.3 1224.0,349.9 1225.0,349.6 1226.0,349.9 1227.0,350.2 1228.0,350.2 1229.0,350.1 1230.0,350.2 1231.0,350.2 1232.0,350.2 1233.0,350.1 1234.0,349.7 1235.0,349.5 1236.0,349.5 1237.0,349.3 1238.0,349.7 1239.0,350.2 1240.0,350.3 1241.0,350.2 1242.0,350.3 1243.0,350.1 1244.0,349.9 1245.0,349.9 1246.0,350.0 1247.0,349.9 1248.0,349.8 1249.0,349.9 1250.0,349.9 1251.0,349.8 1252.0,349.6 1252.2,349.6 1253.0,349.9 1254.0,349.9 1255.0,349.8 1256.0,350.0 1257.0,350.0 1258.0,349.8 1259.0,350.0 1260.0,350.0 1261.0,350.2 1262.0,350.4 1263.0,350.0 1264.0,349.6 1265.0,349.6 1266.0,349.8 1267.0,349.7 1268.0,349.5 1269.0,349.6 1270.0,350.0 1271.0,350.0 1272.0,349.5 1273.0,349.6 1274.0,349.8 1275.0,349.9" fill="none" stroke="#cf7a30" stroke-width="1" stroke-linejoin="round" shape-rendering="crispEdges"/>
<polyline points="4.0,531.3 5.0,531.1 6.0,530.9 7.0,530.9 7.6,531.5 8.0,531.6 9.0,531.4 10.0,531.4 11.0,531.3 12.0,531.2 13.0,531.3 13.1,531.2 14.0,531.0 14.7,531.1 15.0,531.2 15.3,531.3 16.0,531.2 17.0,531.1 17.1,531.1 18.0,531.1 18.9,531.3 19.0,531.4 20.0,531.3 20.8,531.2 21.0,531.1 22.0,531.4 23.0,531.5 24.0,530.9 25.0,530.5 26.0,530.7 27.0,531.2 28.0,531.4 29.0,531.5 30.0,531.4 31.0,531.3 32.0,531.2 33.0,531.2 34.0,531.2 35.0,530.9 36.0,530.9 37.0,531.3 38.0,531.4 38.4,531.0 39.0,530.7 40.0,531.0 41.0,531.2 42.0,531.3 43.0,531.1 44.0,530.9 45.0,531.2 46.0,531.2 47.0,530.9 48.0,531.1 49.0,531.3 50.0,531.3 51.0,531.5 52.0,531.7 53.0,531.3 54.0,530.9 55.0,530.9 56.0,531.0 57.0,531.0 58.0,530.9 59.0,531.0 60.0,531.0 61.0,530.6 62.0,530.3 63.0,530.4 64.0,530.9 65.0,531.2 66.0,531.2 67.0,531.0 68.0,530.8 69.0,530.9 70.0,530.8 71.0,530.5 72.0,530.7 73.0,531.2 74.0,531.1 75.0,530.9 76.0,530.7 77.0,530.7 78.0,530.9 79.0,530.8 80.0,530.6 81.0,530.6 82.0,530.6 83.0,530.8 84.0,530.9 85.0,530.8 86.0,530.9 87.0,530.7 88.0,530.6 89.0,530.5 90.0,530.6 91.0,530.6 92.0,530.5 93.0,530.4 94.0,530.4 95.0,530.2 96.0,530.2 97.0,530.5 98.0,530.8 99.0,530.9 100.0,531.1 101.0,531.2 102.0,530.8 103.0,530.7 104.0,530.7 105.0,530.5 106.0,530.4 106.4,530.4 107.0,530.2 108.0,530.1 109.0,530.3 110.0,530.3 111.0,530.2 112.0,530.6 113.0,530.6 114.0,530.2 115.0,530.0 116.0,530.0 117.0,530.2 118.0,530.3 119.0,530.2 120.0,529.9 121.0,529.8 122.0,529.7 123.0,529.6 124.0,529.7 125.0,529.9 126.0,530.1 127.0,529.9 128.0,529.6 129.0,529.4 130.0,529.5 131.0,529.6 132.0,529.4 133.0,529.0 134.0,528.3 135.0,527.9 136.0,527.6 137.0,527.3 138.0,526.7 139.0,526.2 140.0,525.9 141.0,525.5 142.0,524.9 143.0,524.1 144.0,523.1 145.0,522.0 146.0,521.2 147.0,520.4 148.0,519.5 149.0,518.8 150.0,518.1 151.0,517.4 152.0,516.7 153.0,515.8 154.0,514.7 155.0,513.6 156.0,512.8 157.0,512.0 158.0,511.1 159.0,510.5 160.0,509.8 161.0,509.0 162.0,508.4 163.0,507.6 164.0,506.5 165.0,505.5 166.0,504.8 166.4,504.4 167.0,503.7 168.0,502.8 169.0,501.5 170.0,500.1 171.0,499.0 172.0,498.1 173.0,497.3 174.0,496.2 175.0,494.7 176.0,493.5 177.0,492.6 178.0,491.4 179.0,490.2 180.0,488.7 181.0,487.1 182.0,485.4 183.0,483.8 184.0,482.6 185.0,481.2 186.0,478.8 187.0,476.5 188.0,474.7 189.0,472.7 190.0,470.2 191.0,467.1 192.0,464.2 193.0,461.0 194.0,458.0 195.0,455.1 196.0,451.8 197.0,448.5 198.0,445.3 199.0,441.8 199.4,439.9 200.0,437.8 201.0,434.9 201.2,434.7 202.0,431.7 202.1,431.2 203.0,428.0 203.2,427.4 204.0,424.5 204.3,423.2 205.0,420.7 206.0,417.4 207.0,413.9 207.8,411.0 208.0,410.6 209.0,408.3 210.0,407.3 211.0,407.1 212.0,408.0 212.6,408.5 213.0,408.4 214.0,408.9 215.0,409.5 215.9,409.5 216.0,409.7 217.0,410.4 218.0,410.5 219.0,410.1 219.2,409.8 220.0,409.6 220.4,409.3 221.0,409.5 221.4,409.5 222.0,409.3 223.0,409.4 223.4,409.8 224.0,410.0 225.0,410.1 225.8,410.1 226.0,409.7 227.0,409.5 228.0,409.5 229.0,409.9 230.0,410.2 231.0,410.3 232.0,410.2 233.0,410.0 234.0,409.9 235.0,409.9 236.0,410.1 237.0,410.6 238.0,410.5 239.0,410.1 240.0,410.0 241.0,410.0 242.0,410.0 243.0,410.1 244.0,410.0 245.0,410.0 246.0,410.0 247.0,409.9 248.0,409.8 249.0,409.7 250.0,409.9 251.0,410.0 252.0,410.2 253.0,410.5 254.0,410.7 255.0,410.6 256.0,410.4 257.0,410.4 258.0,410.4 259.0,410.6 260.0,410.5 261.0,410.2 262.0,410.5 263.0,410.4 264.0,409.8 265.0,409.9 266.0,410.0 267.0,409.8 268.0,409.9 269.0,410.2 270.0,410.5 271.0,410.8 272.0,411.0 273.0,410.8 274.0,410.7 275.0,410.6 276.0,410.4 277.0,410.0 278.0,409.9 279.0,410.2 280.0,410.7 281.0,411.0 282.0,410.8 283.0,410.6 284.0,410.5 285.0,410.9 286.0,410.9 286.4,410.5 287.0,410.4 288.0,410.5 289.0,410.8 290.0,410.8 291.0,410.6 292.0,410.7 293.0,410.7 294.0,410.4 295.0,410.1 296.0,410.0 297.0,410.1 298.0,410.7 299.0,410.9 300.0,410.5 301.0,410.5 302.0,410.6 303.0,410.5 304.0,410.4 305.0,410.5 306.0,410.7 307.0,410.6 308.0,410.6 309.0,410.7 310.0,410.4 311.0,410.1 312.0,410.4 313.0,410.7 314.0,410.7 315.0,410.5 316.0,410.4 317.0,410.6 318.0,410.8 319.0,410.9 320.0,411.0 321.0,410.6 322.0,410.2 323.0,410.3 324.0,410.7 325.0,410.8 326.0,410.9 327.0,411.0 328.0,411.1 329.0,411.0 330.0,410.7 331.0,410.7 332.0,410.7 333.0,410.6 334.0,410.9 335.0,411.1 336.0,410.9 337.0,410.7 338.0,410.5 339.0,410.4 340.0,410.4 341.0,410.5 342.0,410.5 343.0,410.5 344.0,410.7 345.0,410.7 346.0,410.5 346.4,410.4 347.0,410.1 348.0,409.9 349.0,410.3 350.0,410.6 351.0,410.5 352.0,410.3 353.0,410.4 354.0,410.8 355.0,410.9 356.0,410.8 357.0,410.6 358.0,410.4 359.0,410.4 360.0,410.6 361.0,410.6 362.0,410.4 363.0,410.4 364.0,410.9 365.0,411.2 366.0,411.0 367.0,410.8 368.0,410.8 369.0,411.0 370.0,411.2 371.0,411.3 372.0,411.0 373.0,410.7 374.0,410.6 375.0,410.5 376.0,410.7 377.0,411.2 378.0,411.2 379.0,411.0 380.0,411.3 381.0,411.2 382.0,410.9 383.0,411.1 384.0,411.1 385.0,410.8 386.0,410.7 387.0,411.0 388.0,411.0 389.0,410.8 389.3,411.1 390.0,411.4 391.0,411.2 392.0,411.2 393.0,411.2 394.0,410.7 395.0,410.4 396.0,410.4 397.0,412.1 398.0,416.3 399.0,423.5 400.0,434.5 401.0,451.5 402.0,465.4 403.0,477.5 404.0,487.5 405.0,493.9 406.0,500.5 407.0,504.8 408.0,507.8 409.0,510.9 410.0,514.4 411.0,518.1 412.0,521.9 413.0,525.5 414.0,528.6 414.3,529.1 415.0,530.2 416.0,530.7 417.0,531.4 418.0,531.6 419.0,531.4 420.0,530.9 421.0,530.7 422.0,530.8 422.3,530.9 423.0,530.9 424.0,530.9 425.0,531.0 426.0,531.3 427.0,531.4 428.0,531.0 429.0,530.9 430.0,530.9 431.0,530.7 432.0,530.8 433.0,531.1 434.0,531.3 435.0,531.3 436.0,531.2 437.0,531.4 438.0,531.4 439.0,531.3 440.0,531.3 441.0,531.2 442.0,531.4 442.1,531.4 443.0,531.1 444.0,531.2 445.0,531.5 446.0,531.8 447.0,531.9 448.0,531.6 449.0,531.4 450.0,531.3 451.0,531.4 452.0,531.4 453.0,531.2 454.0,531.2 455.0,531.3 455.3,531.4 456.0,531.5 457.0,531.7 458.0,531.6 459.0,531.4 460.0,531.1 461.0,530.9 462.0,531.0 463.0,531.2 464.0,531.3 465.0,531.2 466.0,531.1 466.3,531.2 467.0,531.1 468.0,531.0 469.0,531.2 470.0,531.1 471.0,530.7 472.0,530.8 473.0,531.2 474.0,531.2 475.0,531.0 476.0,531.2 477.0,531.5 478.0,531.4 479.0,531.5 479.5,531.5 480.0,531.3 481.0,531.3 482.0,531.2 483.0,531.0 483.9,531.1 484.0,531.3 485.0,531.2 486.0,531.0 487.0,531.2 488.0,531.6 489.0,531.6 490.0,531.2 490.5,530.9 491.0,530.9 492.0,531.2 493.0,531.2 494.0,531.1 495.0,531.4 496.0,531.4 497.0,531.0 497.6,530.9 498.0,531.1 498.2,531.2 499.0,531.0 500.0,531.0 501.0,531.4 501.8,531.5 502.0,531.6 503.0,531.6 503.7,531.3 504.0,531.3 505.0,531.4 506.0,531.4 507.0,531.1 508.0,531.0 509.0,531.0 510.0,530.9 511.0,530.7 512.0,530.7 513.0,530.8 514.0,530.9 515.0,530.9 516.0,531.1 517.0,531.4 518.0,531.6 519.0,531.2 520.0,530.8 521.0,530.9 521.3,531.0 522.0,531.0 523.0,530.9 524.0,530.8 525.0,530.8 526.0,530.7 527.0,530.5 528.0,530.7 529.0,531.1 530.0,531.3 531.0,531.1 532.0,531.0 533.0,531.2 534.0,531.4 535.0,531.5 536.0,531.3 537.0,531.2 538.0,531.4 539.0,531.4 540.0,531.1 541.0,530.8 542.0,530.6 543.0,530.6 544.0,530.7 545.0,530.8 546.0,530.8 547.0,530.8 548.0,530.9 549.0,531.0 550.0,530.9 551.0,530.7 552.0,530.7 553.0,531.2 554.0,531.2 555.0,531.0 556.0,530.8 557.0,530.4 558.0,530.3 559.0,530.8 560.0,531.0 561.0,530.7 562.0,530.7 563.0,530.8 564.0,530.6 565.0,530.8 566.0,530.9 567.0,530.8 568.0,531.0 569.0,531.2 570.0,530.7 571.0,530.5 572.0,530.5 573.0,530.4 574.0,530.5 575.0,530.9 576.0,530.7 577.0,530.2 578.0,530.4 579.0,530.7 580.0,530.6 581.0,530.3 582.0,530.5 583.0,530.7 584.0,530.7 585.0,530.5 586.0,530.4 587.0,530.7 588.0,530.9 589.0,531.1 589.3,531.2 590.0,530.5 591.0,530.2 592.0,530.4 593.0,530.3 594.0,530.1 595.0,530.2 596.0,530.4 597.0,530.1 598.0,529.8 599.0,529.8 600.0,529.8 601.0,530.0 602.0,529.9 603.0,529.8 604.0,530.0 605.0,530.0 606.0,530.2 607.0,530.2 608.0,529.9 609.0,529.6 610.0,529.7 611.0,529.8 612.0,529.5 613.0,529.4 614.0,529.3 615.0,529.2 616.0,529.0 617.0,528.4 618.0,527.9 619.0,527.6 620.0,527.1 621.0,526.8 622.0,526.5 623.0,525.9 624.0,525.2 625.0,524.5 626.0,524.1 627.0,523.2 628.0,521.9 629.0,521.2 630.0,520.9 631.0,520.2 632.0,519.1 633.0,518.1 634.0,517.0 635.0,516.3 636.0,515.5 637.0,514.3 638.0,513.6 639.0,513.3 640.0,512.5 641.0,511.4 642.0,510.7 643.0,510.0 644.0,508.8 645.0,507.7 646.0,507.0 647.0,506.4 648.0,505.8 649.0,504.8 649.3,504.5 650.0,504.0 651.0,502.7 652.0,501.5 653.0,500.6 654.0,499.4 655.0,498.3 656.0,497.1 657.0,495.8 658.0,494.5 659.0,493.5 660.0,492.5 661.0,491.1 662.0,489.6 663.0,488.3 664.0,487.2 665.0,485.7 666.0,483.7 667.0,482.3 668.0,480.4 669.0,478.0 670.0,476.2 671.0,474.1 672.0,471.8 673.0,469.8 674.0,467.2 675.0,464.3 676.0,461.2 677.0,458.1 678.0,454.8 679.0,451.3 680.0,447.9 681.0,444.6 682.0,441.3 682.3,440.5 683.0,438.3 684.0,435.0 684.1,435.0 685.0,431.6 686.0,427.4 686.1,426.9 687.0,423.8 687.2,422.9 688.0,420.0 688.9,417.0 689.0,416.6 690.0,413.1 690.7,410.7 691.0,409.5 692.0,407.5 692.9,407.5 693.0,407.5 694.0,407.3 695.0,408.0 695.5,408.0 696.0,408.2 697.0,409.1 698.0,409.2 698.8,409.4 699.0,409.7 700.0,410.0 701.0,410.1 702.0,409.8 702.1,409.5 703.0,409.7 703.3,410.1 704.0,410.3 704.3,410.0 705.0,409.8 706.0,410.0 706.3,409.8 707.0,409.7 708.0,409.9 708.7,410.1 709.0,410.2 710.0,410.4 711.0,410.5 712.0,410.1 713.0,409.5 714.0,409.6 715.0,410.0 716.0,410.4 717.0,410.7 718.0,410.4 719.0,410.3 720.0,410.5 721.0,410.5 722.0,410.4 723.0,410.2 724.0,410.0 725.0,410.1 726.0,410.3 727.0,410.2 728.0,410.4 729.0,410.6 730.0,410.6 731.0,410.6 732.0,410.3 733.0,409.8 734.0,409.8 735.0,410.2 736.0,410.3 737.0,410.1 738.0,410.0 739.0,410.3 740.0,410.4 741.0,410.0 742.0,410.0 743.0,410.1 744.0,410.0 745.0,410.2 746.0,410.2 747.0,410.0 748.0,410.0 749.0,410.2 750.0,410.4 751.0,410.7 752.0,410.8 753.0,410.6 754.0,410.4 755.0,410.3 756.0,410.5 757.0,410.5 758.0,410.2 759.0,410.3 760.0,410.4 761.0,410.5 762.0,410.6 763.0,410.7 764.0,410.6 765.0,410.5 766.0,410.5 767.0,410.5 768.0,410.5 769.0,410.6 769.3,410.7 770.0,410.7 771.0,410.4 772.0,410.3 773.0,410.2 774.0,410.2 775.0,410.4 776.0,410.6 777.0,411.1 778.0,411.3 779.0,410.9 780.0,410.9 781.0,410.8 782.0,410.4 783.0,410.4 784.0,410.8 785.0,411.0 786.0,410.7 787.0,410.2 788.0,410.2 789.0,410.6 790.0,410.9 791.0,410.8 792.0,410.8 793.0,410.9 794.0,410.7 795.0,410.5 796.0,410.4 797.0,410.3 798.0,410.6 799.0,410.8 800.0,410.7 801.0,410.4 802.0,410.4 803.0,410.7 804.0,410.9 805.0,410.8 806.0,410.6 807.0,410.5 808.0,410.5 809.0,410.5 810.0,410.6 811.0,410.8 812.0,411.0 813.0,410.7 814.0,410.4 815.0,410.7 816.0,410.7 817.0,410.3 818.0,410.3 819.0,410.6 820.0,410.7 821.0,410.4 822.0,410.2 823.0,410.5 824.0,410.9 825.0,411.0 826.0,410.9 827.0,411.2 828.0,411.3 829.0,411.0 829.3,411.0 830.0,410.9 831.0,410.7 832.0,410.6 833.0,410.4 834.0,410.2 835.0,410.1 836.0,410.3 837.0,410.5 838.0,410.8 839.0,410.9 840.0,410.7 841.0,410.6 842.0,410.5 843.0,410.3 844.0,410.5 845.0,410.7 846.0,410.5 847.0,410.2 848.0,410.2 849.0,410.5 850.0,410.9 851.0,411.2 852.0,411.3 853.0,411.3 854.0,411.2 855.0,411.1 856.0,411.0 857.0,411.1 858.0,411.5 859.0,411.6 860.0,411.2 861.0,410.9 862.0,411.1 863.0,411.0 864.0,410.9 865.0,410.9 866.0,411.0 867.0,411.4 868.0,411.3 869.0,411.1 870.0,411.1 871.0,411.2 872.0,411.3 872.2,411.1 873.0,411.0 874.0,411.0 875.0,411.2 876.0,411.2 877.0,410.7 878.0,410.3 879.0,410.7 880.0,413.3 881.0,417.2 882.0,423.7 883.0,435.9 884.0,453.4 885.0,467.3 886.0,479.5 887.0,488.3 888.0,494.2 889.0,500.8 890.0,504.7 891.0,508.2 892.0,511.5 893.0,514.8 894.0,518.4 895.0,521.9 896.0,525.5 897.0,528.8 897.2,529.3 898.0,530.2 899.0,530.3 900.0,531.0 901.0,531.3 902.0,531.5 903.0,531.2 904.0,531.2 905.0,531.5 905.2,531.6 906.0,531.4 907.0,531.3 908.0,531.4 909.0,531.4 910.0,531.3 911.0,531.0 912.0,530.8 912.9,531.1 913.0,531.5 914.0,531.7 915.0,531.6 916.0,531.6 917.0,531.8 918.0,531.9 919.0,531.6 920.0,531.5 921.0,531.4 922.0,531.3 923.0,531.3 924.0,531.4 925.0,531.0 926.0,530.9 927.0,531.0 928.0,531.1 929.0,531.4 930.0,531.5 931.0,531.3 932.0,531.3 933.0,531.2 934.0,531.2 935.0,531.5 936.0,531.7 937.0,531.4 938.0,531.0 938.2,531.1 939.0,531.3 940.0,531.0 941.0,531.0 942.0,530.9 943.0,530.7 944.0,531.0 945.0,531.5 946.0,531.4 947.0,531.2 948.0,531.4 949.0,531.7 949.2,531.7 950.0,531.3 951.0,531.1 952.0,531.3 953.0,531.3 954.0,531.3 955.0,531.2 956.0,531.0 956.9,530.8 957.0,530.9 958.0,530.8 959.0,530.9 960.0,531.1 961.0,531.4 962.0,531.4 962.4,531.2 963.0,531.3 964.0,531.5 965.0,531.2 966.0,530.7 966.8,530.7 967.0,531.3 968.0,531.6 969.0,531.3 970.0,531.2 971.0,531.6 972.0,531.6 973.0,531.3 973.4,531.0 974.0,530.9 975.0,531.0 976.0,531.0 977.0,531.3 978.0,531.4 978.9,531.5 979.0,531.5 980.0,531.4 980.5,531.4 981.0,531.5 981.1,531.3 982.0,531.3 982.9,531.4 983.0,531.4 984.0,531.2 984.7,531.1 985.0,531.4 986.0,531.7 986.6,531.4 987.0,531.0 988.0,530.8 989.0,530.6 990.0,530.7 991.0,531.0 992.0,531.1 993.0,530.8 994.0,530.7 995.0,530.8 996.0,530.8 997.0,530.8 998.0,531.1 999.0,531.2 1000.0,531.2 1001.0,531.2 1002.0,531.2 1003.0,531.2 1004.0,531.1 1004.2,531.1 1005.0,531.2 1006.0,531.1 1007.0,531.0 1008.0,530.7 1009.0,530.6 1010.0,530.8 1011.0,530.9 1012.0,531.1 1013.0,531.2 1014.0,531.2 1015.0,531.2 1016.0,531.1 1017.0,531.0 1018.0,530.9 1019.0,531.1 1020.0,531.2 1021.0,530.8 1022.0,530.9 1023.0,531.2 1024.0,531.3 1025.0,531.4 1026.0,531.1 1027.0,530.7 1028.0,530.6 1029.0,530.7 1030.0,531.1 1031.0,531.3 1032.0,531.0 1033.0,530.9 1034.0,530.7 1035.0,530.5 1036.0,530.5 1037.0,530.4 1038.0,530.6 1039.0,530.9 1040.0,531.1 1041.0,531.1 1042.0,530.9 1043.0,530.9 1044.0,531.0 1045.0,530.6 1046.0,530.1 1047.0,530.4 1048.0,530.7 1049.0,530.6 1050.0,530.7 1051.0,530.7 1052.0,530.4 1053.0,530.5 1054.0,530.7 1055.0,530.5 1056.0,530.4 1057.0,530.5 1058.0,530.7 1059.0,530.8 1060.0,530.7 1061.0,530.6 1062.0,530.5 1063.0,530.4 1064.0,530.2 1065.0,530.2 1066.0,530.4 1067.0,530.7 1068.0,530.6 1069.0,530.4 1070.0,530.3 1071.0,530.3 1072.0,530.3 1072.2,530.4 1073.0,530.6 1074.0,530.8 1075.0,530.9 1076.0,530.7 1077.0,530.4 1078.0,530.4 1079.0,530.4 1080.0,530.4 1081.0,530.3 1082.0,530.0 1083.0,529.8 1084.0,529.7 1085.0,529.7 1086.0,529.8 1087.0,530.0 1088.0,530.0 1089.0,529.9 1090.0,529.9 1091.0,529.7 1092.0,529.3 1093.0,529.3 1094.0,529.5 1095.0,529.6 1096.0,529.6 1097.0,529.4 1098.0,529.2 1099.0,529.0 1100.0,528.3 1101.0,527.7 1102.0,527.3 1103.0,527.4 1104.0,527.2 1105.0,526.2 1106.0,525.4 1107.0,524.5 1108.0,523.9 1109.0,523.4 1110.0,522.6 1111.0,521.6 1112.0,520.8 1113.0,520.2 1114.0,519.6 1115.0,518.9 1116.0,517.9 1117.0,517.0 1118.0,516.0 1119.0,515.0 1120.0,514.4 1121.0,513.8 1122.0,512.9 1123.0,511.8 1124.0,511.1 1125.0,510.4 1126.0,509.7 1127.0,508.9 1128.0,507.6 1129.0,506.7 1130.0,506.2 1131.0,505.2 1132.0,504.3 1132.2,504.3 1133.0,503.5 1134.0,502.5 1135.0,501.4 1136.0,500.3 1137.0,499.5 1138.0,498.5 1139.0,497.2 1140.0,496.1 1141.0,495.0 1142.0,493.7 1143.0,492.4 1144.0,490.7 1145.0,489.3 1146.0,488.1 1147.0,486.8 1148.0,485.3 1149.0,483.6 1150.0,482.1 1151.0,480.4 1152.0,478.4 1153.0,476.2 1154.0,473.9 1155.0,471.7 1156.0,469.5 1157.0,466.5 1158.0,463.7 1159.0,460.7 1160.0,457.7 1161.0,454.4 1162.0,450.9 1163.0,447.4 1164.0,443.9 1165.0,440.7 1165.2,440.3 1166.0,437.6 1167.0,434.2 1167.9,431.2 1168.0,430.8 1169.0,426.8 1170.0,423.2 1170.1,423.0 1171.0,419.6 1171.8,416.7 1172.0,416.2 1173.0,412.8 1173.6,410.9 1174.0,409.5 1175.0,407.7 1175.8,407.6 1176.0,407.7 1177.0,407.4 1178.0,407.9 1178.4,408.2 1179.0,408.7 1180.0,409.5 1181.0,409.7 1181.7,409.4 1182.0,409.2 1183.0,409.7 1184.0,409.9 1185.0,409.7 1186.0,409.9 1186.2,410.0 1187.0,410.1 1187.2,410.2 1188.0,409.9 1189.0,409.6 1189.2,409.6 1190.0,409.5 1191.0,409.5 1191.6,409.6 1192.0,409.8 1193.0,410.2 1194.0,410.2 1195.0,410.1 1196.0,410.1 1197.0,409.8 1198.0,409.8 1199.0,410.2 1200.0,410.5 1201.0,410.5 1202.0,410.5 1203.0,410.6 1204.0,410.6 1205.0,410.5 1206.0,410.0 1207.0,409.7 1208.0,410.1 1209.0,410.4 1210.0,410.5 1211.0,410.5 1212.0,410.6 1213.0,410.5 1214.0,410.4 1215.0,410.3 1216.0,410.3 1217.0,410.2 1218.0,410.0 1219.0,410.0 1220.0,410.1 1221.0,410.2 1222.0,410.3 1223.0,410.2 1224.0,410.2 1225.0,410.2 1226.0,410.3 1227.0,410.5 1228.0,410.5 1229.0,410.5 1230.0,410.2 1231.0,409.9 1232.0,409.9 1233.0,410.4 1234.0,410.7 1235.0,410.5 1236.0,410.3 1237.0,410.4 1238.0,410.9 1239.0,410.6 1240.0,410.1 1241.0,409.9 1242.0,410.0 1243.0,410.7 1244.0,411.2 1245.0,411.0 1246.0,410.5 1247.0,410.2 1248.0,410.2 1249.0,410.4 1250.0,410.3 1251.0,410.3 1252.0,410.3 1252.2,410.5 1253.0,410.8 1254.0,411.0 1255.0,410.7 1256.0,410.4 1257.0,410.2 1258.0,410.0 1259.0,410.3 1260.0,410.6 1261.0,410.8 1262.0,410.8 1263.0,410.7 1264.0,410.4 1265.0,410.2 1266.0,410.2 1267.0,410.4 1268.0,410.9 1269.0,410.8 1270.0,410.7 1271.0,410.9 1272.0,410.8 1273.0,410.6 1274.0,410.6 1275.0,410.6" fill="none" stroke="#bebebe" stroke-width="1" stroke-linejoin="round" shape-rendering="crispEdges"/>
<polyline points="4.0,623.0 5.0,622.4 6.0,622.2 7.0,621.9 7.4,621.7 8.0,621.5 9.0,621.1 10.0,620.8 11.0,620.8 12.0,620.8 13.0,620.3 13.4,620.0 14.0,619.7 14.2,619.6 14.8,619.4 15.0,619.4 15.3,619.4 16.0,619.3 17.0,619.0 17.5,618.8 18.0,618.7 19.0,618.5 19.7,618.2 20.0,618.0 20.7,617.8 21.0,617.9 21.9,617.7 22.0,617.5 23.0,617.1 23.9,616.9 24.0,616.7 25.0,616.5 26.0,616.3 26.4,616.2 27.0,616.0 28.0,615.5 29.0,615.1 30.0,614.9 31.0,614.6 32.0,614.2 33.0,614.1 34.0,613.9 35.0,613.4 36.0,613.0 37.0,612.8 38.0,612.7 39.0,612.5 40.0,612.2 41.0,611.8 41.4,611.7 42.0,611.4 43.0,611.0 44.0,610.8 45.0,610.6 46.0,610.1 47.0,609.8 48.0,609.4 49.0,609.0 49.4,609.1 50.0,609.0 51.0,608.5 52.0,608.2 53.0,608.0 54.0,607.7 55.0,607.2 56.0,607.0 57.0,607.0 58.0,606.6 59.0,606.1 60.0,605.8 61.0,605.6 62.0,605.4 63.0,605.1 64.0,604.7 65.0,604.4 66.0,604.1 66.4,604.1 67.0,603.9 68.0,603.4 69.0,603.1 70.0,603.1 71.0,602.9 72.0,602.5 73.0,602.2 74.0,601.8 75.0,601.3 76.0,601.0 77.0,600.8 78.0,600.6 79.0,600.1 80.0,599.7 81.0,599.6 82.0,599.3 83.0,599.0 84.0,598.5 85.0,598.1 86.0,598.1 87.0,597.9 88.0,597.6 89.0,597.2 90.0,596.8 91.0,596.6 92.0,596.3 93.0,596.0 94.0,595.6 95.0,595.3 96.0,595.0 97.0,594.8 98.0,594.6 99.0,594.5 100.0,594.2 101.0,593.7 102.0,593.1 103.0,592.8 104.0,592.6 105.0,592.3 106.0,592.0 106.4,592.1 107.0,591.9 108.0,591.4 109.0,591.0 110.0,590.8 111.0,590.7 112.0,590.6 113.0,590.4 114.0,590.0 115.0,589.7 116.0,589.4 117.0,589.3 118.0,589.0 119.0,588.6 120.0,588.1 121.0,587.8 122.0,587.6 123.0,587.5 124.0,587.3 125.0,586.9 126.0,586.6 127.0,586.4 128.0,586.1 129.0,585.8 130.0,585.8 131.0,585.8 132.0,585.3 133.0,584.9 134.0,584.5 135.0,584.3 136.0,584.3 137.0,584.2 138.0,583.9 139.0,583.6 140.0,583.4 141.0,583.0 142.0,582.7 143.0,582.5 144.0,582.3 145.0,582.1 146.0,582.0 147.0,581.8 148.0,581.7 149.0,581.7 150.0,581.5 151.0,581.3 152.0,581.3 153.0,581.2 154.0,581.0 155.0,580.6 156.0,580.6 157.0,580.5 158.0,580.5 159.0,580.5 160.0,580.5 161.0,580.3 162.0,580.2 163.0,580.1 164.0,579.9 165.0,579.8 166.0,579.7 166.4,579.8 167.0,579.9 168.0,580.0 169.0,579.9 170.0,579.6 171.0,579.4 172.0,579.5 173.0,579.4 174.0,579.3 175.0,579.3 176.0,579.4 177.0,579.4 178.0,579.4 179.0,579.3 180.0,579.2 181.0,579.1 182.0,579.1 183.0,579.1 184.0,579.4 185.0,579.6 186.0,579.7 187.0,579.9 188.0,580.0 189.0,580.1 190.0,580.1 191.0,580.1 192.0,580.1 193.0,580.3 194.0,580.4 195.0,580.7 196.0,581.2 196.1,581.2 197.0,581.4 198.0,581.7 199.0,582.1 199.4,582.2 200.0,582.4 201.0,582.8 202.0,583.3 202.7,583.5 203.0,583.6 203.4,583.8 204.0,584.0 204.2,584.1 205.0,584.6 206.0,585.7 206.4,586.2 207.0,586.9 207.9,590.4 208.0,591.5 209.0,609.4 210.0,634.5 210.4,644.4 211.0,659.3 212.0,678.1 213.0,696.2 214.0,705.7 215.0,709.1 216.0,711.1 217.0,712.4 218.0,713.1 219.0,713.6 219.2,713.7 220.0,714.2 221.0,714.4 222.0,714.3 223.0,714.1 224.0,714.1 225.0,714.3 226.0,714.4 227.0,714.3 228.0,714.1 229.0,714.0 230.0,713.8 231.0,713.7 232.0,713.4 233.0,713.1 234.0,712.9 235.0,712.6 236.0,712.4 237.0,712.4 238.0,712.2 239.0,711.9 240.0,711.6 241.0,711.5 242.0,711.5 243.0,711.5 244.0,711.5 245.0,711.4 246.0,711.3 247.0,711.2 248.0,711.2 249.0,711.2 250.0,711.1 251.0,711.2 252.0,711.2 253.0,711.0 254.0,710.9 254.4,711.1 255.0,711.1 256.0,710.9 257.0,710.8 258.0,710.8 259.0,710.8 260.0,710.6 261.0,710.7 262.0,710.8 263.0,710.7 264.0,710.8 265.0,710.8 266.0,710.6 267.0,710.6 268.0,710.5 269.0,710.6 270.0,710.7 271.0,710.7 272.0,710.8 273.0,710.7 274.0,710.7 275.0,710.5 276.0,710.3 277.0,710.4 278.0,710.5 279.0,710.4 280.0,710.4 281.0,710.5 282.0,710.4 283.0,710.3 284.0,710.4 285.0,710.5 286.0,710.6 287.0,710.7 288.0,710.7 289.0,710.5 290.0,710.3 291.0,710.3 292.0,710.4 293.0,710.6 294.0,710.6 295.0,710.5 296.0,710.4 297.0,710.4 298.0,710.4 298.4,710.3 299.0,710.2 300.0,710.1 301.0,710.2 302.0,710.2 303.0,710.3 304.0,710.4 305.0,710.6 306.0,710.8 307.0,710.6 308.0,710.4 309.0,710.5 310.0,710.4 311.0,710.4 312.0,710.4 313.0,710.2 314.0,710.1 315.0,710.3 316.0,710.5 317.0,710.5 318.0,710.3 319.0,710.3 320.0,710.4 321.0,710.4 322.0,710.4 323.0,710.6 324.0,710.5 325.0,710.4 326.0,710.5 327.0,710.5 328.0,710.4 329.0,710.5 330.0,710.6 331.0,710.7 332.0,710.4 333.0,710.3 334.0,710.4 335.0,710.4 336.0,710.4 337.0,710.5 338.0,710.5 339.0,710.4 340.0,710.2 341.0,710.1 342.0,710.2 343.0,710.5 344.0,710.4 345.0,710.2 346.0,710.3 347.0,710.4 348.0,710.4 349.0,710.3 350.0,710.4 351.0,710.5 352.0,710.5 353.0,710.5 354.0,710.6 355.0,710.5 356.0,710.4 357.0,710.3 358.0,710.4 359.0,710.5 360.0,710.5 361.0,710.6 362.0,710.7 363.0,710.7 364.0,710.7 365.0,710.5 366.0,710.4 366.4,710.6 367.0,710.7 368.0,710.7 369.0,710.7 370.0,710.7 371.0,710.6 372.0,710.7 373.0,710.9 374.0,710.9 375.0,710.7 376.0,710.7 377.0,710.9 378.0,711.1 379.0,711.1 380.0,711.0 381.0,711.2 382.0,711.4 383.0,711.3 384.0,711.3 385.0,711.4 386.0,711.4 387.0,711.3 388.0,711.3 389.0,711.4 389.3,711.5 390.0,711.5 391.0,711.7 392.0,712.2 393.0,712.6 394.0,713.1 395.0,713.6 396.0,714.2 397.0,708.1 398.0,691.2 399.0,672.2 400.0,653.4 401.0,651.9 402.0,650.8 403.0,650.1 404.0,649.6 405.0,649.2 406.0,648.6 407.0,648.1 408.0,647.8 409.0,647.4 410.0,647.0 411.0,646.7 411.3,646.6 412.0,646.3 413.0,645.9 414.0,645.5 415.0,645.2 416.0,644.8 417.0,644.5 418.0,644.4 419.0,644.0 420.0,643.7 421.0,643.4 422.0,643.2 423.0,642.9 424.0,642.6 425.0,642.3 426.0,641.9 427.0,641.5 428.0,641.3 429.0,641.2 430.0,641.0 431.0,640.6 432.0,640.2 433.0,639.8 433.3,639.8 434.0,639.5 435.0,639.3 436.0,639.0 437.0,638.5 438.0,638.2 439.0,638.0 440.0,638.0 441.0,637.7 442.0,637.2 443.0,636.6 444.0,636.2 444.3,636.2 445.0,636.1 446.0,635.7 447.0,635.4 448.0,635.1 449.0,634.8 450.0,634.5 451.0,634.2 452.0,634.0 453.0,633.7 454.0,633.1 455.0,632.8 455.3,632.9 456.0,632.6 457.0,632.2 458.0,631.9 459.0,631.7 460.0,631.4 461.0,631.2 462.0,631.0 463.0,630.8 464.0,630.4 464.3,630.3 465.0,630.1 466.0,629.8 467.0,629.3 468.0,628.8 469.0,628.6 470.0,628.4 471.0,628.1 472.0,627.7 472.9,627.4 473.0,627.5 474.0,627.2 475.0,626.8 476.0,626.4 477.0,626.0 478.0,625.7 479.0,625.4 480.0,625.1 481.0,624.9 482.0,624.7 483.0,624.2 483.9,623.8 484.0,623.8 485.0,623.5 486.0,623.1 487.0,622.7 488.0,622.6 489.0,622.3 490.0,621.9 490.3,621.7 491.0,621.5 492.0,621.4 493.0,621.2 494.0,620.8 494.9,620.5 495.0,620.4 496.0,620.0 496.3,619.9 497.0,619.8 497.1,619.8 497.7,619.5 498.0,619.4 498.2,619.6 499.0,619.4 500.0,619.0 500.4,618.8 501.0,618.7 502.0,618.3 502.6,618.1 503.0,618.1 503.6,617.9 504.0,617.8 504.8,617.5 505.0,617.3 506.0,617.1 506.8,616.9 507.0,616.7 508.0,616.4 509.0,616.0 509.3,615.9 510.0,616.0 511.0,615.7 512.0,615.4 513.0,615.0 514.0,614.6 515.0,614.4 516.0,614.3 516.9,613.9 517.0,613.4 518.0,612.9 519.0,612.9 520.0,612.9 521.0,612.6 522.0,612.2 523.0,612.0 524.0,611.6 524.3,611.6 525.0,611.5 526.0,611.2 527.0,610.8 528.0,610.4 529.0,610.1 530.0,609.9 531.0,609.8 532.0,609.6 532.3,609.1 533.0,608.6 534.0,608.5 535.0,608.4 536.0,608.2 537.0,607.9 538.0,607.4 539.0,607.1 540.0,606.9 541.0,606.5 542.0,606.3 543.0,606.0 544.0,605.7 545.0,605.5 546.0,605.2 547.0,604.8 548.0,604.4 549.0,604.1 549.3,604.1 550.0,603.9 551.0,603.7 552.0,603.2 553.0,602.8 554.0,602.5 555.0,602.3 556.0,602.0 557.0,601.7 558.0,601.5 559.0,601.2 560.0,600.7 561.0,600.3 562.0,600.2 563.0,599.9 564.0,599.5 565.0,599.4 566.0,599.2 567.0,598.8 568.0,598.6 569.0,598.4 570.0,598.0 571.0,597.4 572.0,597.1 573.0,596.8 574.0,596.4 575.0,596.0 576.0,595.8 577.0,595.6 578.0,595.3 579.0,595.0 580.0,594.8 581.0,594.4 582.0,594.0 583.0,593.9 584.0,593.7 585.0,593.3 586.0,593.1 587.0,592.7 588.0,592.4 589.0,592.2 589.3,592.0 590.0,591.8 591.0,591.5 592.0,591.2 593.0,590.8 594.0,590.6 595.0,590.5 596.0,590.2 597.0,589.8 598.0,589.5 599.0,589.2 600.0,588.8 601.0,588.5 602.0,588.3 603.0,588.0 604.0,587.7 605.0,587.5 606.0,587.3 607.0,587.2 608.0,587.1 609.0,586.9 610.0,586.6 611.0,586.2 612.0,585.8 613.0,585.5 614.0,585.2 615.0,584.9 616.0,584.8 617.0,584.9 618.0,584.8 619.0,584.4 620.0,584.0 621.0,583.8 622.0,583.5 623.0,583.4 624.0,583.2 625.0,583.1 626.0,583.0 627.0,582.8 628.0,582.5 629.0,582.2 630.0,582.0 631.0,582.0 632.0,581.8 633.0,581.5 634.0,581.2 635.0,581.0 636.0,580.9 637.0,580.9 638.0,580.7 639.0,580.5 640.0,580.3 641.0,580.4 642.0,580.5 643.0,580.4 644.0,580.1 645.0,580.0 646.0,580.1 647.0,580.0 648.0,579.8 649.0,579.6 649.3,579.5 650.0,579.5 651.0,579.6 652.0,579.7 653.0,579.7 654.0,579.5 655.0,579.2 656.0,579.3 657.0,579.4 658.0,579.3 659.0,579.1 660.0,579.1 661.0,579.3 662.0,579.4 663.0,579.2 664.0,579.2 665.0,579.2 666.0,579.1 667.0,579.3 668.0,579.7 669.0,579.7 670.0,579.7 671.0,579.8 672.0,580.0 673.0,580.0 674.0,580.2 675.0,580.3 676.0,580.4 677.0,580.5 678.0,580.6 679.0,581.0 680.0,581.4 681.0,581.8 682.0,582.2 682.3,582.4 683.0,582.5 684.0,582.7 685.0,583.2 685.6,583.6 686.0,583.9 686.3,584.0 687.0,584.3 687.1,584.3 688.0,584.7 689.0,585.7 689.3,586.1 690.0,587.3 690.8,590.6 691.0,592.7 692.0,611.8 693.0,636.8 693.3,644.3 694.0,661.8 695.0,679.8 696.0,697.9 697.0,706.4 698.0,709.6 699.0,711.3 700.0,712.6 701.0,713.3 702.0,713.7 702.1,713.6 703.0,714.0 704.0,714.2 705.0,714.4 706.0,714.3 707.0,714.3 708.0,714.3 709.0,714.2 710.0,714.0 711.0,713.9 712.0,713.7 713.0,713.7 714.0,713.6 715.0,713.3 716.0,712.9 717.0,712.7 718.0,712.4 719.0,712.2 720.0,712.2 721.0,712.2 722.0,712.0 723.0,711.8 724.0,711.4 725.0,711.3 726.0,711.4 727.0,711.4 728.0,711.1 729.0,711.1 730.0,711.2 731.0,711.2 732.0,711.1 733.0,711.0 734.0,711.0 735.0,711.0 736.0,710.8 737.0,710.5 737.3,710.4 738.0,710.5 739.0,710.6 740.0,710.8 741.0,710.9 742.0,710.8 743.0,710.7 744.0,710.7 745.0,710.8 746.0,710.7 747.0,710.8 748.0,710.8 749.0,710.8 750.0,710.8 751.0,710.7 752.0,710.6 753.0,710.5 754.0,710.4 755.0,710.5 756.0,710.5 757.0,710.5 758.0,710.5 759.0,710.5 760.0,710.7 761.0,710.8 762.0,710.8 763.0,710.8 764.0,710.8 765.0,710.8 766.0,710.6 767.0,710.4 768.0,710.6 769.0,710.5 770.0,710.3 771.0,710.3 772.0,710.3 773.0,710.3 774.0,710.4 775.0,710.6 776.0,710.5 777.0,710.2 778.0,710.1 779.0,710.2 780.0,710.2 781.0,710.3 781.3,710.4 782.0,710.3 783.0,710.3 784.0,710.5 785.0,710.7 786.0,710.6 787.0,710.5 788.0,710.5 789.0,710.4 790.0,710.4 791.0,710.4 792.0,710.4 793.0,710.3 794.0,710.2 795.0,710.4 796.0,710.4 797.0,710.2 798.0,710.3 799.0,710.4 800.0,710.4 801.0,710.3 802.0,710.3 803.0,710.5 804.0,710.6 805.0,710.5 806.0,710.2 807.0,710.1 808.0,710.4 809.0,710.5 810.0,710.5 811.0,710.5 812.0,710.3 813.0,710.3 814.0,710.4 815.0,710.5 816.0,710.4 817.0,710.3 818.0,710.3 819.0,710.4 820.0,710.4 821.0,710.3 822.0,710.3 823.0,710.4 824.0,710.5 825.0,710.4 826.0,710.3 827.0,710.2 828.0,710.3 829.0,710.4 830.0,710.2 831.0,710.2 832.0,710.5 833.0,710.6 834.0,710.5 835.0,710.5 836.0,710.6 837.0,710.6 838.0,710.6 839.0,710.6 840.0,710.6 841.0,710.5 842.0,710.4 843.0,710.4 844.0,710.3 845.0,710.3 846.0,710.4 847.0,710.5 848.0,710.5 849.0,710.6 849.3,710.7 850.0,710.7 851.0,710.5 852.0,710.7 853.0,710.8 854.0,710.7 855.0,710.9 856.0,711.1 857.0,711.0 858.0,710.9 859.0,710.9 860.0,710.9 861.0,710.7 862.0,710.5 863.0,710.7 864.0,711.0 865.0,711.2 866.0,711.2 867.0,711.0 868.0,711.0 869.0,711.1 870.0,711.1 871.0,711.1 872.0,711.3 872.2,711.3 873.0,711.5 874.0,711.9 875.0,712.4 876.0,712.7 877.0,713.1 878.0,713.8 879.0,714.3 880.0,706.5 881.0,689.3 882.0,670.3 883.0,653.1 884.0,651.7 885.0,650.8 886.0,650.1 887.0,649.4 888.0,649.1 889.0,648.8 890.0,648.4 891.0,647.9 892.0,647.4 893.0,647.0 894.0,646.5 894.2,646.5 895.0,646.4 896.0,646.0 897.0,645.6 898.0,645.3 899.0,645.2 900.0,644.9 901.0,644.5 902.0,644.1 903.0,643.8 904.0,643.7 905.0,643.3 906.0,642.9 907.0,642.7 908.0,642.4 909.0,642.0 910.0,641.7 911.0,641.2 912.0,641.0 913.0,640.7 914.0,640.4 915.0,640.1 916.0,639.9 916.2,639.8 917.0,639.4 918.0,639.1 919.0,639.0 920.0,638.7 921.0,638.4 922.0,638.0 923.0,637.5 924.0,637.2 925.0,637.0 926.0,636.7 927.0,636.4 927.2,636.3 928.0,636.3 929.0,635.9 930.0,635.5 931.0,635.3 932.0,635.0 933.0,634.5 934.0,633.9 935.0,633.7 936.0,633.6 937.0,633.2 938.0,632.7 938.2,632.7 939.0,632.7 940.0,632.4 941.0,631.9 942.0,631.6 943.0,631.3 944.0,630.9 945.0,630.7 946.0,630.5 947.0,630.3 947.2,630.2 948.0,629.9 949.0,629.5 950.0,629.2 951.0,628.7 952.0,628.4 953.0,628.3 954.0,627.9 955.0,627.6 955.8,627.4 956.0,627.2 957.0,627.0 958.0,626.7 959.0,626.4 960.0,626.0 961.0,625.5 962.0,625.1 963.0,624.9 964.0,624.7 965.0,624.5 966.0,624.2 966.8,623.8 967.0,623.9 968.0,623.7 969.0,623.4 970.0,623.0 971.0,622.6 972.0,622.2 973.0,621.9 973.2,621.9 974.0,621.6 975.0,621.2 976.0,620.8 977.0,620.3 977.8,620.1 978.0,620.3 979.0,620.3 979.2,620.2 980.0,619.6 980.6,619.4 981.0,619.5 981.1,619.5 982.0,619.1 983.0,618.9 983.3,618.9 984.0,618.7 985.0,618.4 985.5,618.2 986.0,618.0 986.5,617.7 987.0,617.5 987.7,617.4 988.0,617.4 989.0,616.9 989.7,616.7 990.0,616.8 991.0,616.7 992.0,616.4 992.2,616.2 993.0,615.7 994.0,615.4 995.0,615.1 996.0,614.8 997.0,614.4 998.0,614.2 999.0,614.0 999.8,613.7 1000.0,613.8 1001.0,613.6 1002.0,613.3 1003.0,613.0 1004.0,612.7 1005.0,612.4 1006.0,612.0 1007.0,611.7 1007.2,611.7 1008.0,611.3 1009.0,611.0 1010.0,610.7 1011.0,610.4 1012.0,610.2 1013.0,610.0 1014.0,609.6 1015.0,609.3 1015.2,609.3 1016.0,609.0 1017.0,608.4 1018.0,608.2 1019.0,608.1 1020.0,607.7 1021.0,607.1 1022.0,606.8 1023.0,606.7 1024.0,606.4 1025.0,606.2 1026.0,606.0 1027.0,605.6 1028.0,605.2 1029.0,605.1 1030.0,604.9 1031.0,604.5 1032.0,604.2 1032.2,604.2 1033.0,603.9 1034.0,603.5 1035.0,603.0 1036.0,602.8 1037.0,602.7 1038.0,602.5 1039.0,602.2 1040.0,601.9 1041.0,601.5 1042.0,601.0 1043.0,600.6 1044.0,600.5 1045.0,600.2 1046.0,599.8 1047.0,599.4 1048.0,599.0 1049.0,598.8 1050.0,598.5 1051.0,598.2 1052.0,598.0 1053.0,597.8 1054.0,597.5 1055.0,597.2 1056.0,596.6 1057.0,596.2 1058.0,596.3 1059.0,596.2 1060.0,595.8 1061.0,595.4 1062.0,595.0 1063.0,594.6 1064.0,594.2 1065.0,593.9 1066.0,593.7 1067.0,593.5 1068.0,593.3 1069.0,592.8 1070.0,592.6 1071.0,592.4 1072.0,592.0 1072.2,591.8 1073.0,591.5 1074.0,591.4 1075.0,591.4 1076.0,591.1 1077.0,590.7 1078.0,590.4 1079.0,590.2 1080.0,589.8 1081.0,589.4 1082.0,589.2 1083.0,589.0 1084.0,588.8 1085.0,588.5 1086.0,588.3 1087.0,588.0 1088.0,587.5 1089.0,587.2 1090.0,587.2 1091.0,586.9 1092.0,586.6 1093.0,586.4 1094.0,586.1 1095.0,585.9 1096.0,585.7 1097.0,585.4 1098.0,585.1 1099.0,584.8 1100.0,584.7 1101.0,584.5 1102.0,584.3 1103.0,584.0 1104.0,583.7 1105.0,583.5 1106.0,583.2 1107.0,582.8 1108.0,582.6 1109.0,582.4 1110.0,582.3 1111.0,582.3 1112.0,582.2 1113.0,582.1 1114.0,582.1 1115.0,581.8 1116.0,581.6 1117.0,581.5 1118.0,581.3 1119.0,581.0 1120.0,580.9 1121.0,580.8 1122.0,580.7 1123.0,580.7 1124.0,580.6 1125.0,580.4 1126.0,580.3 1127.0,580.2 1128.0,580.1 1129.0,579.9 1130.0,579.7 1131.0,579.8 1132.0,579.9 1132.2,579.8 1133.0,579.7 1134.0,579.6 1135.0,579.5 1136.0,579.4 1137.0,579.4 1138.0,579.5 1139.0,579.4 1140.0,579.4 1141.0,579.3 1142.0,579.1 1143.0,579.1 1144.0,579.3 1145.0,579.4 1146.0,579.2 1147.0,579.1 1148.0,579.2 1149.0,579.3 1150.0,579.2 1151.0,579.3 1152.0,579.5 1153.0,579.7 1154.0,579.9 1155.0,580.0 1156.0,580.3 1157.0,580.3 1158.0,580.3 1159.0,580.5 1160.0,580.7 1161.0,581.1 1161.9,581.4 1162.0,581.2 1163.0,581.4 1164.0,581.8 1165.0,582.2 1165.2,582.3 1166.0,582.6 1167.0,583.0 1168.0,583.5 1168.5,583.7 1169.0,583.8 1169.2,583.7 1170.0,584.2 1171.0,584.8 1172.0,585.9 1172.2,586.2 1173.0,587.6 1173.7,590.5 1174.0,593.7 1175.0,614.2 1176.0,639.3 1176.2,644.5 1177.0,663.7 1178.0,681.8 1179.0,700.0 1180.0,707.1 1181.0,709.7 1182.0,711.2 1183.0,712.5 1184.0,713.3 1185.0,713.8 1186.0,714.3 1187.0,714.3 1188.0,714.3 1189.0,714.4 1190.0,714.5 1191.0,714.4 1192.0,714.2 1193.0,714.2 1194.0,713.9 1195.0,713.7 1196.0,713.6 1197.0,713.4 1198.0,713.2 1199.0,713.1 1200.0,712.7 1201.0,712.5 1202.0,712.5 1203.0,712.4 1204.0,712.1 1205.0,711.7 1206.0,711.6 1207.0,711.7 1208.0,711.7 1209.0,711.6 1210.0,711.5 1211.0,711.4 1212.0,711.3 1213.0,711.2 1214.0,711.2 1215.0,711.0 1216.0,711.0 1217.0,711.0 1218.0,710.9 1219.0,711.0 1220.0,711.1 1220.2,711.0 1221.0,710.9 1222.0,710.9 1223.0,711.0 1224.0,710.9 1225.0,710.7 1226.0,710.8 1227.0,710.9 1228.0,710.8 1229.0,710.9 1230.0,711.0 1231.0,710.8 1232.0,710.6 1233.0,710.5 1234.0,710.6 1235.0,710.8 1236.0,710.6 1237.0,710.4 1238.0,710.4 1239.0,710.6 1240.0,710.6 1241.0,710.6 1242.0,710.6 1243.0,710.6 1244.0,710.6 1245.0,710.7 1246.0,710.6 1247.0,710.5 1248.0,710.5 1249.0,710.5 1250.0,710.4 1251.0,710.5 1252.0,710.6 1253.0,710.6 1254.0,710.5 1255.0,710.5 1256.0,710.4 1257.0,710.4 1258.0,710.4 1259.0,710.5 1260.0,710.4 1261.0,710.3 1262.0,710.2 1263.0,710.2 1264.0,710.4 1264.2,710.4 1265.0,710.3 1266.0,710.3 1267.0,710.4 1268.0,710.5 1269.0,710.5 1270.0,710.3 1271.0,710.4 1272.0,710.4 1273.0,710.3 1274.0,710.4 1275.0,710.4" fill="none" stroke="#5f7ec4" stroke-width="1" stroke-linejoin="round" shape-rendering="crispEdges"/>
<text x="61.6" y="368.3" class="tl" text-anchor="middle">-1.6 µs</text>
<text x="191.1" y="368.3" class="tl" text-anchor="middle">0 s</text>
<text x="315.6" y="368.3" class="tl" text-anchor="middle">1.6 µs</text>
<text x="442.6" y="368.3" class="tl" text-anchor="middle">3.2 µs</text>
<text x="569.6" y="368.3" class="tl" text-anchor="middle">4.8 µs</text>
<text x="696.6" y="368.3" class="tl" text-anchor="middle">6.4 µs</text>
<text x="823.6" y="368.3" class="tl" text-anchor="middle">8 µs</text>
<text x="950.6" y="368.3" class="tl" text-anchor="middle">9.6 µs</text>
<text x="1077.6" y="368.3" class="tl" text-anchor="middle">11.2 µs</text>
<text x="1204.6" y="368.3" class="tl" text-anchor="middle">12.8 µs</text>
<text x="1252" y="223.4" class="ml" text-anchor="end">3.340227 W</text>
<text x="1252" y="240.8" class="ml" text-anchor="end">2.863051 W</text>
<text x="1252" y="258.3" class="ml" text-anchor="end">2.385876 W</text>
<text x="1252" y="275.8" class="ml" text-anchor="end">1.908701 W</text>
<text x="1252" y="293.2" class="ml" text-anchor="end">1.431526 W</text>
<text x="1252" y="310.6" class="ml" text-anchor="end">954.350 mW</text>
<text x="1252" y="328.1" class="ml" text-anchor="end">477.175 mW</text>
<text x="1264.5" y="346.2" class="ml" text-anchor="end">0 W</text>
<text x="1259.5" y="388.4" class="rl" text-anchor="end">11.76 V</text>
<text x="1259.5" y="405.9" class="rl" text-anchor="end">10.29 V</text>
<text x="1259.5" y="423.4" class="rl" text-anchor="end">8.82 V</text>
<text x="1259.5" y="440.9" class="rl" text-anchor="end">7.35 V</text>
<text x="1259.5" y="458.4" class="rl" text-anchor="end">5.88 V</text>
<text x="1259.5" y="475.9" class="rl" text-anchor="end">4.41 V</text>
<text x="1259.5" y="493.4" class="rl" text-anchor="end">2.94 V</text>
<text x="1259.5" y="510.9" class="rl" text-anchor="end">1.47 V</text>
<text x="1264.5" y="528.2" class="rl" text-anchor="end">0 V</text>
<text x="1259.5" y="545.8" class="rl" text-anchor="end">-1.47 V</text>
<text x="1258.8" y="566.2" class="bl" text-anchor="end">444 mA</text>
<text x="1256.3" y="583.8" class="bl" text-anchor="end">388.5 mA</text>
<text x="1258.8" y="601.3" class="bl" text-anchor="end">333 mA</text>
<text x="1256.3" y="618.9" class="bl" text-anchor="end">277.5 mA</text>
<text x="1258.8" y="636.4" class="bl" text-anchor="end">222 mA</text>
<text x="1256.3" y="654.0" class="bl" text-anchor="end">166.5 mA</text>
<text x="1258.8" y="671.5" class="bl" text-anchor="end">111 mA</text>
<text x="1256.3" y="689.1" class="bl" text-anchor="end">55.5 mA</text>
<text x="1264.5" y="707.6" class="bl" text-anchor="end">0 A</text>
<text x="8" y="326.8" font-size="13.9" fill="#ee9a38" stroke="#ee9a38" stroke-width="0.2" font-family="Liberation Sans, sans-serif">SWL: Power (Power 1)</text>
<path d="M7.4 333.2 h16.3 l7.8 8.1 l-7.8 8.1 h-16.3 z" fill="#f0962a" stroke="#f0962a" stroke-width="1.2" stroke-linejoin="round"/>
<text x="11.3" y="345" font-size="9.6" fill="#2e1c06" stroke="#2e1c06" stroke-width="0.3" font-family="Liberation Sans, sans-serif">M 1</text>
<path d="M7 515.2 h16.8 l8.4 9 l-8.4 9 h-16.8 z" fill="#1c1c1c" stroke="#b4b4b4" stroke-width="1.4" stroke-linejoin="round"/>
<text x="12.4" y="527.7" font-size="9.5" fill="#d8d8d8" font-family="Liberation Sans, sans-serif">R 1</text>
<path d="M7 694.5 h16.8 l8.4 9 l-8.4 9 h-16.8 z" fill="#141a28" stroke="#7f93b8" stroke-width="1.4" stroke-linejoin="round"/>
<text x="12.4" y="707" font-size="9.5" fill="#9fb4dc" font-family="Liberation Sans, sans-serif">R 2</text>
<path d="M186.5 197.6 h14 l-7 7 z" fill="#f0962a"/><path d="M186.8 205.6 h13.4 v13.4 h-4.2 l-2.5 4.6 l-2.5 -4.6 h-4.2 z" fill="#000" stroke="#f0962a" stroke-width="1.6" stroke-linejoin="miter"/><text x="193.5" y="216.4" font-size="11" font-weight="bold" fill="#f0962a" text-anchor="middle" font-family="Liberation Sans, sans-serif">T</text>
</svg>

<div id="zoombar">
<span style="left:10px">Horizontal Zoom Scale</span>
<div class="zin">1.60 us/div</div>
<div class="zb" style="left:194.5px"><i></i><b></b></div>
<div class="zb" style="left:235px"><i></i></div>
<span style="left:270px">(2.50x zoom)</span>
<span style="left:342px">Vertical Zoom</span>
<div class="zb" style="left:412px"><i></i><b></b></div>
<div class="zb" style="left:452px"><i></i></div>
<span style="left:487px">(1.00x zoom)</span>
<svg class="abs" style="left:1254px;top:3.5px" width="12" height="12" viewBox="0 0 12 12"><path d="M1.2 1.2 L10.8 10.8 M10.8 1.2 L1.2 10.8" stroke="#e6e6e6" stroke-width="1.7" fill="none"/></svg>
</div>

<!-- right panel -->
<div id="addnew">Add New...</div>
<div class="rbtn" style="left:1293px;top:42px">Cursors</div>
<div class="rbtn" style="left:1345px;top:42px">Note</div>
<div class="rbtn" style="left:1293px;top:75px;letter-spacing:-0.2px">Measure</div>
<div class="rbtn" style="left:1345px;top:75px">Search</div>
<div class="rbtn two" style="left:1293px;top:108px">Results<br>Table</div>
<div class="rbtn" style="left:1345px;top:108px">Plot</div>
<div class="abs" style="left:1291px;top:140px;width:106px;height:1px;background:#5a5a5a"></div>

<div id="pbadge">
<div class="hd"><span>Power 1</span>
<svg class="abs" style="left:70.5px;top:2.8px" width="35" height="8.3" viewBox="0 0 38 9" preserveAspectRatio="none"><rect x="0.3" y="0.3" width="37.4" height="8.4" rx="2.2" fill="#86a8ee"/><path d="M2.5 0.3 H22 L15.5 8.7 H2.5 A2.2 2.2 0 0 1 0.3 6.5 V2.5 A2.2 2.2 0 0 1 2.5 0.3 Z" fill="#d6dae4"/><path d="M22.4 0.2 L15.9 8.8" stroke="#223" stroke-width="0.8"/><text x="3" y="7.3" font-size="7.2" fill="#333" font-family="Liberation Sans, sans-serif">R1</text><text x="24.5" y="7.3" font-size="7.2" fill="#223a70" font-family="Liberation Sans, sans-serif">R2</text></svg>
</div>
<div class="ln" style="top:15.3px;transform:scaleX(.9)">Switching Loss'</div>
<div class="bk" style="top:31.4px;color:#22e022">Ton:</div><div class="v" style="top:30.2px">12.71 mW</div>
<div class="bk" style="top:45.4px;color:#e42020">Toff:</div><div class="v" style="top:44.2px">181.1 mW</div>
<div class="ln" style="top:57.5px">Cond:</div><div class="v" style="top:57.5px">782.3 µW</div>
<div class="bk" style="top:73.2px;color:#e6e63a">Total:</div><div class="v" style="top:72px">194.6 mW</div>
<div class="abs" style="left:0;top:87.5px;width:100%;height:1px;background:#8c8c8c"></div>
<div class="ln" style="top:88.3px">Values</div>
<div class="bk" style="top:103.6px;color:#22e022">Ton:</div><div class="v" style="top:102.4px">12.691 mW</div>
<div class="bk" style="top:117.6px;color:#e42020">Toff:</div><div class="v" style="top:116.4px">180.726 mW</div>
<div class="ln" style="top:129.7px">Cond:</div><div class="v" style="top:129.7px">778.920 uW</div>
<div class="bk" style="top:145.4px;color:#e6e63a">Total:</div><div class="v" style="top:144.2px">194.196 mW</div>
<div class="pbtn" style="left:7px;top:161.5px"><svg width="14" height="16" viewBox="0 0 14 16" style="margin-top:4px"><path d="M10 2.2 L4 8 L10 13.8" stroke="#3c3c3c" stroke-width="2.6" fill="none"/></svg></div>
<div class="pbtn" style="left:55.5px;top:161.5px"><svg width="14" height="16" viewBox="0 0 14 16" style="margin-top:4px"><path d="M4 2.2 L10 8 L4 13.8" stroke="#3c3c3c" stroke-width="2.6" fill="none"/></svg></div>
<div class="pbtn" style="left:7px;top:194.3px">Min</div>
<div class="pbtn" style="left:55.5px;top:194.3px">Max</div>
</div>
<!-- drag dots -->
<svg class="abs" style="left:1279px;top:366px" width="8" height="20" viewBox="0 0 8 20"><circle cx="3.4" cy="4" r="1.5" fill="#dedede"/><circle cx="3.4" cy="10.2" r="1.5" fill="#dedede"/><circle cx="3.4" cy="16.4" r="1.5" fill="#dedede"/></svg>

<!-- right bottom icons -->
<div class="abs" style="left:1291px;top:692px;width:106px;height:1px;background:#5e5e5e"></div>
<div class="rbtn" style="left:1293px;top:699px;width:46px;height:27px;border-color:#7c7c7c;background:linear-gradient(#424242,#3a3a3a 60%,#333)"></div>
<svg class="abs" style="left:1300px;top:699px" width="32" height="27" viewBox="0 0 32 27">
<path d="M7 5.5h1.3M10.3 5.5h1.3M13.7 5.5h1.3M16.7 5.5h1.3 M7 9.2h1.3M16.7 9.2h1.3 M7 12.3h1.3 M7 15.4h1.3M10 15.6h1.2" stroke="#c9c9c9" stroke-width="1.3" fill="none"/>
<circle cx="17" cy="14.9" r="3.5" fill="#8a8a8a" stroke="#d2d2d2" stroke-width="1.4"/>
<path d="M19.9 17.8 L23.9 21.4" stroke="#d2d2d2" stroke-width="2.5" stroke-linecap="round"/>
</svg>
<svg class="abs" style="left:1362px;top:699px" width="26" height="27" viewBox="0 0 26 27">
<path d="M4.3 7.2 L6.1 22.3 Q6.3 24.2 12.8 24.4 Q19.3 24.2 19.5 22.3 L21.3 7.2" fill="#3a3a3a" stroke="#dcdcdc" stroke-width="1.3"/>
<rect x="3.5" y="2.6" width="18.6" height="5" rx="2.5" ry="2.3" fill="#444" stroke="#dcdcdc" stroke-width="1.3"/>
<path d="M5.5 4.3 Q13 3 20.5 4.3" stroke="#bdbdbd" stroke-width="0.9" fill="none"/>
<path d="M8.7 9.3 L9.2 22.3 M16.8 9.3 L16.3 22.3" stroke="#c4c4c4" stroke-width="1.2"/>
<path d="M12.7 9.3 V22.8" stroke="#ececec" stroke-width="1.5"/>
</svg>

<!-- bottom bar -->
<div class="badge" style="left:4px;width:65.5px"><div class="hd" style="background:#f2962c;color:#2a1a06">Math 1</div>
<div class="ln" style="top:16.2px">477.1752...</div><div class="ln" style="top:30.2px">Ref1*Ref2</div><div class="ln" style="top:44px">Power 1</div></div>
<div class="badge" style="left:73.7px;width:65.5px"><div class="hd" style="background:#4b4b4b;color:#cfcfcf">Ref 1</div>
<div class="ln" style="top:16.2px">1.47 V/div</div><div class="ln" style="top:30.2px">100 MS/s</div><div class="ln" style="top:44px">Switchin...</div></div>
<div class="badge" style="left:143px;width:65.5px"><div class="hd" style="background:#3a4456;color:#8fa9de">Ref 2</div>
<div class="ln" style="top:16.2px">55.5 mA/...</div><div class="ln" style="top:30.2px">100 MS/s</div><div class="ln" style="top:44px">Switchin...</div></div>

<div class="chb" style="left:617px"><u style="background:#efe12c"></u><span>1</span></div>
<div class="chb" style="left:649.8px"><u style="background:#22ccd6"></u><span>2</span></div>
<div class="chb" style="left:682.7px"><u style="background:#e8305c"></u><span>3</span></div>
<div class="chb" style="left:715.5px"><u style="background:#86c830"></u><span>4</span></div>
<div class="chb" style="left:748.3px"><u style="background:#f39320"></u><span>5</span></div>
<div class="chb" style="left:781.2px"><u style="background:#2030d8"></u><span>6</span></div>
<div class="vsep" style="left:818px"></div>
<div class="chb add" style="left:826px"><u style="background:#8e2ea0"></u><span>Add<br>New<br>Math</span></div>
<div class="chb add" style="left:858.8px"><u style="background:#b4d2a4"></u><span>Add<br>New<br>Ref</span></div>
<div class="chb add" style="left:891.7px"><u style="background:#d05ee4"></u><span>Add<br>New<br>Bus</span></div>
<div class="vsep" style="left:927.8px"></div>

<div class="badge" style="left:936px;width:149px"><div class="hd" style="background:#686868;color:#f0f0f0">Horizontal</div>
<div class="ln" style="top:16.2px">4 µs/div</div><div class="ln" style="top:30.2px;transform:scaleX(.82)">SR: 6.25 GS/s</div><div class="ln" style="top:44px">RL: 250 kpts</div>
<div class="ln" style="top:16.2px;left:83px">40 µs</div><div class="ln" style="top:30.2px;left:83px">160 ps/pt</div><div class="ln" style="top:44px;left:94px">50%</div>
<svg class="abs" style="left:84px;top:47px" width="6.4" height="8.4" viewBox="0 0 8 10"><path d="M0.8 0.8 H7.2 V6 L4 9.2 L0.8 6 Z" fill="#e8881c" stroke="#e8881c" stroke-width="0.8"/><path d="M2.3 2.3 H5.7 M4 2.3 V6" stroke="#2a1a06" stroke-width="1.3"/></svg>
</div>
<div class="badge" style="left:1092.2px;width:117px"><div class="hd" style="background:#686868;color:#f0f0f0">Trigger</div>
<div class="abs" style="left:5px;top:17.6px;width:22px;height:12.6px;background:#f1e92a;border:1.2px solid #3a3a1c;border-radius:4px;font-size:11.5px;line-height:10.4px;text-align:center;color:#111">1</div>
<svg class="abs" style="left:33px;top:18px" width="14" height="12" viewBox="0 0 14 12"><path d="M0.8 10.2 H4.4 L9 1.8 H13" stroke="#444" stroke-width="1" fill="none"/></svg>
<div class="ln" style="top:16.2px;left:53px">0 A</div>
</div>
<div class="badge" style="left:1216px;width:110px"><div class="hd" style="background:#686868;color:#f0f0f0">Acquisition</div>
<svg class="abs" style="left:96px;top:2px" width="11" height="10" viewBox="0 0 11 10"><path d="M5.5 0.6 L10.4 9.2 H0.6 Z" fill="#f4ee1c" stroke="#c8c21a" stroke-width="0.6"/><path d="M5.5 3.2 V6.4 M5.5 7.3 V8.4" stroke="#fff" stroke-width="1.1"/></svg>
<div class="ln" style="top:16.2px">Auto,</div><div class="ln" style="top:16.2px;left:48px">Analyze</div><div class="ln" style="top:30.2px">Sample</div><div class="ln" style="top:44px">190 Acqs</div>
</div>
<div class="abs" style="left:1334px;top:733px;width:64.5px;height:25.5px;background:#f82a32;border-radius:4px;border:1px solid #d85050;color:#fff;font-size:10.2px;font-weight:bold;text-align:center;line-height:23px;letter-spacing:-0.15px">Stopped</div>
</body>
</html>
